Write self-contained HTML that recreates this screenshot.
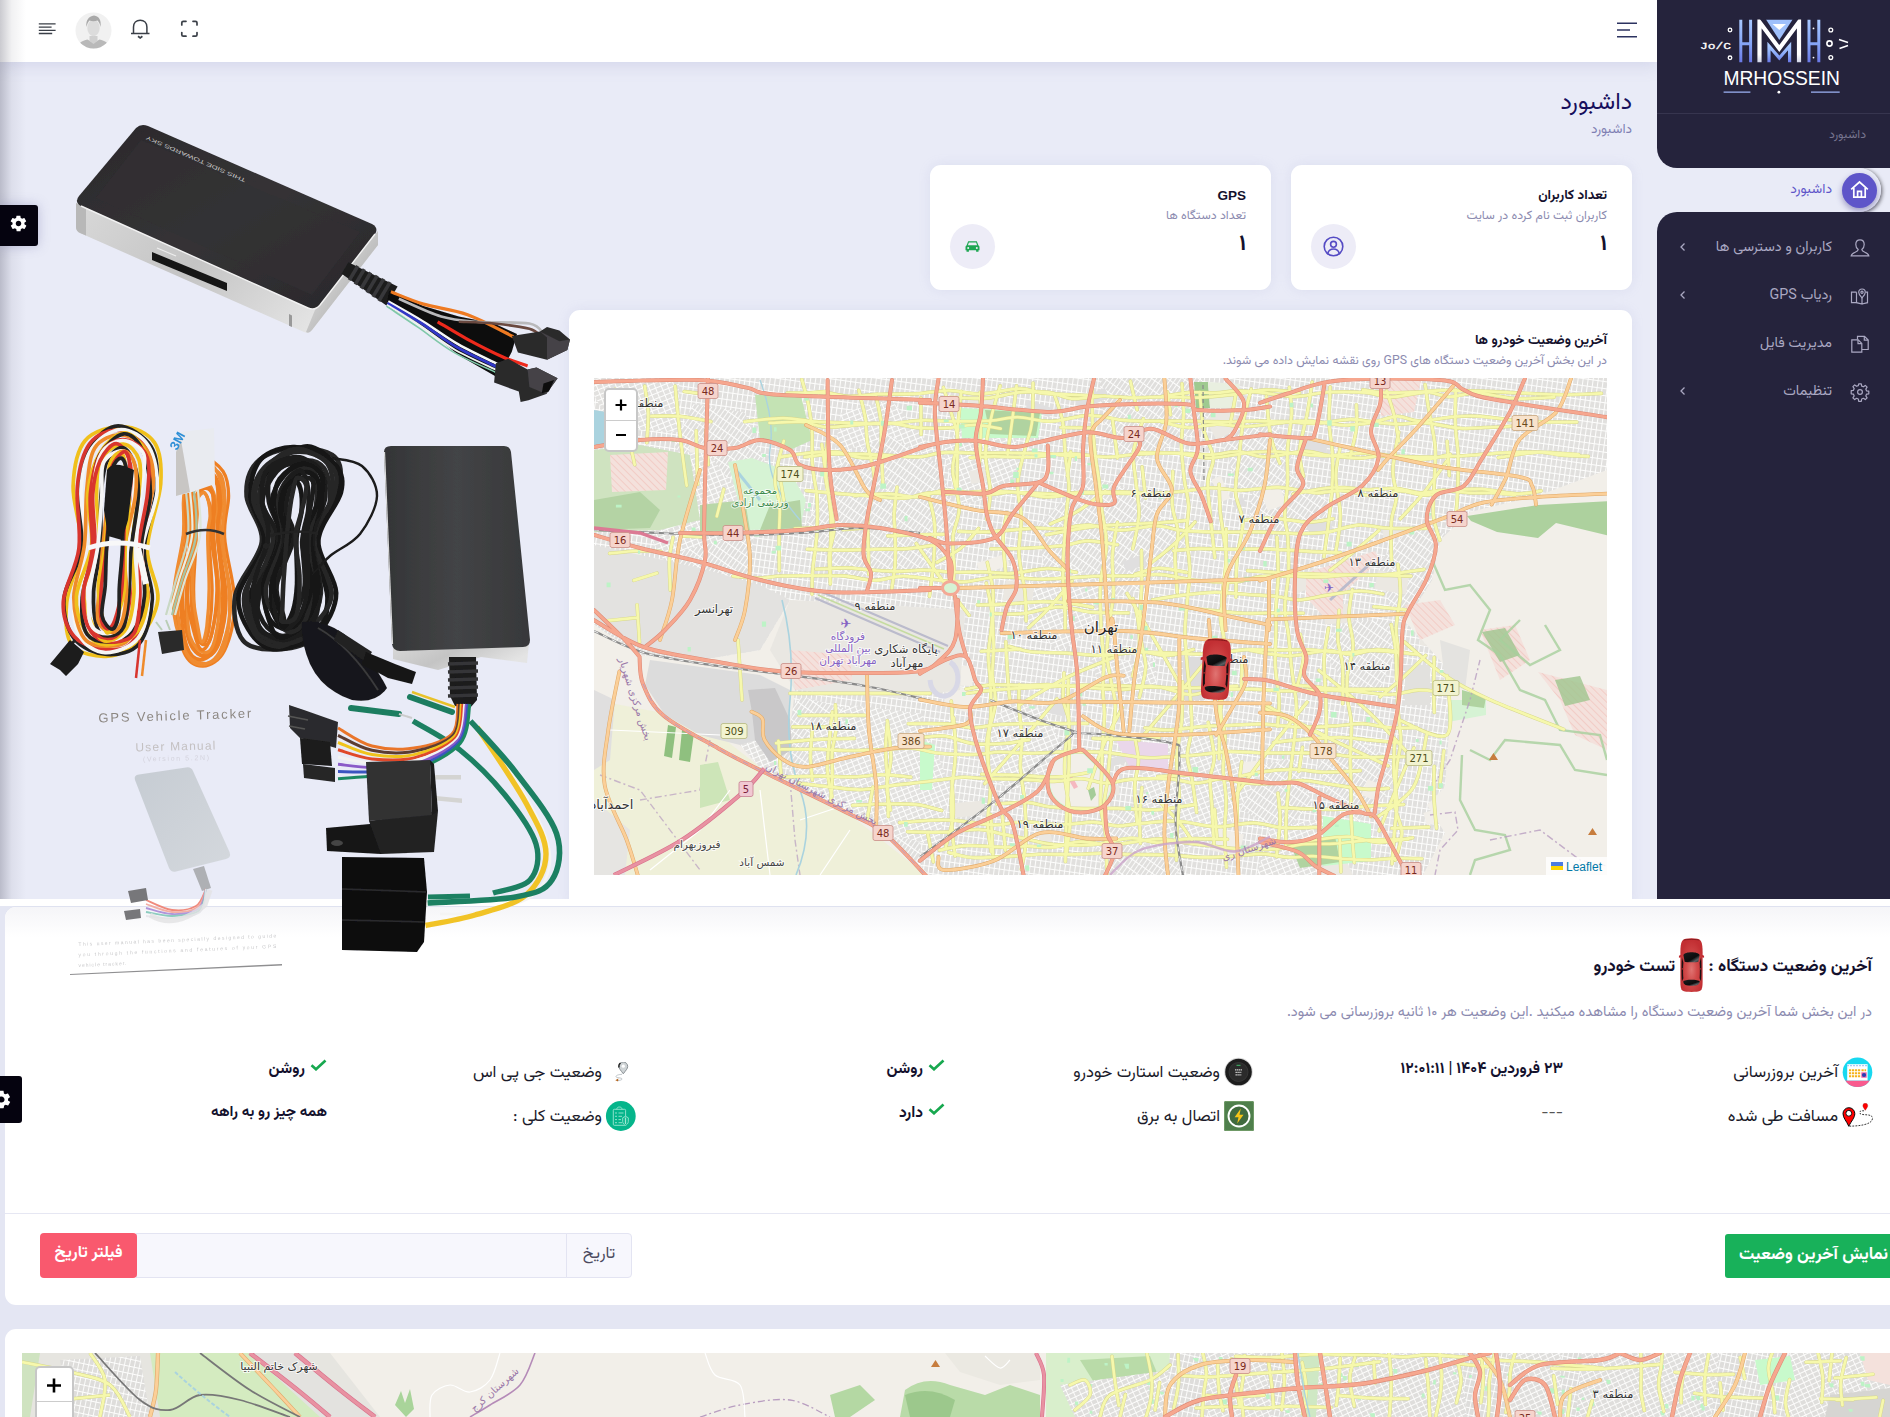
<!DOCTYPE html>
<html lang="fa" dir="rtl">
<head>
<meta charset="utf-8">
<title>داشبورد</title>
<style>
*{box-sizing:border-box;margin:0;padding:0}
html,body{width:1890px;height:1417px;overflow:hidden;background:#e9ebf7}
body{position:relative;font-family:"Liberation Sans","Vazirmatn","DejaVu Sans",sans-serif;color:#14112d;direction:rtl}
.abs{position:absolute}
.fa{font-family:"Vazirmatn","DejaVu Sans","Liberation Sans",sans-serif}
/* header */
#hdr{left:0;top:0;width:1657px;height:62px;background:#fff;box-shadow:0 4px 14px rgba(150,155,200,.25)}
#lshade{left:0;top:0;width:26px;height:899px;background:linear-gradient(90deg,rgba(60,60,80,.27),rgba(60,60,80,.07) 45%,rgba(60,60,80,0));z-index:5}
/* sidebar */
#sb-top{left:1657px;top:0;width:233px;height:168px;background:#25233c;border-bottom-left-radius:20px}
#sb-bot{left:1657px;top:212px;width:233px;height:687px;background:#25233c;border-top-left-radius:20px}
#sb-sep{left:1657px;top:113px;width:233px;height:1px;background:#37354f}
#sb-cap{right:24px;top:125px;white-space:nowrap;font-size:12.2px;color:#77758f}
#pill{left:-20px;top:18px;width:244px;height:44px;background:#e9ebf7;border-radius:0 22px 22px 0}#pillsh{left:180px;top:18px;width:44px;height:44px;border-radius:50%;box-shadow:1px 1px 4px rgba(0,0,0,.6)}
#pillc{left:1842px;top:173px;width:35px;height:35px;border-radius:50%;background:#5e55c9;box-shadow:0 3px 6px rgba(40,30,120,.4)}
.mi{right:58px;width:170px;font-size:14.3px;color:#aaa8c2;text-align:right;line-height:24px;margin-top:1.5px;height:24px;white-space:nowrap}
.chev{left:1679px;width:8px;height:10px}
/* title */
#ttl{right:258px;top:86px;font-size:23.6px;line-height:36px;color:#170f5c;white-space:nowrap}
#sub{right:258px;top:119.5px;font-size:13.5px;line-height:20px;color:#7f7fb3;white-space:nowrap}
.card{background:#fff;border-radius:11px;box-shadow:0 0 12px rgba(160,165,210,.18)}
.ct{font-weight:bold;font-size:13.5px;line-height:20px;color:#14112d;white-space:nowrap}
.cs{font-size:12.3px;line-height:18px;color:#8c8bb0;white-space:nowrap}
.cn{font-weight:bold;font-size:22px;line-height:28px;color:#14112d}
.ic{width:45px;height:45px;border-radius:50%;background:#edecf7}

/* bottom */
#strip{left:0;top:899px;width:1890px;height:7px;background:#fff}
#bwrap{left:0;top:906px;width:1890px;height:511px;background:#e4e6f3}
#bcard{left:5px;top:907px;width:1900px;height:398px;background:#fff;border-radius:11px;box-shadow:0 -1px 0 #dfe2f0}
#bgrad{left:5px;top:907px;width:1900px;height:30px;border-top-left-radius:11px;background:linear-gradient(180deg,#f5f5f8,#fff)}
#bdiv{left:5px;top:1213px;width:1890px;height:1px;background:#e6e7f3}
#bt{right:18px;top:951.5px;font-size:17px;font-weight:bold;line-height:30px;white-space:nowrap;color:#14112d}
#bd{right:18px;top:1002px;font-size:14.45px;line-height:22px;color:#8c8bb0;white-space:nowrap}
.lb{font-size:16.6px;line-height:28px;color:#1b1b2a;white-space:nowrap}
.vl{font-size:15.6px;font-weight:bold;line-height:24px;color:#14112d;white-space:nowrap}
.ck{display:inline-block;width:17px;height:12px;vertical-align:2px;margin-left:5px}
#gbtn{left:1725px;top:1234px;width:200px;height:44px;background:#18b15a;border-radius:3px 0 0 3px;color:#fff;font-size:16.9px;font-weight:bold;line-height:42px;padding-right:37px;text-align:right;white-space:nowrap}
#rbtn{left:40px;top:1233px;width:97px;height:45px;background:#f9596e;border-radius:4px;color:#fff;font-size:16.2px;font-weight:bold;line-height:41px;text-align:center;white-space:nowrap;z-index:2}
#inp{left:136px;top:1233px;width:431px;height:45px;background:#f7f7fd;border:1px solid #e3e4f2}
#ilb{left:566px;top:1233px;width:66px;height:45px;background:#f7f7fd;border:1px solid #e3e4f2;border-radius:0 4px 4px 0;font-size:16.3px;line-height:41px;text-align:center;color:#4a4a5e}
#card2{left:5px;top:1329px;width:1900px;height:120px;background:#fff;border-radius:11px}
</style>
</head>
<body>
<!-- HEADER -->
<div id="hdr" class="abs"></div>
<!-- header icons go here -->

<svg class="abs" style="left:1615px;top:20px" width="24" height="20" viewBox="0 0 24 20" fill="none" stroke="#2c3360" stroke-width="1.6"><path d="M2 3.300H22M2 10H15M2 16.700H22"/></svg>
<svg class="abs" style="left:36px;top:20px" width="22" height="18" viewBox="36 20 22 18" fill="none" stroke="#3a3f47" stroke-width="1.300"><path d="M38.800 23.800H55.600M38.800 27.100H51.600M38.800 30.400H55.600M38.800 33.500H52.200"/></svg>
<svg class="abs" style="left:75px;top:12px" width="37" height="37" viewBox="0 0 37 37"><defs><clipPath id="avc"><circle cx="18.500" cy="18.500" r="18"/></clipPath></defs><circle cx="18.500" cy="18.500" r="18" fill="#f1f1f1"/><g clip-path="url(#avc)"><path d="M2 37c.5-6 5-8 10.500-9.500l6 3.500 6-3.500C30 29 34.500 31 35 37z" fill="#b9b9b9"/><path d="M14.500 24h8v5l-4 3-4-3z" fill="#d0d0d0"/><ellipse cx="18.500" cy="16" rx="6.200" ry="8.200" fill="#dcdcdc"/><path d="M11.500 15c-1-6 2-11 7.500-11.500C24.500 4 26.500 9 25.500 15c-.5-3-1.500-5-3-6.500-2.500 1-6 1-8 0-1.500 1.500-2.500 3.500-3 6.500z" fill="#a9a9a9"/></g></svg>
<svg class="abs" style="left:129px;top:18px" width="23" height="22" viewBox="129 18 23 22" fill="none" stroke="#3a3f47" stroke-width="1.500"><path d="M131 33.500H149.500M133.500 33.500V27c0-4 2.800-6.800 6.700-6.800s6.700 2.800 6.700 6.800v6.500"/><path d="M138 36.300l2.200 1.600 2.200-1.600" stroke-width="1.700"/></svg>
<svg class="abs" style="left:179px;top:18px" width="21" height="21" viewBox="179 18 21 21" fill="none" stroke="#3a3f47" stroke-width="1.700" stroke-linecap="round" stroke-linejoin="round"><path d="M181.800 25V22.800q0-1.500 1.500-1.500H186M193 21.300h2.500q1.500 0 1.500 1.500V25M197 32.500v2.200q0 1.500-1.500 1.500H193M186 36.200h-2.700q-1.500 0-1.500-1.500V32.500"/></svg>


<!-- TITLE -->
<div id="ttl" class="abs fa">داشبورد</div>
<div id="sub" class="abs fa">داشبورد</div>

<!-- STAT CARDS -->
<div class="abs card" style="left:1291px;top:165px;width:341px;height:125px"></div>
<div class="abs ct fa" style="right:283px;top:185.5px">تعداد کاربران</div>
<div class="abs cs fa" style="right:283px;top:206.5px">کاربران ثبت نام کرده در سایت</div>
<div class="abs cn fa" style="right:283px;top:230.5px">۱</div>
<div class="abs ic" style="left:1311px;top:224px"></div>
<svg class="abs" style="left:1322px;top:235px" width="23" height="23" viewBox="0 0 23 23" fill="none" stroke="#554bc4" stroke-width="1.600"><circle cx="11.500" cy="11.500" r="9.300"/><circle cx="11.500" cy="9.300" r="2.900"/><path d="M5.800 18.300c.8-3 3-4.300 5.700-4.300s4.900 1.300 5.700 4.300"/></svg>

<div class="abs card" style="left:930px;top:165px;width:341px;height:125px"></div>
<div class="abs ct" style="right:644px;top:185.5px">GPS</div>
<div class="abs cs fa" style="right:644px;top:206.5px">تعداد دستگاه ها</div>
<div class="abs cn fa" style="right:644px;top:230.5px">۱</div>
<div class="abs ic" style="left:950px;top:224px"></div>
<svg class="abs" style="left:965px;top:240px" width="15" height="13" viewBox="0 0 15 13"><path d="M3.200 1.200h8.600l1.700 4.300c.6.200 1 .7 1 1.400v3.300h-1v1.600h-2.400v-1.600H3.900v1.600H1.500v-1.600h-1V6.900c0-.7.400-1.200 1-1.400z" fill="#1ea652"/><path d="M3.900 2.400h7.200l1 2.800H2.900z" fill="#edecf7"/><circle cx="3.200" cy="7.900" r="1" fill="#edecf7"/><circle cx="11.800" cy="7.900" r="1" fill="#edecf7"/></svg>


<!-- MAP CARD -->
<div class="abs card" style="left:569px;top:310px;width:1063px;height:600px"></div>
<div class="abs ct fa" style="right:283px;top:331px">آخرین وضعیت خودرو ها</div>
<div class="abs cs fa" style="right:283px;top:352px">در این بخش آخرین وضعیت دستگاه های GPS روی نقشه نمایش داده می شوند.</div>
<svg class="abs" style="left:594px;top:378px" width="1013" height="497" viewBox="594 378 1013 497" direction="ltr">
<defs>
<pattern id="r1" width="5" height="7" patternUnits="userSpaceOnUse" patternTransform="rotate(8)"><rect width="5" height="7" fill="#e1e0de"/><path d="M0 0H5M0 0V7" stroke="#fdfdfc" stroke-width="2.1"/></pattern>
<pattern id="r2" width="6" height="5" patternUnits="userSpaceOnUse" patternTransform="rotate(-22)"><rect width="6" height="5" fill="#e2e1df"/><path d="M0 0H6M0 0V5" stroke="#fdfdfc" stroke-width="2"/></pattern>
<pattern id="r3" width="4" height="9" patternUnits="userSpaceOnUse" patternTransform="rotate(35)"><rect width="4" height="9" fill="#e0dfdd"/><path d="M0 0H4M0 0V9" stroke="#fdfdfc" stroke-width="1.9"/></pattern>
<pattern id="hp" width="5" height="5" patternUnits="userSpaceOnUse" patternTransform="rotate(45)"><rect width="5" height="5" fill="#f4e1dc"/><path d="M0 0H5" stroke="#f0b8b0" stroke-width="1"/></pattern>
<clipPath id="mc"><rect x="594" y="378" width="1013" height="497"/></clipPath>
<clipPath id="uc"><path d="M594 378L1607 378L1607 470L1540 495L1470 512L1440 540L1432 580L1410 615L1404 620L1445 666L1449 731L1445 787L1427 805L1445 833L1423 875L930 875L884 833L847 813L764 772L740 745L790 730L795 690L960 690L965 610L790 600L760 650L700 660L640 655L594 625Z"/></clipPath>
</defs>
<g clip-path="url(#mc)">
<rect x="594" y="378" width="1013" height="497" fill="#f2efe9"/>
<path d="M594 700L700 720L770 775L850 815L930 878L594 878Z" fill="#eef0d5" opacity=".8"/>
<path d="M594 378L1607 378L1607 470L1540 495L1470 512L1440 540L1432 580L1410 615L1404 620L1445 666L1449 731L1445 787L1427 805L1445 833L1423 875L930 875L884 833L847 813L764 772L740 745L790 730L795 690L960 690L965 610L790 600L760 650L700 660L640 655L594 625Z" fill="url(#r1)"/>
<g clip-path="url(#uc)">
<path d="M890.8 399.6L942.7 460.2L879.9 507.7L829.3 482.1L841.2 412.9Z" fill="url(#r2)"/>
<path d="M1096.7 680L1091.7 658.7L1119.1 642.8L1142.8 631.5L1155.5 658.9L1156.6 684.9L1129 689.7Z" fill="url(#r2)"/>
<path d="M1056.1 633.6L1089.9 591.9L1138.3 585.6L1165.1 612L1152.1 660.7L1103.2 660.6Z" fill="url(#r1)"/>
<path d="M910.7 763.9L919.4 728.7L952.5 718.2L980.3 733.9L987.4 765.2L950.4 782.3Z" fill="url(#r1)"/>
<path d="M1099.7 382.7L1145.5 337.9L1193.3 353L1212.3 412.2L1193 449.8L1144.3 475.3L1106.5 439.3Z" fill="url(#r3)"/>
<path d="M694.7 558.2L717.8 605.9L680.3 666.2L630.9 621.1L634.9 569.7Z" fill="url(#r3)"/>
<path d="M1264.5 490.5L1259.3 437.9L1315.7 428.8L1343.9 473L1308.2 517Z" fill="url(#r1)"/>
<path d="M1226.5 576.7L1245.1 531.3L1296.6 538.7L1301.4 596L1260.9 630.2Z" fill="url(#r1)"/>
<path d="M574.3 764.2L649.1 771.1L675.6 823.6L626.9 857.8L581 834.2Z" fill="url(#r1)"/>
<path d="M835.3 818.4L788.7 811.7L789.1 766.3L835.9 760L866.4 787.3Z" fill="url(#r2)"/>
<path d="M877.6 544L832 500.2L852.1 447.7L901.8 444.9L942.1 461L935.5 499.5L916.6 530.9Z" fill="url(#r1)"/>
<path d="M1189.3 544.1L1144.9 588L1100.7 601.1L1048.9 588.5L1036.6 525.8L1087.5 476.7L1135.5 490.6Z" fill="url(#r3)"/>
<path d="M1207.7 762.9L1214.9 705.4L1281.7 698.1L1294.1 756L1263.7 783.5Z" fill="url(#r1)"/>
<path d="M1399 771L1386.6 794.8L1357.6 820.9L1327.3 795.1L1317.3 764.3L1345 734.9L1375.6 748.9Z" fill="url(#r3)"/>
<path d="M991.2 780.6L984.1 738.1L1008.1 702.4L1044.8 709.7L1064.5 751.5L1050.6 777.4L1014.2 789.2Z" fill="url(#r2)"/>
<path d="M1246.1 421.7L1276.2 426.1L1293.5 455.2L1273 478.4L1243 493.2L1218.5 467.2L1216 431.5Z" fill="url(#r3)"/>
<path d="M854.4 804L916.3 813.2L925.4 894.1L855.1 902.9L816.1 860.3Z" fill="url(#r3)"/>
<path d="M693 404.1L744.7 412.2L766.1 465.9L708.3 483.9L674.4 446.6Z" fill="url(#r3)"/>
<path d="M811.2 880.1L759.4 899.6L740.4 847.8L762.2 816.5L805 809.6L830 845.4Z" fill="url(#r3)"/>
<path d="M927.2 713.9L854.3 721.7L834 680.6L868.8 628.1L930.7 653.4Z" fill="url(#r1)"/>
<path d="M1251.5 495L1281.8 467.7L1309.3 485.5L1333.3 506.4L1314.7 527.9L1278.5 533L1248.6 522.2Z" fill="url(#r3)"/>
<path d="M1483.2 626.8L1427.9 639.2L1391.8 613.6L1378.1 563.1L1411 527.4L1473.2 538.4L1497.5 580.5Z" fill="url(#r3)"/>
<path d="M587.6 384.7L618.5 334.7L679 362L678.5 432L613.3 428.3Z" fill="url(#r2)"/>
<path d="M937.1 846.8L873.3 829.6L830.6 820.9L835.7 769.5L872 733.9L924.3 727.2L951.1 786.5Z" fill="url(#r2)"/>
<path d="M957.2 504.4L943.1 450.4L966.5 418.8L1011.9 424L1022 465.3L1003.2 496.4Z" fill="url(#r2)"/>
<path d="M701.2 788.6L688.4 814.9L659.3 816.7L637.8 787.9L643.1 758.5L677.5 734.3L699.2 756.2Z" fill="url(#r1)"/>
<path d="M673.8 733.2L727.5 723.7L773 746.7L788.2 808.7L741.7 854.4L685.5 840.4L671.3 788.5Z" fill="url(#r2)"/>
<path d="M1089.2 832.6L1127.2 805.3L1160.3 816.3L1184.1 866.6L1142.5 899.6L1108.7 883Z" fill="url(#r3)"/>
<path d="M1285 833.1L1236.4 807.2L1246.1 769.2L1293.9 757.2L1311.8 802.6Z" fill="url(#r3)"/>
<path d="M841.6 775.6L804.4 776.4L782.2 764.8L769 730L801.6 696.8L845 708.3L851.2 742.2Z" fill="url(#r3)"/>
<path d="M674.9 601.6L658 645.8L592 670.4L559.2 607.3L578 546.1L640.8 560.7Z" fill="url(#r3)"/>
<path d="M828.9 866.8L764.3 864.1L749.7 803L796.6 774.5L838.1 808.2Z" fill="url(#r3)"/>
<path d="M687.1 888.5L630 859.9L651.8 807.7L690.5 790.7L730.4 778.9L753.3 835.8L731.8 875.2Z" fill="url(#r1)"/>
<path d="M920.8 713.5L939.7 783.6L878.4 828.6L830.5 806.7L806.9 736.3L851.1 704.9Z" fill="url(#r2)"/>
<path d="M1347.9 684.7L1318.7 647.5L1348.1 620.3L1387.2 620.7L1395.7 651.4L1379.6 690.6Z" fill="url(#r3)"/>
<path d="M1021.8 618.4L1032.8 576.7L1064.9 561.6L1108.9 586L1088.5 631.7L1059.6 652.1Z" fill="url(#r2)"/>
<path d="M890 529.6L914.6 507.9L949.2 532.2L952.3 559.3L918.6 576.8L892.5 566.8Z" fill="url(#r2)"/>
<path d="M767.5 579L758.6 646.6L686.9 646.3L647.8 602.9L672.3 551.4L732 542.9Z" fill="url(#r1)"/>
<path d="M1142 769.8L1189.3 710.3L1259 776.7L1219.6 841.9L1145.4 855.7Z" fill="url(#r2)"/>
<path d="M639 575.1L641.2 494.8L699.6 441L759.1 520.7L709.7 581.7Z" fill="url(#r2)"/>
<path d="M681.4 590.4L634.2 630.2L569 615.6L589.9 552.9L647.2 532.6Z" fill="url(#r1)"/>
<path d="M971.3 397.6L945 416.8L908 412.3L881.1 384.1L903.9 348.9L943.2 342.3L979.5 369.1Z" fill="url(#r1)"/>
<path d="M740.9 595.2L715.1 619.6L680.3 592.2L677.6 552L715 542L753.1 537.9L751.1 572.5Z" fill="url(#r3)"/>
<path d="M1347.1 863.4L1322.8 898.8L1254.2 885.7L1269.4 827.9L1323.7 818.6Z" fill="url(#r2)"/>
<path d="M1209.5 536.8L1168.2 514.5L1130.8 465.9L1178.9 440L1217.3 425.1L1237 485.8Z" fill="url(#r1)"/>
<path d="M962.5 534.6L919.1 570.6L846.8 578.8L803 528.9L845.5 457.9L887.5 434.1L940.8 465.6Z" fill="url(#r3)"/>
<rect x="1367.4" y="779.3" width="13.2" height="16.9" fill="#f2efe9" transform="rotate(21 1367.4 779.3)"/>
<rect x="1382.1" y="528.6" width="26.6" height="10.7" fill="#ebe8e2" transform="rotate(-10 1382.1 528.6)"/>
<rect x="1323.4" y="605.8" width="28.8" height="18.7" fill="#ebe8e2" transform="rotate(-5 1323.4 605.8)"/>
<rect x="1232.4" y="501.2" width="11.6" height="8.6" fill="#e0dfdf" transform="rotate(-20 1232.4 501.2)"/>
<rect x="1423.4" y="812.9" width="33.7" height="12.8" fill="#f2efe9" transform="rotate(-17 1423.4 812.9)"/>
<rect x="681" y="624.3" width="27" height="16" fill="#ebe8e2" transform="rotate(-22 681 624.3)"/>
<rect x="950.1" y="684" width="26.2" height="21.5" fill="#f2efe9" transform="rotate(19 950.1 684)"/>
<rect x="1306.3" y="524" width="23.6" height="14.7" fill="#e0dfdf" transform="rotate(-18 1306.3 524)"/>
<rect x="969.1" y="471" width="15.7" height="13.1" fill="#ebe8e2" transform="rotate(-10 969.1 471)"/>
<rect x="654.4" y="503.3" width="15.9" height="17.5" fill="#f2efe9" transform="rotate(11 654.4 503.3)"/>
<rect x="989.7" y="398.1" width="10.1" height="23.9" fill="#ebe8e2" transform="rotate(23 989.7 398.1)"/>
<rect x="976.6" y="563.2" width="31" height="12.2" fill="#f2efe9" transform="rotate(-18 976.6 563.2)"/>
<rect x="1104.4" y="785.7" width="14.7" height="9.4" fill="#ebe8e2" transform="rotate(-2 1104.4 785.7)"/>
<rect x="1106.6" y="759.7" width="26" height="8.1" fill="#e0dfdf" transform="rotate(-17 1106.6 759.7)"/>
<rect x="631.5" y="546.6" width="11.1" height="26" fill="#f2efe9" transform="rotate(8 631.5 546.6)"/>
<rect x="1215.1" y="827.8" width="29.6" height="22.7" fill="#f2efe9" transform="rotate(13 1215.1 827.8)"/>
<rect x="912.3" y="684.3" width="11.9" height="8.6" fill="#f2efe9" transform="rotate(5 912.3 684.3)"/>
<rect x="1006.1" y="580" width="29.1" height="20" fill="#ebe8e2" transform="rotate(10 1006.1 580)"/>
<rect x="1048.6" y="700" width="19.5" height="12.9" fill="#e0dfdf" transform="rotate(12 1048.6 700)"/>
<rect x="858.4" y="847.1" width="17.5" height="18.2" fill="#e0dfdf" transform="rotate(-4 858.4 847.1)"/>
<rect x="949.8" y="803.5" width="33.9" height="14.5" fill="#ebe8e2" transform="rotate(-5 949.8 803.5)"/>
<rect x="1211.5" y="479.8" width="10.1" height="24.2" fill="#f2efe9" transform="rotate(-23 1211.5 479.8)"/>
<rect x="1289.1" y="579" width="31.2" height="16.3" fill="#ebe8e2" transform="rotate(-22 1289.1 579)"/>
<rect x="612.5" y="650.3" width="25.4" height="24.4" fill="#f2efe9" transform="rotate(6 612.5 650.3)"/>
<rect x="1122.6" y="561.7" width="22.1" height="10.6" fill="#e0dfdf" transform="rotate(-20 1122.6 561.7)"/>
<rect x="1037.8" y="833.5" width="12.6" height="16.8" fill="#ebe8e2" transform="rotate(-11 1037.8 833.5)"/>
<rect x="706.4" y="842.1" width="33.4" height="16.7" fill="#f2efe9" transform="rotate(8 706.4 842.1)"/>
<rect x="1378" y="570.1" width="31.7" height="19.2" fill="#ebe8e2" transform="rotate(10 1378 570.1)"/>
<rect x="1260.1" y="488.8" width="19.7" height="23.2" fill="#f2efe9" transform="rotate(-19 1260.1 488.8)"/>
<rect x="1075" y="400.4" width="32.5" height="10.8" fill="#e0dfdf" transform="rotate(-23 1075 400.4)"/>
<rect x="725.6" y="855.6" width="29.6" height="11.5" fill="#f2efe9" transform="rotate(12 725.6 855.6)"/>
<rect x="1304.1" y="437.7" width="24.4" height="17.9" fill="#e0dfdf" transform="rotate(11 1304.1 437.7)"/>
<rect x="952.9" y="665.5" width="20.2" height="19.9" fill="#f2efe9" transform="rotate(2 952.9 665.5)"/>
<rect x="968.2" y="391.5" width="24.9" height="16.8" fill="#ebe8e2" transform="rotate(-2 968.2 391.5)"/>
<rect x="1241.4" y="762.2" width="21" height="11.2" fill="#f2efe9" transform="rotate(-5 1241.4 762.2)"/>
<rect x="689.9" y="442.9" width="20.3" height="9.7" fill="#f2efe9" transform="rotate(2 689.9 442.9)"/>
<rect x="1028.5" y="400" width="25.3" height="9.5" fill="#e0dfdf" transform="rotate(19 1028.5 400)"/>
<rect x="1205.1" y="419.2" width="28" height="24.1" fill="#ebe8e2" transform="rotate(-29 1205.1 419.2)"/>
<rect x="1319.9" y="868.1" width="27.6" height="22.7" fill="#ebe8e2" transform="rotate(-22 1319.9 868.1)"/>
<rect x="1424.7" y="621" width="33" height="24.5" fill="#ebe8e2" transform="rotate(13 1424.7 621)"/>
</g>
<path d="M594 545L700 568L760 585L790 600L760 650L700 660L645 648L594 622Z" fill="#e3e2e0"/>
<path d="M650 660L760 675L790 690L790 730L740 745L700 735L665 715L645 685Z" fill="#dcdcdc"/>
<path d="M748 690L775 688L790 720L792 750L770 762L755 740L752 712Z" fill="#c9c8c9"/>
<path d="M790 600L965 610L960 690L900 698L795 690L770 650Z" fill="#e9e7e2"/>
<path d="M790 650L850 655L852 680L795 690Z" fill="url(#hp)"/>
<path d="M815 598L940 652M822 592L948 646" stroke="#bbbbcc" stroke-width="2.2" fill="none"/>
<path d="M818 595L944 649" stroke="#c5dca0" stroke-width="1.6" fill="none"/>
<path d="M930 680a14 18 0 1 0 20 -18" fill="none" stroke="#d8d8e6" stroke-width="5"/>
<path d="M594 450L640 445L690 455L700 520L660 530L594 532Z" fill="#cfe3c0"/>
<path d="M610 455L668 452L666 490L612 492Z" fill="url(#hp)"/>
<path d="M594 500L640 492L660 510L650 528L594 530Z" fill="#b4d3a4"/>
<path d="M594 410L606 412L607 445L594 447Z" fill="#aad3df"/>
<path d="M728 462L752 458L790 472L806 500L800 528L748 530L738 500Z" fill="#d6f3d4"/>
<path d="M770 505L800 500L802 528L760 530Z" fill="#b4d3a4"/>
<path d="M736 470L760 500" stroke="#aad3df" stroke-width="3"/>
<path d="M700 505L745 500L750 530L700 532Z" fill="#b9d7a8"/>
<path d="M755 395L800 392L812 440L790 450L760 440Z" fill="#c4e3b4"/>
<path d="M960 408L1042 412L1038 438L962 438Z" fill="#c8facc"/>
<path d="M985 410L1040 413L1036 436L990 434Z" fill="#b0d3a0"/>
<path d="M1194 382L1208 382L1210 408L1196 408Z" fill="#9fca90"/>
<path d="M1208 382L1240 384L1236 408L1210 408Z" fill="#e9efe0"/>
<path d="M1380 380L1421 380L1414 412L1381 416Z" fill="url(#hp)"/>
<path d="M1306 573L1375 551L1380 560L1343 593L1343 616L1323 616L1306 597Z" fill="url(#hp)"/>
<path d="M1330 600L1372 562" stroke="#bbbbcc" stroke-width="3"/>
<path d="M1116 740L1168 744L1168 770L1129 766Z" fill="#ead7ea"/>
<path d="M1183 657L1205 657L1205 700L1183 700Z" fill="#dddcdc"/>
<path d="M1079.3 751C1075.1 752.7 1059 755 1054 761C1049 767 1048.1 779.5 1049 786.7C1049.9 793.9 1054.2 800 1059.5 804C1064.8 808 1073.6 811 1081 811C1088.4 811 1099 808.7 1104 804C1109 799.3 1113.9 791.2 1111 783C1108.1 774.8 1092 760.3 1086.7 755C1081.4 749.7 1080.5 751.7 1079.3 751Z" fill="#f2efe9" stroke="#c8facc" stroke-width="3"/>
<path d="M1066 775l8 14 4-2-7-13z" fill="#f5b8c0"/><path d="M1088 790l6 -3 2 8 -5 6z" fill="#a4cc98"/>
<path d="M1323 816L1371 824L1371 861L1323 866Z" fill="#c8facc"/>
<path d="M1290 843L1335 836L1340 862L1300 868Z" fill="#b0d3a0"/>
<path d="M920 740L935 745L932 790L920 790Z" fill="#c8facc"/>
<path d="M1467 516L1538 505L1610 501L1610 536L1556 523L1538 538L1497 532L1471 521Z" fill="#add19e"/>
<path d="M1448 700L1486 700L1486 715L1448 722Z" fill="#d6f3d4"/><path d="M1462 690L1486 697L1484 708L1462 705Z" fill="#b0d3a0"/>
<path d="M1538 672L1607 690L1607 750L1575 735L1560 700Z" fill="url(#hp)"/>
<path d="M1480 630L1515 625L1530 660L1500 680Z" fill="url(#hp)"/><path d="M1482 632L1505 628L1520 655L1500 662Z" fill="#9fc58f" opacity=".8"/>
<path d="M1555 680L1580 676L1590 700L1565 706Z" fill="#9fc58f" opacity=".8"/>
<path d="M1405 605L1440 600L1455 625L1420 640Z" fill="url(#hp)"/>
<path d="M1440 640L1470 650L1465 690L1445 680Z" fill="#e4e3e0"/><path d="M1405 665L1430 665L1430 705L1405 705Z" fill="#e2e1de"/>
<path d="M1432 560L1445 590L1470 585L1490 610L1478 640L1500 655L1520 690L1545 700L1560 730L1600 735L1607 760" fill="none" stroke="#a6cf9c" stroke-width="2.4" opacity=".8"/>
<path d="M1470 750L1490 760L1505 740L1560 745L1575 770L1607 775" fill="none" stroke="#a6cf9c" stroke-width="2.4" opacity=".8"/>
<path d="M1462 755L1460 800L1475 830L1505 835L1510 850L1475 860L1470 875" fill="none" stroke="#a6cf9c" stroke-width="2.4" opacity=".8"/>
<path d="M1520 620L1500 640L1530 665L1560 650L1545 625" fill="none" stroke="#a6cf9c" stroke-width="2.4" opacity=".8"/>
<path d="M1430 790L1450 760L1470 700L1480 660M1430 815L1455 812L1458 830L1440 850L1435 875M1490 840L1540 830L1580 860L1607 866" fill="none" stroke="#b89dc0" stroke-width="1.4" stroke-dasharray="7 3 2 3" opacity=".8"/>
<path d="M600 775L640 790L700 870M640 800L700 790L710 740M790 780L795 840L800 875" fill="none" stroke="#b89dc0" stroke-width="1.4" stroke-dasharray="7 3 2 3" opacity=".7"/>
<path d="M668 725L676 727L672 758L664 756ZM682 730L694 733L690 762L679 760Z" fill="#8fc07f"/>
<path d="M700 765L718 762L730 800L700 808Z" fill="#cde5b8"/>
<path d="M594 690L615 700L610 760L594 770Z" fill="#e0dfdf"/><path d="M594 800L630 830L625 875L594 875Z" fill="#e6e5e2"/>
<path d="M610 730L720 735M650 870L700 830L730 790M760 790L770 875M800 820L860 800M820 875L850 830" fill="none" stroke="#fff" stroke-width="1.2"/>
<path d="M782 600Q795 650 790 700T800 790T796 875" fill="none" stroke="#aad3df" stroke-width="1.6"/>
<path d="M760 380Q775 420 770 450T800 520" fill="none" stroke="#aad3df" stroke-width="1.4"/>
<path d="M684.1 391.5 L708.7 394.6M787.1 393.1C793.4 393.1 814.8 392.4 825.2 392.9C835.6 393.5 840.5 396.2 849.3 396.3C858 396.5 873 394.5 877.7 394.1M950.1 397.4C956.1 397.5 975 399 986.4 398.2C997.9 397.3 1008.4 393.4 1018.8 392.4C1029.2 391.5 1040 391.3 1048.8 392.3C1057.6 393.3 1062.2 398 1071.6 398.6C1081 399.2 1099.6 396.2 1105.2 395.8M1161.7 396.6C1166.7 395.9 1182.5 393 1191.5 392.4C1200.5 391.8 1208.1 393 1215.9 392.8C1223.7 392.5 1230.5 390.9 1238.3 390.9C1246 390.9 1252.8 391.6 1262.2 392.6C1271.6 393.5 1283.7 396.6 1294.7 396.6C1305.6 396.5 1315.9 392.8 1327.9 392.2C1339.9 391.6 1356.3 391.9 1366.8 392.7C1377.2 393.6 1380.5 397.3 1390.5 397.2C1400.5 397.1 1416.9 392.3 1426.6 392.2C1436.3 392.1 1440.4 396.6 1448.8 396.7C1457.2 396.9 1465.9 392.8 1477.1 393.1C1488.3 393.4 1503.1 397.9 1516 398.6C1528.8 399.2 1547.8 397.4 1554.2 397.1M792.5 394.3 L827.9 391.2M879.8 394.2C886 394.1 905.5 394.3 917 393.7C928.5 393.1 938.4 390.4 949 390.5C959.5 390.5 968.6 394.3 980.4 394C992.2 393.7 1009.5 388.8 1019.8 388.6C1030 388.5 1032.4 392 1042 393.1C1051.7 394.1 1066.9 394.4 1077.4 395C1088 395.5 1096.3 395.7 1105.3 396.2C1114.4 396.6 1121.5 397.6 1131.6 397.7C1141.8 397.8 1155.3 396.8 1166.1 396.8C1176.9 396.7 1185.2 398 1196.5 397.6C1207.9 397.2 1222.4 395.7 1234 394.4C1245.6 393.1 1255.3 390.1 1266.2 389.9C1277.2 389.6 1293.9 392.3 1299.5 392.8M1362.8 389.9C1366.5 390.3 1376 392.3 1385.3 392.6C1394.6 393 1409.3 392.4 1418.7 392C1428.1 391.6 1431.9 390.5 1441.9 390.3C1451.9 390.2 1468.6 390.7 1478.6 391C1488.6 391.3 1491.4 391.6 1501.8 392.1C1512.2 392.6 1530.3 393.6 1540.8 394C1551.3 394.5 1554.7 394.8 1564.8 394.7C1574.9 394.6 1595.3 393.6 1601.4 393.4M651.3 416.2C656.1 416.2 670 415.4 679.9 416.3C689.9 417.2 705.8 420.7 711 421.6M769.5 422.9C774.7 422.8 791.9 421.3 801.1 422C810.4 422.6 817.2 426.4 824.8 427C832.4 427.7 836.5 426.6 846.8 425.9C857.1 425.2 874.7 422.5 886.4 422.8C898.1 423.1 907 426.7 917.3 427.6C927.5 428.5 938.6 428.4 948.2 427.9C957.8 427.5 966.1 424.7 974.8 424.8C983.6 425 996.4 428 1000.7 428.7M1060.9 427.5 L1094.2 427.9M1161.3 421.7C1165.7 422.6 1178.7 427.1 1188 427.5C1197.3 428 1207 424.5 1216.8 424.3C1226.7 424.2 1236.2 426.8 1247.1 426.5C1258.1 426.2 1272.1 423.5 1282.7 422.6C1293.3 421.7 1300.3 420.6 1310.6 421C1320.9 421.5 1333.8 425 1344.5 425.3C1355.1 425.6 1365.4 422.9 1374.4 422.7C1383.4 422.5 1390.2 424.1 1398.7 424.1C1407.1 424.2 1414.8 422.2 1424.9 422.9C1435.1 423.6 1449.7 427.4 1459.6 428.2C1469.5 429 1475 427.9 1484.4 427.5C1493.8 427.2 1506.3 426.6 1515.8 426C1525.3 425.4 1537 424.3 1541.2 424M744.6 421.7C751 421.1 770.7 418.1 783 418.1C795.3 418.2 806.7 421.1 818.4 421.9C830.2 422.7 841.8 422.6 853.4 422.9C865 423.2 876.7 424 888 423.6C899.4 423.2 910.5 420.7 921.6 420.3C932.7 419.9 943.3 421.3 954.9 421.4C966.5 421.5 980.6 421.4 991 420.7C1001.4 420 1007.5 417 1017.5 417.1C1027.4 417.2 1038.7 421.6 1050.7 421.3C1062.7 421.1 1077 415.5 1089.4 415.3C1101.9 415.2 1112.8 419.4 1125.4 420.4C1138 421.3 1154.2 421 1165 421.1C1175.7 421.3 1180.5 421 1189.9 421.1C1199.2 421.2 1210.7 421.8 1221.2 421.8C1231.7 421.8 1242.1 421.2 1252.9 421.2C1263.8 421.1 1276 421.3 1286.5 421.6C1296.9 422 1305.2 423.6 1315.8 423.3C1326.5 422.9 1340.4 419.7 1350.2 419.4C1359.9 419 1366.5 421.9 1374.4 421.4C1382.2 420.9 1389.8 416.4 1397.4 416.3C1404.9 416.2 1410.2 420.9 1419.6 421C1429.1 421.1 1444.1 417.5 1454.2 416.7C1464.3 415.9 1470.6 415.7 1480.2 416.3C1489.8 416.8 1501.6 419.1 1511.7 420C1521.8 420.9 1529.9 421.5 1540.8 421.8C1551.6 422.2 1570.8 422 1576.8 422.1M780.2 457.1C785.1 456.4 800.2 453.6 809.9 452.8C819.6 452 829.8 451.3 838.4 452.1C847 452.9 851.6 457 861.4 457.7C871.3 458.4 891.5 456.6 897.6 456.4M970.1 457.7C974.1 457.5 983.9 456.5 993.9 456.4C1003.9 456.3 1017.5 457.6 1029.9 457.2C1042.3 456.7 1055.4 453.6 1068.2 453.6C1080.9 453.6 1094.2 456.9 1106.2 457C1118.2 457.1 1128.4 454.6 1140.2 454C1152.1 453.4 1165.9 452.6 1177.3 453.3C1188.8 454 1197.3 458.1 1208.9 458C1220.5 457.9 1236.1 453.9 1246.8 452.8C1257.5 451.8 1264.8 451.4 1273 451.5C1281.2 451.6 1287.1 452.8 1296 453.5C1305 454.2 1315.5 455.8 1326.9 455.8C1338.3 455.7 1353.1 453.1 1364.4 453.1C1375.7 453.2 1383.6 455.4 1394.8 456.1C1406.1 456.7 1419.2 457.3 1432 457.1C1444.7 457 1459.1 455.9 1471.3 455.2C1483.4 454.4 1493.4 453.2 1504.7 452.7C1516 452.2 1526.7 451.8 1539 452.1C1551.3 452.4 1572.1 454.1 1578.7 454.5M804.7 457C809.4 456.5 822.6 454.5 832.7 454C842.8 453.6 856 454 865.2 454.2C874.4 454.4 878.9 454.9 887.9 455.3C897 455.7 910.8 457.3 919.8 456.8C928.8 456.4 932.7 453.2 941.9 452.6C951.1 451.9 962.9 452.9 974.8 453C986.7 453.1 1001.3 452.8 1013.2 453C1025.2 453.1 1035.2 453.1 1046.5 453.8C1057.7 454.4 1075 456.4 1080.7 456.9M1136.3 452.6C1142.7 452.6 1162.2 452.6 1174.7 453C1187.2 453.3 1200.9 454.9 1211.5 454.7C1222.1 454.4 1229.1 451.2 1238.2 451.5C1247.2 451.9 1254.8 456.9 1265.9 456.9C1277 456.8 1294.4 451.5 1304.7 451.3C1315 451 1318.2 454 1327.4 455.2C1336.6 456.3 1350.7 458.1 1359.8 458.2C1368.9 458.3 1371.8 455.7 1382 455.9C1392.2 456.1 1409.5 459.8 1420.9 459.6C1432.3 459.3 1445.4 455.3 1450.3 454.4M1498.2 457.6C1504.8 456.7 1527 452.7 1537.6 452.3C1548.2 451.9 1553.5 454.5 1561.9 455.2C1570.4 455.9 1583.9 456.2 1588.3 456.4M854.1 495.7C859.8 495.3 877.8 493.6 888.3 493.8C898.7 494 907.1 497.4 916.8 496.9C926.5 496.3 934.9 490.6 946.3 490.3C957.8 490 974.3 494.5 985.4 494.8C996.4 495.1 1002.3 491.7 1012.6 492.1C1022.9 492.4 1036 496.8 1047.3 497C1058.5 497.2 1069.2 494 1080.2 493.3C1091.1 492.7 1101.2 493 1113 493.1C1124.8 493.1 1139.2 493.8 1151 493.5C1162.8 493.2 1173.8 492.1 1183.8 491.2C1193.8 490.2 1201.5 488 1210.9 487.8C1220.4 487.7 1229.3 490.4 1240.5 490.4C1251.8 490.3 1266.1 487 1278.5 487.4C1290.9 487.8 1304.5 492.2 1315.1 492.8C1325.7 493.3 1331.8 490 1342 490.6C1352.2 491.2 1366.7 496.3 1376.4 496.4C1386 496.4 1391.7 491.1 1399.9 490.9C1408.1 490.7 1416.9 495.1 1425.5 495.1C1434.1 495 1442.3 491.5 1451.7 490.5C1461.1 489.5 1471.1 488.7 1482.1 489.2C1493.1 489.8 1507.8 493.5 1517.6 493.8C1527.5 494.1 1537.3 491.4 1541.2 490.9M806.2 490.6C811.6 491.1 828.1 492.7 838.4 493.6C848.8 494.4 857 495 868.1 495.8C879.2 496.6 895 498.7 904.9 498.2C914.8 497.8 919.8 493.8 927.5 493C935.2 492.3 940.8 494.1 951 493.7C961.2 493.4 976 491.3 988.7 491.1C1001.4 491 1015.8 492.4 1027.1 492.8C1038.3 493.3 1046.9 494.1 1056.2 494C1065.5 493.9 1071.9 492.8 1082.9 492.4C1093.8 492.1 1110.5 491.7 1122.1 491.9C1133.6 492.1 1147.1 493.4 1152.2 493.7M1293.1 494.1C1299.7 493 1320.2 488.2 1332.8 487.5C1345.3 486.7 1357.9 489.5 1368.4 489.7C1378.9 489.8 1387.2 487.8 1395.8 488.3C1404.3 488.9 1411.6 492.4 1419.7 492.8C1427.7 493.1 1435.5 490.3 1443.9 490.4C1452.3 490.4 1462.1 492.5 1470.2 492.9C1478.3 493.3 1484.9 492.5 1492.4 492.8C1499.9 493.2 1511.3 494.5 1515.1 494.9M794.8 528.5 L825.7 527.6M887.8 535.9C892.9 535.7 909.1 535 918.4 534.7C927.8 534.4 939.8 534.3 944.1 534.3M1046.3 534.7C1050 534 1060.8 532 1068.6 530.6C1076.4 529.3 1083.8 527.6 1093.1 526.6C1102.5 525.5 1113 525 1124.6 524.4C1136.3 523.7 1152.5 523.2 1163 522.5C1173.5 521.8 1183.4 520.6 1187.5 520.2M1245.9 520.1C1250.4 519.7 1262.5 517.7 1272.8 518.1C1283.1 518.4 1297.5 522 1307.6 522.1C1317.6 522.2 1328.9 519.3 1333.2 518.7M681 536 L704.1 537M842.9 529.7 L865.2 527.9M958.5 531.4C963 531.5 977 532.2 985.5 531.9C994.1 531.7 1001.8 530.8 1010 530.1C1018.2 529.5 1026.4 528.4 1034.7 528.1C1042.9 527.9 1050.6 529.2 1059.6 528.7C1068.6 528.2 1078.5 524.9 1088.6 525.1C1098.7 525.4 1108.8 530.1 1120.1 530.2C1131.3 530.3 1145.4 525.7 1156.1 525.8C1166.7 525.9 1173.3 529.7 1184.1 530.7C1194.8 531.8 1208.3 531.9 1220.6 532.1C1232.9 532.3 1245.1 531.7 1257.8 531.9C1270.6 532.2 1285.6 533.5 1297.1 533.6C1308.5 533.6 1316.5 533.6 1326.7 532.2C1336.9 530.7 1347.8 525.8 1358.2 525.1C1368.7 524.5 1377.6 527.8 1389.3 528.3C1401.1 528.8 1422.2 528.3 1428.8 528.3M609.6 553.4C614.1 553 628.2 551.3 636.8 551C645.3 550.7 656.9 551.4 661 551.5M807.2 549.2C812.6 549.4 828.3 550.2 839.5 550.2C850.6 550.2 862.9 549.6 874.2 549.3C885.5 549.1 897.4 549.2 907.3 548.6C917.2 547.9 929.2 545.8 933.6 545.3M990.9 548.8C996.2 548.7 1010.9 548.8 1022.9 548.3C1034.9 547.7 1051.9 547 1062.7 545.7C1073.4 544.5 1078.4 541.1 1087.5 540.9C1096.7 540.8 1112.5 544.1 1117.5 544.7M1173.4 550.7C1177.6 550.4 1188.4 548.9 1198.2 548.6C1208 548.4 1220.5 549.3 1232.4 549.3C1244.2 549.4 1257.1 548.7 1269.1 549C1281.2 549.3 1292.6 550.5 1304.5 551.1C1316.4 551.8 1334.6 552.5 1340.6 552.7M733 576.2C737.3 576.5 750.7 578.1 758.7 578C766.6 578 772 576.4 780.8 576C789.7 575.6 801.4 575.7 811.8 575.7C822.2 575.7 833 575.1 843.5 575.9C854 576.7 864.8 580.2 874.8 580.3C884.8 580.3 892 576.1 903.2 576.2C914.5 576.2 931.8 579.5 942.3 580.5C952.8 581.4 956.8 582.3 966.1 581.7C975.4 581.1 986.3 577.2 998.2 576.8C1010.1 576.4 1025.5 579 1037.6 579.2C1049.7 579.3 1060 578.2 1070.8 577.6C1081.6 577.1 1092.5 576.2 1102.3 576C1112.2 575.7 1120.2 576.2 1130.1 575.9C1139.9 575.7 1150.3 573.8 1161.3 574.6C1172.2 575.3 1183.6 579 1195.7 580.3C1207.8 581.5 1222.8 582.6 1233.7 582C1244.6 581.4 1252.1 577.6 1260.9 576.6C1269.7 575.6 1276.6 575.9 1286.3 576C1296 576 1308.1 577.2 1319.2 577C1330.2 576.9 1341 575.2 1352.6 575C1364.2 574.7 1379.1 575.4 1388.8 575.5C1398.5 575.7 1407.2 576 1410.9 576.1M633.8 580.4 L656.9 573.1M816.2 569.1C821.2 568.9 837.3 567.8 846.1 567.9C854.9 568 860.5 569.2 868.9 569.8C877.3 570.4 887.4 571.4 896.6 571.4C905.8 571.5 914.3 570 924 570.1C933.8 570.2 945 571.9 955 572.2C964.9 572.5 974.5 571.8 984 572C993.4 572.2 1000.9 574 1011.5 573.4C1022.2 572.8 1037 568.7 1047.8 568.5C1058.6 568.3 1071.5 571.7 1076.3 572.3M1135.1 574.3C1139 573.3 1149.7 568.5 1158.3 568.2C1166.9 567.9 1181.9 571.7 1186.6 572.4M1247.7 570.6C1253.4 570.9 1270.4 572.3 1282.4 572.9C1294.3 573.5 1307 573.9 1319.4 574.2C1331.7 574.5 1345.5 574.8 1356.4 574.9C1367.3 574.9 1373.5 575.6 1384.8 574.7C1396.1 573.8 1417.5 570.3 1424 569.4M977.4 604.9C982.1 604.8 995.2 604.7 1005.7 604.1C1016.2 603.6 1029.8 601.9 1040.3 601.7C1050.8 601.5 1059.9 602.2 1068.6 603.1C1077.4 604 1088.7 606.6 1092.7 607.3M1152.5 599.9C1157.3 599.1 1170.9 596.6 1181.3 595.4C1191.7 594.1 1203.8 592.4 1214.8 592.3C1225.8 592.1 1236.7 593.8 1247.1 594.5C1257.4 595.2 1268.3 595.6 1276.9 596.5C1285.5 597.4 1290.7 600.1 1298.9 599.9C1307.1 599.7 1316.1 596.9 1326.1 595.4C1336.1 593.9 1349.5 591.2 1359 591C1368.5 590.8 1379 593.5 1383 594M607.6 620.7 L637.3 617.6M995.1 613.6C999.7 613.6 1012.5 614.6 1023.1 613.5C1033.7 612.4 1047.4 607.3 1058.8 607C1070.2 606.8 1079.9 611.1 1091.5 612.1C1103.2 613 1122.3 612.7 1128.5 612.9M1184 607.5C1189.1 608 1204 609.6 1214.1 610.6C1224.2 611.5 1235.6 612.9 1244.5 613.3C1253.5 613.7 1258 613 1267.8 613C1277.6 612.9 1297.4 613.1 1303.3 613.2M1373.8 606.7 L1405.6 609.7M1009 646.3C1012.7 647.2 1021.3 650.7 1031 651.8C1040.7 652.9 1055.5 652.5 1067.2 653.1C1078.9 653.7 1090.8 655.9 1101.1 655.3C1111.4 654.7 1118.4 649.4 1129.2 649.4C1140 649.4 1155.4 655.5 1166.1 655.5C1176.8 655.5 1188.8 650.5 1193.4 649.5M1249.5 650.2C1255.9 651.1 1274.9 655.8 1287.8 655.9C1300.8 655.9 1316.8 650.8 1327.1 650.6C1337.5 650.3 1341.8 654.6 1350.2 654.4C1358.6 654.2 1367.9 649.8 1377.6 649.6C1387.2 649.4 1403.1 652.5 1408.2 653.1M981.2 651.3 L1020.5 649.1M1103.9 655.7C1109.7 655.1 1127.3 652.6 1138.6 652.2C1150 651.7 1159.9 652.8 1171.8 653.1C1183.8 653.4 1198 654.6 1210.3 654C1222.6 653.4 1234.1 650.3 1245.7 649.6C1257.4 649 1269.5 650.1 1280 650.1C1290.5 650.1 1298.1 649.2 1308.7 649.7C1319.3 650.1 1333.9 652.6 1343.7 652.7C1353.5 652.8 1359.5 650.5 1367.5 650.4C1375.5 650.2 1383.1 651.2 1391.5 651.8C1400 652.5 1413.7 654.1 1418.1 654.5M967.1 693.3C972.2 692.7 987.7 690.6 997.5 689.7C1007.3 688.8 1016.5 688.5 1025.9 687.9C1035.3 687.4 1042.6 686.9 1053.9 686.4C1065.2 685.9 1081.3 685.1 1093.6 685.1C1105.9 685 1116.9 685.7 1127.7 686C1138.6 686.3 1148.3 685.4 1158.7 686.9C1169.1 688.3 1181.2 694.1 1190.2 694.7C1199.2 695.2 1202.8 691.2 1212.8 690.2C1222.9 689.3 1238.7 689 1250.5 689.1C1262.4 689.2 1272.3 690.8 1284 691C1295.6 691.1 1308.5 689.9 1320.3 689.9C1332 690 1342.9 690.4 1354.5 691.2C1366.1 692 1379.3 694.7 1389.9 694.5C1400.5 694.4 1409.6 690.6 1418.2 690.1C1426.7 689.7 1437.4 691.5 1441.3 691.7M966.1 689C970.4 688.4 982.2 685.5 992 684.9C1001.8 684.3 1015.1 685.5 1024.8 685.4C1034.6 685.4 1040.7 684.4 1050.4 684.7C1060.1 684.9 1071.4 686.3 1083.2 687.1C1095 688 1110.4 689.7 1121 689.7C1131.5 689.7 1136.5 687.2 1146.3 686.9C1156.2 686.7 1169.6 688 1179.9 688C1190.1 688.1 1198.2 687.7 1207.7 687.4C1217.3 687.1 1232.2 686.3 1237 686.1M1293.3 684.8C1298.8 685.3 1316.9 687.3 1326.1 688.1C1335.3 688.8 1338 689 1348.4 689.2C1358.7 689.4 1381.5 689.3 1388.1 689.3M792.7 726.9 L828.7 727M908.3 723.7C914.8 723.7 936.6 723.2 947.2 723.9C957.9 724.6 964.1 727.7 972.4 727.8C980.8 727.9 988.8 725.3 997.3 724.6C1005.9 723.9 1013.7 723.8 1023.7 723.7C1033.7 723.5 1046.5 723.7 1057.2 723.6C1067.8 723.6 1082.4 723.4 1087.4 723.4M1145 727.8C1148.9 728.2 1157.8 730.2 1168.1 730C1178.4 729.7 1195.9 727 1206.6 726.2C1217.4 725.4 1223.4 725.6 1232.7 725.2C1242 724.9 1251.6 723.8 1262.5 724.1C1273.4 724.4 1285.5 726.7 1298.1 727C1310.7 727.3 1327.2 726.3 1338 725.7C1348.8 725.1 1354.2 723.3 1362.9 723.6C1371.5 724 1380.7 727 1389.7 727.7C1398.6 728.3 1412.2 727.5 1416.8 727.5M776.2 743.2C782.6 742.6 801.7 740.3 814.7 739.6C827.8 738.8 847.8 738.6 854.4 738.4M921.7 737.5C925.7 737.3 937 735.2 945.6 736.2C954.2 737.3 963.6 742.4 973.3 743.6C983.1 744.8 994.7 744.2 1004.1 743.5C1013.4 742.8 1025.1 740.2 1029.3 739.6M1093 738.4C1097.7 738.5 1110.2 739.3 1121.2 739.1C1132.3 739 1152.8 737.8 1159.1 737.6M1273.5 742.5C1278.8 741.9 1293.8 739.9 1305.4 739.1C1317 738.2 1332.2 737.3 1343.1 737.5C1354 737.7 1361.4 739.4 1370.9 740.2C1380.3 741.1 1395 742.3 1399.8 742.7M781.6 749.4C787.5 749.4 806.3 749 817 749.2C827.7 749.4 835.5 750.4 846.1 750.5C856.6 750.6 869.3 750.2 880.3 749.8C891.3 749.4 902.3 747.5 912 748.1C921.8 748.7 928.5 752.2 938.8 753.2C949.1 754.3 963.6 754.7 973.8 754.5C984 754.3 990.2 752.2 999.8 752C1009.4 751.8 1019.9 753.3 1031.3 753.3C1042.7 753.2 1055.7 751.9 1067.9 751.7C1080.2 751.6 1092.5 751.4 1104.7 752.4C1117 753.3 1131.7 756.6 1141.6 757.4C1151.6 758.2 1154.5 757.7 1164.4 757.2C1174.3 756.8 1190.6 755.5 1201.1 754.5C1211.7 753.6 1217.2 751.9 1227.7 751.6C1238.2 751.3 1254.1 752.7 1264.1 752.9C1274.1 753.1 1278 752.8 1287.7 752.9C1297.4 753 1310.4 752.7 1322.2 753.4C1334 754.1 1346.8 756.5 1358.6 757.1C1370.3 757.6 1382.7 756.9 1392.8 756.8C1402.9 756.7 1414.7 756.6 1419.1 756.5M780.5 777C787 776.9 806.9 776.1 819.2 776.1C831.4 776 843.5 777.1 854 776.9C864.5 776.7 872.5 774.7 881.9 774.7C891.4 774.7 906 776.7 910.8 777.1M981.7 774.2C987.8 774.4 1006.2 775 1018.8 775.4C1031.3 775.9 1045.3 777.4 1056.8 776.9C1068.3 776.5 1082.8 773.4 1088 772.7M1157.6 776.5 L1193.4 774.7M1240.4 776.2C1244.2 775.4 1254.4 772.8 1263.4 771.6C1272.3 770.5 1284 769.2 1294.1 769.3C1304.1 769.4 1312.6 772 1323.6 772.2C1334.6 772.4 1354.2 770.8 1360.3 770.6M798.3 783.1C802.8 783.6 814.9 785.3 825.2 786.3C835.5 787.4 849.2 789.7 860 789.6C870.9 789.5 878.9 787 890.2 785.7C901.5 784.3 916.1 782.9 928 781.5C939.9 780.1 952.1 777.8 961.5 777.3C971 776.8 974.5 778.1 984.8 778.5C995.1 778.8 1011.8 778.9 1023.4 779.4C1035 779.8 1044.7 781.5 1054.4 781.4C1064.1 781.3 1073 778.4 1081.7 778.7C1090.3 779 1098.2 783.1 1106.3 783.2C1114.4 783.3 1119.6 780.1 1130.1 779.4C1140.6 778.7 1158.3 778.2 1169.2 778.8C1180.2 779.4 1187.3 783.1 1195.9 783.1C1204.5 783.2 1212.7 779.1 1220.7 779C1228.6 778.9 1235.3 781.8 1243.4 782.6C1251.6 783.4 1259.9 784 1269.6 783.7C1279.3 783.3 1291.7 780.4 1301.7 780.5C1311.7 780.6 1318.8 782.7 1329.5 784.2C1340.2 785.6 1356.1 788.5 1365.9 789.2C1375.8 789.9 1384.8 788.5 1388.5 788.3M852.5 805.4C858.2 805.1 875.7 804.1 886.3 804C897 803.8 907.2 803.5 916.4 804.5C925.7 805.6 937.5 809.5 941.7 810.5M996.8 804C1001.9 803.7 1018.1 801.9 1027.1 802.4C1036.2 802.9 1041.5 806 1050.9 807C1060.3 808 1072.2 808.4 1083.3 808.6C1094.4 808.9 1105.1 808.2 1117.2 808.4C1129.4 808.6 1143.4 810.4 1156.2 809.8C1169 809.2 1187.6 805.5 1193.9 804.6M1278.9 807.3C1284.1 807.6 1300 808.7 1310.1 809C1320.1 809.4 1330.1 809.6 1339.3 809.2C1348.6 808.7 1354.9 807.1 1365.7 806.3C1376.4 805.5 1397.3 804.8 1403.7 804.5M899.5 822.6C904.2 822.2 918.7 820.9 927.7 820.5C936.7 820.1 942.7 819.6 953.6 820.3C964.6 821 981.8 824.5 993.6 824.8C1005.4 825 1013.5 821.8 1024.5 821.8C1035.6 821.8 1048.6 824.7 1060.1 824.7C1071.5 824.8 1083.8 822 1093.3 822.1C1102.8 822.3 1108.9 825.6 1117 825.8C1125.1 826 1131.9 824.1 1141.9 823.3C1152 822.5 1164.9 820.6 1177.3 821.2C1189.7 821.7 1203.6 826.4 1216.2 826.7C1228.8 827 1242 822.8 1253.2 822.9C1264.3 823.1 1271.8 827 1283 827.7C1294.3 828.4 1314.4 827.3 1320.7 827.2M1391.7 828.3 L1428.8 827.1M907.5 831.7C913.3 831.8 930.3 832.6 942.1 832.2C954 831.9 968.8 829.3 978.7 829.5C988.5 829.8 993.1 832.2 1001.4 833.9C1009.7 835.5 1019.5 837.8 1028.3 839.5C1037.1 841.3 1043.6 843.7 1054.3 844.5C1065 845.4 1079.5 845.6 1092.4 844.6C1105.3 843.5 1120.9 838.5 1131.6 838.2C1142.4 837.9 1147.6 842.5 1157 842.6C1166.5 842.7 1176.8 839.2 1188.5 838.7C1200.3 838.2 1221 839.2 1227.5 839.3M1286 843.7C1290.8 843.1 1304.3 841 1314.8 839.9C1325.2 838.7 1338.1 836.3 1348.8 836.7C1359.4 837.1 1368.1 842.2 1378.8 842.4C1389.4 842.6 1407 838.5 1412.7 837.7M939.5 850.2C944 849.5 955.8 846.1 966.5 845.6C977.1 845.1 993.1 847.2 1003.4 847.3C1013.6 847.4 1019.6 846.2 1027.9 846.2C1036.1 846.2 1044 848.1 1052.8 847.3C1061.5 846.5 1071 842 1080.4 841.6C1089.8 841.2 1100.3 844.9 1109.3 845C1118.3 845 1126.2 842.8 1134.7 841.8C1143.2 840.8 1152 838.6 1160.2 838.8C1168.5 838.9 1175.4 841.4 1184.2 842.6C1193 843.9 1204 845 1213.1 846C1222.2 847.1 1228.3 848.4 1238.8 848.9C1249.2 849.3 1265.1 849.7 1275.8 849C1286.6 848.2 1293.8 845.1 1303.5 844.2C1313.2 843.3 1323 844.3 1334 843.6C1345 842.9 1357.2 840.8 1369.5 840.1C1381.9 839.3 1401.6 839.3 1408 839.1M948.7 852.4C952.6 853.2 961.8 856.8 971.9 857.5C982 858.2 998.2 856.9 1009.3 856.4C1020.4 855.9 1027.5 854.7 1038.5 854.3C1049.6 854 1065.4 854.6 1075.7 854.4C1086.1 854.2 1091.2 853.3 1100.5 853.3C1109.8 853.3 1120.4 854.2 1131.5 854.5C1142.5 854.8 1154.7 854.4 1166.8 854.9C1179 855.4 1192.6 857.2 1204.7 857.4C1216.7 857.5 1229.7 856.3 1239.3 855.7C1249 855.1 1254.2 853.7 1262.5 853.9C1270.9 854.2 1281 856.9 1289.5 857.3C1297.9 857.7 1303.1 855.9 1313.1 856.2C1323.2 856.6 1339.6 858.6 1349.6 859.2C1359.5 859.8 1365.3 859.9 1372.9 859.8C1380.4 859.6 1386.8 858.4 1394.9 858.3C1403.1 858.1 1417.4 858.6 1421.9 858.7M615.1 389.2 L622 424.7M627.2 396.2C627.5 402.8 627.8 424.4 629.1 435.8C630.4 447.3 633.8 459.9 634.7 464.7M637.1 604.7 L639.5 642.6M644.7 386C645.3 390.4 647.9 402.9 648.3 412.3C648.6 421.8 647 437.7 646.8 442.8M673 537.4C672.4 541.1 669.9 551 669.4 559.8C669 568.6 670.2 585 670.3 590.1M675.2 386.1C675.8 392.6 677.5 411.8 678.9 424.6C680.2 437.5 682.3 452.9 683.6 463.1C684.9 473.2 686.2 481.9 686.7 485.6M696.2 430.7C696.3 435.5 696.7 450.4 697 459.4C697.2 468.3 697.5 480.1 697.7 484.3M705.9 430.4 L708.1 464.7M723.8 489.2 L716.8 516.3M778.1 464.8 L783.8 500.3M778.4 740.9 L781.4 780.2M783.8 440.9C782.3 447.2 775.7 468.3 775 478.8C774.3 489.3 778.9 494.8 779.6 503.8C780.3 512.9 779.2 522.1 779.1 533.2C779.1 544.3 779.3 564.4 779.3 570.7M801.8 379.5C803 383.7 806.8 396.2 808.5 404.8C810.2 413.4 811.3 421 812 431C812.6 441.1 811.6 454 812.5 465.2C813.3 476.5 816.2 486.9 817 498.5C817.7 510.1 817.5 523.1 816.8 534.9C816.1 546.6 813.6 559.2 812.8 569.1C812 579 812.1 590.1 812 594.3M812.6 727.3C812.3 732.1 810.5 747 810.4 755.8C810.4 764.6 812.1 776 812.4 780.1M821.9 444.4C822.8 451 825.6 471.6 827.1 483.8C828.5 495.9 830.3 505.2 830.9 517.3C831.4 529.5 830.4 545.6 830.3 556.7C830.2 567.8 830.3 579.6 830.3 584.1M832.4 711.9C832 715.8 830.7 725.5 829.9 735.2C829.1 744.8 827.1 759.5 827.4 769.7C827.7 779.9 831.2 792 832 796.5M828.2 436C827.6 441.7 824.5 458.9 824.8 470.5C825.2 482.1 829 495.6 830.5 505.6C832 515.7 834 523 833.8 531C833.6 539.1 829.9 545.3 829.3 554C828.8 562.6 830.3 578.1 830.5 582.9M835.4 704.8C835.5 708.8 836.6 720.5 836.1 728.5C835.5 736.6 832.6 744.9 832 753C831.4 761.1 832.6 768.5 832.4 777C832.1 785.4 830.9 799.2 830.6 803.6M858.8 390.3C859.9 394.9 863.9 409.2 865.3 417.9C866.7 426.6 865.9 432.4 867.4 442.7C868.9 453 874.2 467.4 874.4 479.6C874.5 491.8 869 504 868.1 515.9C867.1 527.8 868.3 541.1 868.4 550.9C868.6 560.7 868.7 570.6 868.8 574.5M872.9 787.1 L866.9 821.2M876.1 396.6C876.9 400.5 879.9 412 880.8 420.4C881.7 428.9 881.1 436.6 881.4 447.5C881.8 458.4 882.7 479.4 882.9 485.8M887.3 723.8C887 728 885.7 740.1 885.6 749C885.6 757.8 886.6 765.8 887.1 777C887.5 788.3 888.2 810 888.4 816.5M897 487.1C896.6 491.5 894.5 505.1 894.2 513.7C893.9 522.2 895.1 530.1 895.2 538.4C895.4 546.7 895.7 555.1 895.1 563.5C894.6 571.9 892.3 584.6 891.8 588.8M887.3 720.6C887.9 726.7 890.9 746.5 890.9 757.4C890.8 768.3 886.9 777.3 886.9 786.1C886.8 794.9 889.9 806.1 890.5 810.1M920.8 397.8 L921.1 434.4M928.3 495C929.3 499.7 933.6 512.2 934.5 523.2C935.4 534.2 934.5 548.8 933.6 561C932.8 573.2 930.2 590.5 929.5 596.4M927.6 832.8 L933.3 862M943.4 387.4C944.8 392 949.5 406.4 951.9 415C954.3 423.6 957.4 429.7 957.6 438.9C957.7 448.1 952.5 458.7 952.8 470.3C953.1 481.8 959.2 497 959.2 508.1C959.3 519.2 953.9 526.1 953 536.6C952.1 547.1 954.3 561.6 954.1 571.2C953.8 580.7 952 590 951.6 593.8M953.6 717.5C953.9 723.6 955.9 741.3 955.5 754C955.2 766.7 952.1 781.4 951.5 793.8C950.9 806.3 951.4 818.2 952 828.6C952.6 839 954.6 851.5 955.1 856M961.2 391.4C960.6 398 958.2 420.5 957.5 431.4C956.9 442.3 957.5 446.5 957.4 456.7C957.2 466.8 956.9 486.4 956.8 492.3M951.3 701 L953 727.7M951.9 781C952.1 787 954.1 805.4 953.1 816.5C952 827.6 946.8 842.6 945.6 847.8M980.1 392.4C980.2 398.2 980.9 415 980.8 427.2C980.7 439.4 979.6 459.4 979.3 465.9M987.3 562.4C988.3 567.1 992.1 581.6 993 590.5C993.8 599.4 992.5 606.3 992.6 616.1C992.7 625.9 993.6 639.4 993.6 649.2C993.6 659 992.1 666.2 992.4 675.1C992.7 684.1 996 693.1 995.5 702.8C994.9 712.5 990.2 723.2 989 733.5C987.8 743.7 988.4 759.1 988.2 764.2M990.9 814.8 L992.9 854.2M1000.2 385.8C998.7 391.2 993.5 406.9 991.1 418.1C988.6 429.4 985.6 441 985.5 453.3C985.3 465.5 990.1 480.8 990.3 491.8C990.4 502.8 987.2 514.6 986.6 519.2M986.3 583C987.2 588.4 991.7 603.7 992 615.6C992.4 627.6 988.7 643.9 988.4 654.6C988.1 665.3 989.9 669.6 990.3 679.9C990.7 690.2 991.4 705.2 990.8 716.3C990.2 727.5 986.6 735.5 986.6 747C986.5 758.4 990.3 772.3 990.5 785.1C990.7 797.9 987.6 812.7 987.8 823.8C987.9 834.9 990.7 847.1 991.3 851.8M1016.5 385.8C1015.9 391 1014.1 406 1012.6 417.5C1011.1 428.9 1008.4 448.1 1007.6 454.2M1007.1 513.1C1006.4 517 1003.3 526.5 1003.1 536.2C1002.8 545.8 1005.1 565.3 1005.5 571.1M1005.8 641.7C1006.1 647.6 1007.1 667.3 1007.8 677.2C1008.4 687 1009.5 696.9 1009.8 700.8M1002.4 816.3 L1005.4 850.4M1033.1 383.1C1032.9 389.7 1033.2 412.1 1031.9 423C1030.6 433.8 1027.6 438.1 1025.2 448.2C1022.8 458.3 1018.2 471.9 1017.6 483.5C1017 495.1 1021.2 506 1021.4 517.7C1021.6 529.5 1018.4 541.6 1018.9 554C1019.5 566.3 1023.7 580.7 1024.9 591.8C1026.1 603 1025.9 616.1 1026.1 621M1019.2 684.6C1019.1 688.3 1018.5 697.8 1019 706.7C1019.4 715.6 1021.7 727.8 1021.9 737.9C1022.2 748.1 1020 756.6 1020.4 767.4C1020.9 778.1 1023.8 790.1 1024.7 802.5C1025.6 814.9 1026.3 830.5 1025.8 841.7C1025.2 852.8 1022.1 864.8 1021.3 869.4M1054.3 394.4C1055.8 399 1061 412 1062.8 422.2C1064.6 432.3 1064.3 444.5 1065.3 455.1C1066.3 465.8 1068.7 476.9 1068.9 485.9C1069.2 495 1067.4 501.4 1066.7 509.4C1066 517.5 1065.4 523.6 1064.8 534.1C1064.2 544.6 1063 559.6 1062.9 572.5C1062.9 585.3 1064.4 604.8 1064.7 611.3M1064 672.8C1063.9 677.2 1062.4 691 1063.3 699.4C1064.1 707.8 1068.7 714.9 1069.1 723.2C1069.5 731.4 1066.1 739.9 1065.4 749C1064.7 758.1 1064.2 766.3 1064.9 777.7C1065.7 789.1 1069.8 804.9 1070.1 817.7C1070.3 830.4 1067.1 848.1 1066.5 854.2M1070.6 451.9 L1067.4 476.2M1067.4 533.3C1067.5 539.6 1068.2 560 1067.9 571.4C1067.5 582.8 1065.9 592.1 1065.5 601.8C1065 611.6 1065.3 625.3 1065.2 630M1068.4 679.8C1068.3 684 1068 694.6 1068.1 704.8C1068.3 714.9 1069.2 730.5 1069.3 740.9C1069.4 751.3 1069.2 756 1068.8 766.9C1068.4 777.8 1067.4 794.5 1066.9 806.4C1066.4 818.2 1066.1 828.7 1065.9 838C1065.6 847.2 1065.5 857.8 1065.4 861.7M1092.2 387.3C1092.3 393.7 1092.1 414.1 1092.7 425.9C1093.3 437.7 1094.5 448.5 1095.6 457.9C1096.7 467.3 1098.2 473.8 1099.2 482.3C1100.2 490.9 1100.5 498.7 1101.7 509.1C1103 519.6 1106.7 532.6 1106.5 544.9C1106.3 557.1 1101.6 569.9 1100.6 582.8C1099.7 595.7 1100.4 609.3 1100.9 622.5C1101.4 635.7 1103.3 650.7 1103.6 661.9C1104 673.1 1102.7 680.9 1102.8 689.5C1102.9 698.2 1104.6 704.4 1104.5 713.8C1104.5 723.2 1103 735.8 1102.5 745.9C1102 756 1101.9 764.4 1101.6 774.4C1101.2 784.5 1100 796.2 1100.6 806.2C1101.3 816.2 1104.5 823.4 1105.6 834.7C1106.6 846 1106.7 867.6 1106.9 874.1M1112.5 419.2 L1117.5 457.9M1117.4 522.4C1116.6 527.7 1113.2 542.9 1112.5 554.6C1111.9 566.4 1113.8 582.8 1113.5 592.9C1113.2 602.9 1111.8 605.2 1110.6 615.1C1109.5 625 1106.8 641.4 1106.8 652.1C1106.8 662.7 1109.2 669.8 1110.6 678.9C1112.1 688 1115.3 696.3 1115.4 706.7C1115.5 717.1 1112.5 728.9 1111.2 741.3C1109.8 753.6 1108.6 769.8 1107.4 780.9C1106.2 792 1103.7 797.7 1103.9 807.8C1104.1 817.9 1107.8 836 1108.6 841.7M1130.4 381.2 L1137.1 409.7M1142.1 466.8 L1145.6 497.9M1141.5 550.4C1141.5 556.3 1141.8 575.6 1141.6 586C1141.4 596.3 1140.3 603.1 1140.2 612.3C1140.2 621.5 1140.4 632.1 1141.3 641.3C1142.2 650.5 1146 657.9 1145.7 667.3C1145.4 676.7 1140.5 692.4 1139.4 697.4M1141.9 787.5C1141.5 792.7 1139.9 809.4 1139.7 818.7C1139.4 828 1140.3 839.4 1140.4 843.5M1143.4 418.6C1141.7 424.1 1134.8 441.6 1133.5 451.8C1132.2 462 1134.8 469.4 1135.7 479.9C1136.6 490.4 1139.4 503.3 1138.9 514.8C1138.4 526.3 1133.8 543.1 1132.8 548.8M1132.9 598.5C1133.8 602.4 1137.3 613.5 1138.3 622.1C1139.3 630.7 1139.9 641.1 1139 650.1C1138 659.1 1133.6 671.8 1132.5 676.1M1134.9 737.6C1135.5 741.6 1138.5 753.2 1138.4 761.4C1138.4 769.6 1134.9 776.6 1134.7 786.9C1134.5 797.2 1136.8 817.4 1137.3 823.5M1167.4 391.9 L1170.5 414.8M1172.8 471.3C1172.8 477 1171.6 495.6 1172.4 505.8C1173.3 516.1 1177.7 524.6 1178.2 532.8C1178.6 541 1175.2 544.9 1175 554.9C1174.9 564.8 1176.9 586.2 1177.3 592.4M1182.6 681.7C1182.4 688.4 1182.6 709 1181.7 721.7C1180.7 734.3 1177.3 745.2 1176.8 757.8C1176.4 770.4 1179.2 785.3 1179.2 797.3C1179.3 809.2 1177.6 819 1177.1 829.4C1176.7 839.9 1176.6 855 1176.4 860.1M1182 383.5C1182.3 388.5 1183.7 402.9 1183.7 413.1C1183.6 423.3 1181.3 433.6 1181.4 444.7C1181.6 455.7 1183.1 469.1 1184.3 479.3C1185.5 489.5 1188.2 496.6 1188.6 505.8C1189 515 1186.3 524 1186.5 534.6C1186.7 545.1 1189.7 557.7 1189.7 569.3C1189.8 581 1187.7 593.9 1186.9 604.5C1186.1 615.1 1184.9 622.2 1185 632.9C1185.1 643.6 1186.5 658.2 1187.4 668.5C1188.2 678.8 1189.5 684.6 1190.2 694.7C1191 704.8 1192.1 718.7 1191.6 728.9C1191.1 739.1 1187.2 747.5 1187.3 755.8C1187.3 764 1190.4 768.9 1191.9 778.4C1193.5 787.8 1195.9 806.8 1196.6 812.4M1199.7 392.2C1200.4 398.5 1201.5 419 1203.8 429.9C1206.1 440.7 1212.6 448.8 1213.3 457.5C1214 466.3 1208.2 472 1207.8 482.4C1207.4 492.7 1209.6 507.1 1210.8 519.7C1212 532.3 1214.2 551.4 1214.8 557.7M1208.2 722.3C1209.2 728 1213.8 747.1 1214.2 756.6C1214.5 766 1210.5 770.6 1210.2 778.9C1209.8 787.2 1211.3 795.3 1211.9 806.2C1212.5 817.2 1213.6 838.2 1214 844.6M1219.1 484.2C1219.3 488.6 1219.5 502.4 1220.1 510.5C1220.8 518.7 1222.2 525 1223.2 533.2C1224.2 541.5 1226.3 549 1226.1 560.1C1225.9 571.2 1222.3 588.9 1221.8 599.8C1221.3 610.8 1222.8 615.4 1223.1 625.9C1223.5 636.5 1224.3 650.8 1223.7 663.1C1223.2 675.4 1220.6 687.5 1219.9 699.5C1219.2 711.5 1219.6 725.2 1219.4 735C1219.3 744.9 1219.2 754.7 1219.2 758.7M1214.7 809.4 L1216.8 836.6M1235.6 395.2 L1230.4 423.7M1226.2 528.8C1226.2 533.5 1226 547.2 1226.2 556.7C1226.3 566.3 1228.2 576.4 1227.2 586.2C1226.3 596 1220.6 604.9 1220.4 615.5C1220.2 626 1225.1 639.4 1226 649.4C1226.8 659.5 1226.3 665.1 1225.4 675.6C1224.5 686.2 1220.7 702.7 1220.6 712.6C1220.6 722.5 1224.5 725.7 1225 735.1C1225.4 744.6 1223 758.6 1223.2 769.4C1223.4 780.2 1225.9 789.2 1226.1 799.9C1226.4 810.6 1224.5 822.3 1224.6 833.5C1224.7 844.7 1226.2 861.5 1226.5 867.1M1251.2 389C1249.9 394.5 1245.2 410.9 1243.2 422.1C1241.2 433.3 1240.5 444.6 1239.2 456.3C1238 468 1235 481.4 1235.6 492.4C1236.2 503.4 1242.6 511.4 1242.8 522.3C1243.1 533.3 1238.2 545.4 1237.1 557.9C1235.9 570.4 1236.1 590.8 1235.9 597.3M1242.2 660.1 L1241.3 686.9M1241.7 761.8C1241 767.5 1238.4 786.2 1237.6 796.2C1236.9 806.2 1237.3 817.6 1237.2 821.9M1266.4 396.4C1267.1 403 1268.5 425.1 1270.7 436.2C1272.9 447.4 1278.3 458.8 1279.8 463.3M1276.9 537.1C1277.1 543.4 1278.3 563.3 1278.2 574.6C1278.1 585.9 1276.5 595.7 1276.2 605C1275.8 614.3 1276.2 620.4 1276 630.5C1275.9 640.7 1274.8 654.3 1275.3 665.9C1275.8 677.6 1278.8 690.4 1279.1 700.4C1279.5 710.5 1277.8 722 1277.5 726.3M1278 793.1C1278.4 797.8 1280.3 810.9 1280 821.5C1279.7 832.1 1277 850.8 1276.4 856.7M1289.3 387.4C1289.6 391.7 1291.8 402.6 1291.6 413C1291.3 423.4 1288.3 437.9 1287.6 449.6C1286.9 461.3 1288 472.1 1287.5 483.1C1287 494 1284.7 506.4 1284.7 515.5C1284.8 524.6 1287.2 527.7 1287.8 537.5C1288.4 547.3 1288.9 562.8 1288.4 574.5C1287.9 586.2 1284.7 597.6 1284.8 607.7C1284.8 617.8 1287.3 624.7 1288.5 635C1289.6 645.2 1290.4 657.8 1291.7 669.2C1293 680.6 1295.7 693.7 1296.3 703.3C1296.9 713 1296.1 719 1295.5 727.1C1294.9 735.2 1293.8 742.9 1292.8 751.8C1291.8 760.8 1290.4 770.6 1289.4 780.8C1288.3 791 1286.9 802.5 1286.4 813.2C1285.8 823.9 1285.9 839.6 1285.8 844.9M1312.2 382C1311.4 387.4 1309.2 402.9 1307.1 414.2C1305 425.6 1300.2 439.9 1299.6 450.3C1299 460.7 1302.8 472.1 1303.5 476.4M1300.3 634.2C1300.8 638.1 1303.9 649.2 1303.4 657.7C1303 666.2 1298.5 680.6 1297.5 685.1M1302.5 747.3 L1298.9 771.3M1330.2 386.8C1330 393 1328.9 412.7 1329.2 423.8C1329.6 434.8 1331.9 442.5 1332.4 453.1C1332.9 463.6 1332.8 475.9 1332.2 487C1331.6 498 1330.3 507.7 1328.9 519.3C1327.5 531 1324.8 550.6 1324 556.9M1328.5 628C1327.8 633.1 1324.6 647.6 1324.1 658.5C1323.6 669.4 1325.2 681.9 1325.6 693.3C1326 704.7 1326.5 717.6 1326.4 726.9C1326.4 736.2 1325.3 745.5 1325.1 749.3M1319.8 816.1 L1319.5 843.6M1340.2 447.8C1339.4 452.6 1335.7 465.3 1335.7 476.7C1335.7 488.1 1340.4 503.4 1340.4 516.1C1340.4 528.9 1336.3 547 1335.5 553.1M1339.1 610.2C1338.9 615.2 1337.4 631 1337.9 640.2C1338.5 649.3 1341.7 654.3 1342.5 664.9C1343.3 675.5 1342.6 697.3 1342.6 703.8M1339.7 837.1 L1340.9 872M1356.4 404.7C1356.4 408.7 1357.3 420.6 1356.3 429.1C1355.3 437.6 1351.4 451.2 1350.4 455.7M1352.3 589.5C1351.7 594 1348.8 607 1348.9 616.5C1349.1 626 1353.4 636.8 1353.1 646.4C1352.9 655.9 1348.5 665.3 1347.5 673.8C1346.6 682.3 1346.6 689 1347.2 697.3C1347.9 705.6 1350.9 713.9 1351.4 723.4C1351.9 733 1350.4 744.4 1350.3 754.5C1350.2 764.6 1350.7 772.4 1350.9 783.9C1351.1 795.4 1350.9 810.5 1351.5 823.6C1352 836.7 1353.8 856.1 1354.3 862.6M1386.6 391C1387.8 394.9 1391.9 406 1393.9 414.4C1396 422.7 1398 436.6 1398.8 441M1397.9 564.4C1398.4 569.3 1400.7 583.2 1400.4 594C1400.1 604.9 1396.2 618.1 1396.1 629.4C1396 640.6 1399.7 649.7 1400 661.6C1400.2 673.5 1397.3 687.6 1397.5 700.7C1397.6 713.9 1400.9 729.5 1400.8 740.6C1400.7 751.6 1397.7 756 1396.8 766.9C1395.8 777.8 1394.4 794.9 1395.2 805.8C1396 816.8 1401.8 823.5 1401.8 832.6C1401.8 841.7 1396.5 855.6 1395.4 860.2M1398.7 432C1397.8 438.2 1393.3 458.5 1392.9 469.3C1392.5 480.1 1396.6 488.4 1396.4 496.7C1396.2 505 1392.5 511.5 1391.7 518.9C1390.8 526.3 1391.2 533.8 1391.1 541.2C1391.1 548.5 1391.5 559.5 1391.6 563.2M1391.3 624.5C1392 628.9 1394.9 641.7 1395.7 650.9C1396.6 660.1 1396.4 674.8 1396.5 679.6M1394.8 738.7C1394.6 744 1393.5 760 1393.8 770.6C1394.2 781.2 1396.7 792.8 1396.9 802.3C1397.1 811.8 1395.7 817.5 1394.8 827.7C1394 838 1392.5 857.8 1392 863.8M1425.1 384.5C1425.7 388.5 1426.9 397.9 1428.6 408.4C1430.2 418.8 1434.2 434.2 1435.2 447.1C1436.1 460.1 1434.4 474.5 1434.1 486C1433.8 497.5 1432.5 507.3 1433.5 516.3C1434.4 525.4 1438.7 536.3 1439.8 540.3M1434.2 657.3C1434.1 662.3 1433.7 678.1 1433.7 687.3C1433.7 696.5 1434.2 708.2 1434.3 712.4M1434.2 766.4C1434.1 771.4 1433.6 785.6 1433.9 795.9C1434.3 806.2 1436 823 1436.5 828.4M1447.1 441.2 L1449.3 475.7M1455.7 389.5C1455.6 395.5 1455 414 1455.4 425.2C1455.8 436.5 1457.9 445.3 1458.2 457C1458.6 468.7 1457.9 485.3 1457.4 495.5C1457 505.6 1455.9 514.2 1455.6 518M1443.8 750.6 L1439.7 787M1028.5 627.7C1032.1 624.3 1042.7 614.9 1049.9 607.1C1057.2 599.4 1068.4 585.4 1072.1 581.1M1400.3 518.7C1404.2 514.4 1415.8 502.9 1423.6 493.2C1431.3 483.6 1443 466.2 1446.9 460.8M984.8 783.6C991.2 776.3 1010.9 753.9 1022.9 739.8C1034.9 725.7 1051.3 705.6 1057 698.8M937 562.3C940.9 559.9 953.9 553.8 960.8 548.2C967.7 542.5 975.6 531.7 978.6 528.4M1139 740.4C1145.2 733.1 1163.3 712.3 1176.6 696.5C1189.8 680.7 1211.7 654.1 1218.7 645.6M1378.9 530.5C1375.1 533.8 1364 543.4 1355.9 550C1347.7 556.7 1334.4 567 1330 570.4M1319 670.3C1327.3 677.3 1353.1 697.3 1368.6 711.9C1384 726.4 1404.6 749.9 1411.9 757.5M1262.6 703.1C1267.6 705.9 1281.5 713.7 1293 719.7C1304.5 725.6 1324.9 735.8 1331.3 739M916.2 543.5C920.4 549.4 932.6 567.1 941.4 579C950.2 591 964.5 609.2 969.1 615.3M1088.3 788.3C1090.9 781 1098 758.3 1103.6 744.8C1109.3 731.3 1119.1 713.7 1122.3 707.5M1127.1 593.3C1131.6 600.9 1144.9 623.3 1153.9 638.8C1162.9 654.3 1176.5 678.4 1181 686.3M1379.2 830.9C1382 824 1390.2 803.2 1396 789.4C1401.8 775.5 1410.9 754.8 1413.9 747.9M1105.4 491.2C1100.7 494.6 1086.5 506 1077.3 511.4C1068.1 516.9 1054.8 521.8 1050.3 523.8M1150.2 563.5C1154.1 560.4 1166.2 551.6 1173.7 544.6C1181.1 537.7 1191.4 525.7 1195 521.9M1380.1 696.8C1383.6 693.8 1393.9 685.7 1401.5 678.8C1409.1 671.9 1421.7 659.4 1425.7 655.5M1232.9 798.8C1238.8 790.8 1255.9 766.9 1268.2 750.8C1280.6 734.6 1300.6 710.2 1307.1 702.1M1158.4 800.6C1161.9 804.2 1173.5 815.6 1179.1 822.2C1184.6 828.9 1189.7 837.2 1191.8 840.2M1262.9 707.5C1273 712.2 1302.4 726 1323.3 735.7C1344.1 745.4 1377.3 760.8 1388.1 765.8M1115.6 656.7C1107.5 660.2 1082.7 669.5 1066.7 677.5C1050.8 685.5 1027.7 700 1019.9 704.6M1404.4 642C1411.2 647.6 1430.8 666 1445 675.6C1459.2 685.2 1469.8 690.7 1489.6 699.6C1509.4 708.5 1551.3 724.3 1563.7 729.3M1447 675.6C1447 685.5 1455 727.4 1447 734.8C1439 742.2 1407 722.5 1399 720M1426.7 734.8C1424.5 743.4 1421.7 773.1 1413.7 786.7C1405.7 800.3 1384.4 811.4 1378.5 816.3M790 693.4 L930 693.4M799 715.4 L865 715.4M742 700 L738 640" fill="none" stroke="#d6d68c" stroke-width="3.6" stroke-linecap="round"/>
<path d="M684.1 391.5 L708.7 394.6M787.1 393.1C793.4 393.1 814.8 392.4 825.2 392.9C835.6 393.5 840.5 396.2 849.3 396.3C858 396.5 873 394.5 877.7 394.1M950.1 397.4C956.1 397.5 975 399 986.4 398.2C997.9 397.3 1008.4 393.4 1018.8 392.4C1029.2 391.5 1040 391.3 1048.8 392.3C1057.6 393.3 1062.2 398 1071.6 398.6C1081 399.2 1099.6 396.2 1105.2 395.8M1161.7 396.6C1166.7 395.9 1182.5 393 1191.5 392.4C1200.5 391.8 1208.1 393 1215.9 392.8C1223.7 392.5 1230.5 390.9 1238.3 390.9C1246 390.9 1252.8 391.6 1262.2 392.6C1271.6 393.5 1283.7 396.6 1294.7 396.6C1305.6 396.5 1315.9 392.8 1327.9 392.2C1339.9 391.6 1356.3 391.9 1366.8 392.7C1377.2 393.6 1380.5 397.3 1390.5 397.2C1400.5 397.1 1416.9 392.3 1426.6 392.2C1436.3 392.1 1440.4 396.6 1448.8 396.7C1457.2 396.9 1465.9 392.8 1477.1 393.1C1488.3 393.4 1503.1 397.9 1516 398.6C1528.8 399.2 1547.8 397.4 1554.2 397.1M792.5 394.3 L827.9 391.2M879.8 394.2C886 394.1 905.5 394.3 917 393.7C928.5 393.1 938.4 390.4 949 390.5C959.5 390.5 968.6 394.3 980.4 394C992.2 393.7 1009.5 388.8 1019.8 388.6C1030 388.5 1032.4 392 1042 393.1C1051.7 394.1 1066.9 394.4 1077.4 395C1088 395.5 1096.3 395.7 1105.3 396.2C1114.4 396.6 1121.5 397.6 1131.6 397.7C1141.8 397.8 1155.3 396.8 1166.1 396.8C1176.9 396.7 1185.2 398 1196.5 397.6C1207.9 397.2 1222.4 395.7 1234 394.4C1245.6 393.1 1255.3 390.1 1266.2 389.9C1277.2 389.6 1293.9 392.3 1299.5 392.8M1362.8 389.9C1366.5 390.3 1376 392.3 1385.3 392.6C1394.6 393 1409.3 392.4 1418.7 392C1428.1 391.6 1431.9 390.5 1441.9 390.3C1451.9 390.2 1468.6 390.7 1478.6 391C1488.6 391.3 1491.4 391.6 1501.8 392.1C1512.2 392.6 1530.3 393.6 1540.8 394C1551.3 394.5 1554.7 394.8 1564.8 394.7C1574.9 394.6 1595.3 393.6 1601.4 393.4M651.3 416.2C656.1 416.2 670 415.4 679.9 416.3C689.9 417.2 705.8 420.7 711 421.6M769.5 422.9C774.7 422.8 791.9 421.3 801.1 422C810.4 422.6 817.2 426.4 824.8 427C832.4 427.7 836.5 426.6 846.8 425.9C857.1 425.2 874.7 422.5 886.4 422.8C898.1 423.1 907 426.7 917.3 427.6C927.5 428.5 938.6 428.4 948.2 427.9C957.8 427.5 966.1 424.7 974.8 424.8C983.6 425 996.4 428 1000.7 428.7M1060.9 427.5 L1094.2 427.9M1161.3 421.7C1165.7 422.6 1178.7 427.1 1188 427.5C1197.3 428 1207 424.5 1216.8 424.3C1226.7 424.2 1236.2 426.8 1247.1 426.5C1258.1 426.2 1272.1 423.5 1282.7 422.6C1293.3 421.7 1300.3 420.6 1310.6 421C1320.9 421.5 1333.8 425 1344.5 425.3C1355.1 425.6 1365.4 422.9 1374.4 422.7C1383.4 422.5 1390.2 424.1 1398.7 424.1C1407.1 424.2 1414.8 422.2 1424.9 422.9C1435.1 423.6 1449.7 427.4 1459.6 428.2C1469.5 429 1475 427.9 1484.4 427.5C1493.8 427.2 1506.3 426.6 1515.8 426C1525.3 425.4 1537 424.3 1541.2 424M744.6 421.7C751 421.1 770.7 418.1 783 418.1C795.3 418.2 806.7 421.1 818.4 421.9C830.2 422.7 841.8 422.6 853.4 422.9C865 423.2 876.7 424 888 423.6C899.4 423.2 910.5 420.7 921.6 420.3C932.7 419.9 943.3 421.3 954.9 421.4C966.5 421.5 980.6 421.4 991 420.7C1001.4 420 1007.5 417 1017.5 417.1C1027.4 417.2 1038.7 421.6 1050.7 421.3C1062.7 421.1 1077 415.5 1089.4 415.3C1101.9 415.2 1112.8 419.4 1125.4 420.4C1138 421.3 1154.2 421 1165 421.1C1175.7 421.3 1180.5 421 1189.9 421.1C1199.2 421.2 1210.7 421.8 1221.2 421.8C1231.7 421.8 1242.1 421.2 1252.9 421.2C1263.8 421.1 1276 421.3 1286.5 421.6C1296.9 422 1305.2 423.6 1315.8 423.3C1326.5 422.9 1340.4 419.7 1350.2 419.4C1359.9 419 1366.5 421.9 1374.4 421.4C1382.2 420.9 1389.8 416.4 1397.4 416.3C1404.9 416.2 1410.2 420.9 1419.6 421C1429.1 421.1 1444.1 417.5 1454.2 416.7C1464.3 415.9 1470.6 415.7 1480.2 416.3C1489.8 416.8 1501.6 419.1 1511.7 420C1521.8 420.9 1529.9 421.5 1540.8 421.8C1551.6 422.2 1570.8 422 1576.8 422.1M780.2 457.1C785.1 456.4 800.2 453.6 809.9 452.8C819.6 452 829.8 451.3 838.4 452.1C847 452.9 851.6 457 861.4 457.7C871.3 458.4 891.5 456.6 897.6 456.4M970.1 457.7C974.1 457.5 983.9 456.5 993.9 456.4C1003.9 456.3 1017.5 457.6 1029.9 457.2C1042.3 456.7 1055.4 453.6 1068.2 453.6C1080.9 453.6 1094.2 456.9 1106.2 457C1118.2 457.1 1128.4 454.6 1140.2 454C1152.1 453.4 1165.9 452.6 1177.3 453.3C1188.8 454 1197.3 458.1 1208.9 458C1220.5 457.9 1236.1 453.9 1246.8 452.8C1257.5 451.8 1264.8 451.4 1273 451.5C1281.2 451.6 1287.1 452.8 1296 453.5C1305 454.2 1315.5 455.8 1326.9 455.8C1338.3 455.7 1353.1 453.1 1364.4 453.1C1375.7 453.2 1383.6 455.4 1394.8 456.1C1406.1 456.7 1419.2 457.3 1432 457.1C1444.7 457 1459.1 455.9 1471.3 455.2C1483.4 454.4 1493.4 453.2 1504.7 452.7C1516 452.2 1526.7 451.8 1539 452.1C1551.3 452.4 1572.1 454.1 1578.7 454.5M804.7 457C809.4 456.5 822.6 454.5 832.7 454C842.8 453.6 856 454 865.2 454.2C874.4 454.4 878.9 454.9 887.9 455.3C897 455.7 910.8 457.3 919.8 456.8C928.8 456.4 932.7 453.2 941.9 452.6C951.1 451.9 962.9 452.9 974.8 453C986.7 453.1 1001.3 452.8 1013.2 453C1025.2 453.1 1035.2 453.1 1046.5 453.8C1057.7 454.4 1075 456.4 1080.7 456.9M1136.3 452.6C1142.7 452.6 1162.2 452.6 1174.7 453C1187.2 453.3 1200.9 454.9 1211.5 454.7C1222.1 454.4 1229.1 451.2 1238.2 451.5C1247.2 451.9 1254.8 456.9 1265.9 456.9C1277 456.8 1294.4 451.5 1304.7 451.3C1315 451 1318.2 454 1327.4 455.2C1336.6 456.3 1350.7 458.1 1359.8 458.2C1368.9 458.3 1371.8 455.7 1382 455.9C1392.2 456.1 1409.5 459.8 1420.9 459.6C1432.3 459.3 1445.4 455.3 1450.3 454.4M1498.2 457.6C1504.8 456.7 1527 452.7 1537.6 452.3C1548.2 451.9 1553.5 454.5 1561.9 455.2C1570.4 455.9 1583.9 456.2 1588.3 456.4M854.1 495.7C859.8 495.3 877.8 493.6 888.3 493.8C898.7 494 907.1 497.4 916.8 496.9C926.5 496.3 934.9 490.6 946.3 490.3C957.8 490 974.3 494.5 985.4 494.8C996.4 495.1 1002.3 491.7 1012.6 492.1C1022.9 492.4 1036 496.8 1047.3 497C1058.5 497.2 1069.2 494 1080.2 493.3C1091.1 492.7 1101.2 493 1113 493.1C1124.8 493.1 1139.2 493.8 1151 493.5C1162.8 493.2 1173.8 492.1 1183.8 491.2C1193.8 490.2 1201.5 488 1210.9 487.8C1220.4 487.7 1229.3 490.4 1240.5 490.4C1251.8 490.3 1266.1 487 1278.5 487.4C1290.9 487.8 1304.5 492.2 1315.1 492.8C1325.7 493.3 1331.8 490 1342 490.6C1352.2 491.2 1366.7 496.3 1376.4 496.4C1386 496.4 1391.7 491.1 1399.9 490.9C1408.1 490.7 1416.9 495.1 1425.5 495.1C1434.1 495 1442.3 491.5 1451.7 490.5C1461.1 489.5 1471.1 488.7 1482.1 489.2C1493.1 489.8 1507.8 493.5 1517.6 493.8C1527.5 494.1 1537.3 491.4 1541.2 490.9M806.2 490.6C811.6 491.1 828.1 492.7 838.4 493.6C848.8 494.4 857 495 868.1 495.8C879.2 496.6 895 498.7 904.9 498.2C914.8 497.8 919.8 493.8 927.5 493C935.2 492.3 940.8 494.1 951 493.7C961.2 493.4 976 491.3 988.7 491.1C1001.4 491 1015.8 492.4 1027.1 492.8C1038.3 493.3 1046.9 494.1 1056.2 494C1065.5 493.9 1071.9 492.8 1082.9 492.4C1093.8 492.1 1110.5 491.7 1122.1 491.9C1133.6 492.1 1147.1 493.4 1152.2 493.7M1293.1 494.1C1299.7 493 1320.2 488.2 1332.8 487.5C1345.3 486.7 1357.9 489.5 1368.4 489.7C1378.9 489.8 1387.2 487.8 1395.8 488.3C1404.3 488.9 1411.6 492.4 1419.7 492.8C1427.7 493.1 1435.5 490.3 1443.9 490.4C1452.3 490.4 1462.1 492.5 1470.2 492.9C1478.3 493.3 1484.9 492.5 1492.4 492.8C1499.9 493.2 1511.3 494.5 1515.1 494.9M794.8 528.5 L825.7 527.6M887.8 535.9C892.9 535.7 909.1 535 918.4 534.7C927.8 534.4 939.8 534.3 944.1 534.3M1046.3 534.7C1050 534 1060.8 532 1068.6 530.6C1076.4 529.3 1083.8 527.6 1093.1 526.6C1102.5 525.5 1113 525 1124.6 524.4C1136.3 523.7 1152.5 523.2 1163 522.5C1173.5 521.8 1183.4 520.6 1187.5 520.2M1245.9 520.1C1250.4 519.7 1262.5 517.7 1272.8 518.1C1283.1 518.4 1297.5 522 1307.6 522.1C1317.6 522.2 1328.9 519.3 1333.2 518.7M681 536 L704.1 537M842.9 529.7 L865.2 527.9M958.5 531.4C963 531.5 977 532.2 985.5 531.9C994.1 531.7 1001.8 530.8 1010 530.1C1018.2 529.5 1026.4 528.4 1034.7 528.1C1042.9 527.9 1050.6 529.2 1059.6 528.7C1068.6 528.2 1078.5 524.9 1088.6 525.1C1098.7 525.4 1108.8 530.1 1120.1 530.2C1131.3 530.3 1145.4 525.7 1156.1 525.8C1166.7 525.9 1173.3 529.7 1184.1 530.7C1194.8 531.8 1208.3 531.9 1220.6 532.1C1232.9 532.3 1245.1 531.7 1257.8 531.9C1270.6 532.2 1285.6 533.5 1297.1 533.6C1308.5 533.6 1316.5 533.6 1326.7 532.2C1336.9 530.7 1347.8 525.8 1358.2 525.1C1368.7 524.5 1377.6 527.8 1389.3 528.3C1401.1 528.8 1422.2 528.3 1428.8 528.3M609.6 553.4C614.1 553 628.2 551.3 636.8 551C645.3 550.7 656.9 551.4 661 551.5M807.2 549.2C812.6 549.4 828.3 550.2 839.5 550.2C850.6 550.2 862.9 549.6 874.2 549.3C885.5 549.1 897.4 549.2 907.3 548.6C917.2 547.9 929.2 545.8 933.6 545.3M990.9 548.8C996.2 548.7 1010.9 548.8 1022.9 548.3C1034.9 547.7 1051.9 547 1062.7 545.7C1073.4 544.5 1078.4 541.1 1087.5 540.9C1096.7 540.8 1112.5 544.1 1117.5 544.7M1173.4 550.7C1177.6 550.4 1188.4 548.9 1198.2 548.6C1208 548.4 1220.5 549.3 1232.4 549.3C1244.2 549.4 1257.1 548.7 1269.1 549C1281.2 549.3 1292.6 550.5 1304.5 551.1C1316.4 551.8 1334.6 552.5 1340.6 552.7M733 576.2C737.3 576.5 750.7 578.1 758.7 578C766.6 578 772 576.4 780.8 576C789.7 575.6 801.4 575.7 811.8 575.7C822.2 575.7 833 575.1 843.5 575.9C854 576.7 864.8 580.2 874.8 580.3C884.8 580.3 892 576.1 903.2 576.2C914.5 576.2 931.8 579.5 942.3 580.5C952.8 581.4 956.8 582.3 966.1 581.7C975.4 581.1 986.3 577.2 998.2 576.8C1010.1 576.4 1025.5 579 1037.6 579.2C1049.7 579.3 1060 578.2 1070.8 577.6C1081.6 577.1 1092.5 576.2 1102.3 576C1112.2 575.7 1120.2 576.2 1130.1 575.9C1139.9 575.7 1150.3 573.8 1161.3 574.6C1172.2 575.3 1183.6 579 1195.7 580.3C1207.8 581.5 1222.8 582.6 1233.7 582C1244.6 581.4 1252.1 577.6 1260.9 576.6C1269.7 575.6 1276.6 575.9 1286.3 576C1296 576 1308.1 577.2 1319.2 577C1330.2 576.9 1341 575.2 1352.6 575C1364.2 574.7 1379.1 575.4 1388.8 575.5C1398.5 575.7 1407.2 576 1410.9 576.1M633.8 580.4 L656.9 573.1M816.2 569.1C821.2 568.9 837.3 567.8 846.1 567.9C854.9 568 860.5 569.2 868.9 569.8C877.3 570.4 887.4 571.4 896.6 571.4C905.8 571.5 914.3 570 924 570.1C933.8 570.2 945 571.9 955 572.2C964.9 572.5 974.5 571.8 984 572C993.4 572.2 1000.9 574 1011.5 573.4C1022.2 572.8 1037 568.7 1047.8 568.5C1058.6 568.3 1071.5 571.7 1076.3 572.3M1135.1 574.3C1139 573.3 1149.7 568.5 1158.3 568.2C1166.9 567.9 1181.9 571.7 1186.6 572.4M1247.7 570.6C1253.4 570.9 1270.4 572.3 1282.4 572.9C1294.3 573.5 1307 573.9 1319.4 574.2C1331.7 574.5 1345.5 574.8 1356.4 574.9C1367.3 574.9 1373.5 575.6 1384.8 574.7C1396.1 573.8 1417.5 570.3 1424 569.4M977.4 604.9C982.1 604.8 995.2 604.7 1005.7 604.1C1016.2 603.6 1029.8 601.9 1040.3 601.7C1050.8 601.5 1059.9 602.2 1068.6 603.1C1077.4 604 1088.7 606.6 1092.7 607.3M1152.5 599.9C1157.3 599.1 1170.9 596.6 1181.3 595.4C1191.7 594.1 1203.8 592.4 1214.8 592.3C1225.8 592.1 1236.7 593.8 1247.1 594.5C1257.4 595.2 1268.3 595.6 1276.9 596.5C1285.5 597.4 1290.7 600.1 1298.9 599.9C1307.1 599.7 1316.1 596.9 1326.1 595.4C1336.1 593.9 1349.5 591.2 1359 591C1368.5 590.8 1379 593.5 1383 594M607.6 620.7 L637.3 617.6M995.1 613.6C999.7 613.6 1012.5 614.6 1023.1 613.5C1033.7 612.4 1047.4 607.3 1058.8 607C1070.2 606.8 1079.9 611.1 1091.5 612.1C1103.2 613 1122.3 612.7 1128.5 612.9M1184 607.5C1189.1 608 1204 609.6 1214.1 610.6C1224.2 611.5 1235.6 612.9 1244.5 613.3C1253.5 613.7 1258 613 1267.8 613C1277.6 612.9 1297.4 613.1 1303.3 613.2M1373.8 606.7 L1405.6 609.7M1009 646.3C1012.7 647.2 1021.3 650.7 1031 651.8C1040.7 652.9 1055.5 652.5 1067.2 653.1C1078.9 653.7 1090.8 655.9 1101.1 655.3C1111.4 654.7 1118.4 649.4 1129.2 649.4C1140 649.4 1155.4 655.5 1166.1 655.5C1176.8 655.5 1188.8 650.5 1193.4 649.5M1249.5 650.2C1255.9 651.1 1274.9 655.8 1287.8 655.9C1300.8 655.9 1316.8 650.8 1327.1 650.6C1337.5 650.3 1341.8 654.6 1350.2 654.4C1358.6 654.2 1367.9 649.8 1377.6 649.6C1387.2 649.4 1403.1 652.5 1408.2 653.1M981.2 651.3 L1020.5 649.1M1103.9 655.7C1109.7 655.1 1127.3 652.6 1138.6 652.2C1150 651.7 1159.9 652.8 1171.8 653.1C1183.8 653.4 1198 654.6 1210.3 654C1222.6 653.4 1234.1 650.3 1245.7 649.6C1257.4 649 1269.5 650.1 1280 650.1C1290.5 650.1 1298.1 649.2 1308.7 649.7C1319.3 650.1 1333.9 652.6 1343.7 652.7C1353.5 652.8 1359.5 650.5 1367.5 650.4C1375.5 650.2 1383.1 651.2 1391.5 651.8C1400 652.5 1413.7 654.1 1418.1 654.5M967.1 693.3C972.2 692.7 987.7 690.6 997.5 689.7C1007.3 688.8 1016.5 688.5 1025.9 687.9C1035.3 687.4 1042.6 686.9 1053.9 686.4C1065.2 685.9 1081.3 685.1 1093.6 685.1C1105.9 685 1116.9 685.7 1127.7 686C1138.6 686.3 1148.3 685.4 1158.7 686.9C1169.1 688.3 1181.2 694.1 1190.2 694.7C1199.2 695.2 1202.8 691.2 1212.8 690.2C1222.9 689.3 1238.7 689 1250.5 689.1C1262.4 689.2 1272.3 690.8 1284 691C1295.6 691.1 1308.5 689.9 1320.3 689.9C1332 690 1342.9 690.4 1354.5 691.2C1366.1 692 1379.3 694.7 1389.9 694.5C1400.5 694.4 1409.6 690.6 1418.2 690.1C1426.7 689.7 1437.4 691.5 1441.3 691.7M966.1 689C970.4 688.4 982.2 685.5 992 684.9C1001.8 684.3 1015.1 685.5 1024.8 685.4C1034.6 685.4 1040.7 684.4 1050.4 684.7C1060.1 684.9 1071.4 686.3 1083.2 687.1C1095 688 1110.4 689.7 1121 689.7C1131.5 689.7 1136.5 687.2 1146.3 686.9C1156.2 686.7 1169.6 688 1179.9 688C1190.1 688.1 1198.2 687.7 1207.7 687.4C1217.3 687.1 1232.2 686.3 1237 686.1M1293.3 684.8C1298.8 685.3 1316.9 687.3 1326.1 688.1C1335.3 688.8 1338 689 1348.4 689.2C1358.7 689.4 1381.5 689.3 1388.1 689.3M792.7 726.9 L828.7 727M908.3 723.7C914.8 723.7 936.6 723.2 947.2 723.9C957.9 724.6 964.1 727.7 972.4 727.8C980.8 727.9 988.8 725.3 997.3 724.6C1005.9 723.9 1013.7 723.8 1023.7 723.7C1033.7 723.5 1046.5 723.7 1057.2 723.6C1067.8 723.6 1082.4 723.4 1087.4 723.4M1145 727.8C1148.9 728.2 1157.8 730.2 1168.1 730C1178.4 729.7 1195.9 727 1206.6 726.2C1217.4 725.4 1223.4 725.6 1232.7 725.2C1242 724.9 1251.6 723.8 1262.5 724.1C1273.4 724.4 1285.5 726.7 1298.1 727C1310.7 727.3 1327.2 726.3 1338 725.7C1348.8 725.1 1354.2 723.3 1362.9 723.6C1371.5 724 1380.7 727 1389.7 727.7C1398.6 728.3 1412.2 727.5 1416.8 727.5M776.2 743.2C782.6 742.6 801.7 740.3 814.7 739.6C827.8 738.8 847.8 738.6 854.4 738.4M921.7 737.5C925.7 737.3 937 735.2 945.6 736.2C954.2 737.3 963.6 742.4 973.3 743.6C983.1 744.8 994.7 744.2 1004.1 743.5C1013.4 742.8 1025.1 740.2 1029.3 739.6M1093 738.4C1097.7 738.5 1110.2 739.3 1121.2 739.1C1132.3 739 1152.8 737.8 1159.1 737.6M1273.5 742.5C1278.8 741.9 1293.8 739.9 1305.4 739.1C1317 738.2 1332.2 737.3 1343.1 737.5C1354 737.7 1361.4 739.4 1370.9 740.2C1380.3 741.1 1395 742.3 1399.8 742.7M781.6 749.4C787.5 749.4 806.3 749 817 749.2C827.7 749.4 835.5 750.4 846.1 750.5C856.6 750.6 869.3 750.2 880.3 749.8C891.3 749.4 902.3 747.5 912 748.1C921.8 748.7 928.5 752.2 938.8 753.2C949.1 754.3 963.6 754.7 973.8 754.5C984 754.3 990.2 752.2 999.8 752C1009.4 751.8 1019.9 753.3 1031.3 753.3C1042.7 753.2 1055.7 751.9 1067.9 751.7C1080.2 751.6 1092.5 751.4 1104.7 752.4C1117 753.3 1131.7 756.6 1141.6 757.4C1151.6 758.2 1154.5 757.7 1164.4 757.2C1174.3 756.8 1190.6 755.5 1201.1 754.5C1211.7 753.6 1217.2 751.9 1227.7 751.6C1238.2 751.3 1254.1 752.7 1264.1 752.9C1274.1 753.1 1278 752.8 1287.7 752.9C1297.4 753 1310.4 752.7 1322.2 753.4C1334 754.1 1346.8 756.5 1358.6 757.1C1370.3 757.6 1382.7 756.9 1392.8 756.8C1402.9 756.7 1414.7 756.6 1419.1 756.5M780.5 777C787 776.9 806.9 776.1 819.2 776.1C831.4 776 843.5 777.1 854 776.9C864.5 776.7 872.5 774.7 881.9 774.7C891.4 774.7 906 776.7 910.8 777.1M981.7 774.2C987.8 774.4 1006.2 775 1018.8 775.4C1031.3 775.9 1045.3 777.4 1056.8 776.9C1068.3 776.5 1082.8 773.4 1088 772.7M1157.6 776.5 L1193.4 774.7M1240.4 776.2C1244.2 775.4 1254.4 772.8 1263.4 771.6C1272.3 770.5 1284 769.2 1294.1 769.3C1304.1 769.4 1312.6 772 1323.6 772.2C1334.6 772.4 1354.2 770.8 1360.3 770.6M798.3 783.1C802.8 783.6 814.9 785.3 825.2 786.3C835.5 787.4 849.2 789.7 860 789.6C870.9 789.5 878.9 787 890.2 785.7C901.5 784.3 916.1 782.9 928 781.5C939.9 780.1 952.1 777.8 961.5 777.3C971 776.8 974.5 778.1 984.8 778.5C995.1 778.8 1011.8 778.9 1023.4 779.4C1035 779.8 1044.7 781.5 1054.4 781.4C1064.1 781.3 1073 778.4 1081.7 778.7C1090.3 779 1098.2 783.1 1106.3 783.2C1114.4 783.3 1119.6 780.1 1130.1 779.4C1140.6 778.7 1158.3 778.2 1169.2 778.8C1180.2 779.4 1187.3 783.1 1195.9 783.1C1204.5 783.2 1212.7 779.1 1220.7 779C1228.6 778.9 1235.3 781.8 1243.4 782.6C1251.6 783.4 1259.9 784 1269.6 783.7C1279.3 783.3 1291.7 780.4 1301.7 780.5C1311.7 780.6 1318.8 782.7 1329.5 784.2C1340.2 785.6 1356.1 788.5 1365.9 789.2C1375.8 789.9 1384.8 788.5 1388.5 788.3M852.5 805.4C858.2 805.1 875.7 804.1 886.3 804C897 803.8 907.2 803.5 916.4 804.5C925.7 805.6 937.5 809.5 941.7 810.5M996.8 804C1001.9 803.7 1018.1 801.9 1027.1 802.4C1036.2 802.9 1041.5 806 1050.9 807C1060.3 808 1072.2 808.4 1083.3 808.6C1094.4 808.9 1105.1 808.2 1117.2 808.4C1129.4 808.6 1143.4 810.4 1156.2 809.8C1169 809.2 1187.6 805.5 1193.9 804.6M1278.9 807.3C1284.1 807.6 1300 808.7 1310.1 809C1320.1 809.4 1330.1 809.6 1339.3 809.2C1348.6 808.7 1354.9 807.1 1365.7 806.3C1376.4 805.5 1397.3 804.8 1403.7 804.5M899.5 822.6C904.2 822.2 918.7 820.9 927.7 820.5C936.7 820.1 942.7 819.6 953.6 820.3C964.6 821 981.8 824.5 993.6 824.8C1005.4 825 1013.5 821.8 1024.5 821.8C1035.6 821.8 1048.6 824.7 1060.1 824.7C1071.5 824.8 1083.8 822 1093.3 822.1C1102.8 822.3 1108.9 825.6 1117 825.8C1125.1 826 1131.9 824.1 1141.9 823.3C1152 822.5 1164.9 820.6 1177.3 821.2C1189.7 821.7 1203.6 826.4 1216.2 826.7C1228.8 827 1242 822.8 1253.2 822.9C1264.3 823.1 1271.8 827 1283 827.7C1294.3 828.4 1314.4 827.3 1320.7 827.2M1391.7 828.3 L1428.8 827.1M907.5 831.7C913.3 831.8 930.3 832.6 942.1 832.2C954 831.9 968.8 829.3 978.7 829.5C988.5 829.8 993.1 832.2 1001.4 833.9C1009.7 835.5 1019.5 837.8 1028.3 839.5C1037.1 841.3 1043.6 843.7 1054.3 844.5C1065 845.4 1079.5 845.6 1092.4 844.6C1105.3 843.5 1120.9 838.5 1131.6 838.2C1142.4 837.9 1147.6 842.5 1157 842.6C1166.5 842.7 1176.8 839.2 1188.5 838.7C1200.3 838.2 1221 839.2 1227.5 839.3M1286 843.7C1290.8 843.1 1304.3 841 1314.8 839.9C1325.2 838.7 1338.1 836.3 1348.8 836.7C1359.4 837.1 1368.1 842.2 1378.8 842.4C1389.4 842.6 1407 838.5 1412.7 837.7M939.5 850.2C944 849.5 955.8 846.1 966.5 845.6C977.1 845.1 993.1 847.2 1003.4 847.3C1013.6 847.4 1019.6 846.2 1027.9 846.2C1036.1 846.2 1044 848.1 1052.8 847.3C1061.5 846.5 1071 842 1080.4 841.6C1089.8 841.2 1100.3 844.9 1109.3 845C1118.3 845 1126.2 842.8 1134.7 841.8C1143.2 840.8 1152 838.6 1160.2 838.8C1168.5 838.9 1175.4 841.4 1184.2 842.6C1193 843.9 1204 845 1213.1 846C1222.2 847.1 1228.3 848.4 1238.8 848.9C1249.2 849.3 1265.1 849.7 1275.8 849C1286.6 848.2 1293.8 845.1 1303.5 844.2C1313.2 843.3 1323 844.3 1334 843.6C1345 842.9 1357.2 840.8 1369.5 840.1C1381.9 839.3 1401.6 839.3 1408 839.1M948.7 852.4C952.6 853.2 961.8 856.8 971.9 857.5C982 858.2 998.2 856.9 1009.3 856.4C1020.4 855.9 1027.5 854.7 1038.5 854.3C1049.6 854 1065.4 854.6 1075.7 854.4C1086.1 854.2 1091.2 853.3 1100.5 853.3C1109.8 853.3 1120.4 854.2 1131.5 854.5C1142.5 854.8 1154.7 854.4 1166.8 854.9C1179 855.4 1192.6 857.2 1204.7 857.4C1216.7 857.5 1229.7 856.3 1239.3 855.7C1249 855.1 1254.2 853.7 1262.5 853.9C1270.9 854.2 1281 856.9 1289.5 857.3C1297.9 857.7 1303.1 855.9 1313.1 856.2C1323.2 856.6 1339.6 858.6 1349.6 859.2C1359.5 859.8 1365.3 859.9 1372.9 859.8C1380.4 859.6 1386.8 858.4 1394.9 858.3C1403.1 858.1 1417.4 858.6 1421.9 858.7M615.1 389.2 L622 424.7M627.2 396.2C627.5 402.8 627.8 424.4 629.1 435.8C630.4 447.3 633.8 459.9 634.7 464.7M637.1 604.7 L639.5 642.6M644.7 386C645.3 390.4 647.9 402.9 648.3 412.3C648.6 421.8 647 437.7 646.8 442.8M673 537.4C672.4 541.1 669.9 551 669.4 559.8C669 568.6 670.2 585 670.3 590.1M675.2 386.1C675.8 392.6 677.5 411.8 678.9 424.6C680.2 437.5 682.3 452.9 683.6 463.1C684.9 473.2 686.2 481.9 686.7 485.6M696.2 430.7C696.3 435.5 696.7 450.4 697 459.4C697.2 468.3 697.5 480.1 697.7 484.3M705.9 430.4 L708.1 464.7M723.8 489.2 L716.8 516.3M778.1 464.8 L783.8 500.3M778.4 740.9 L781.4 780.2M783.8 440.9C782.3 447.2 775.7 468.3 775 478.8C774.3 489.3 778.9 494.8 779.6 503.8C780.3 512.9 779.2 522.1 779.1 533.2C779.1 544.3 779.3 564.4 779.3 570.7M801.8 379.5C803 383.7 806.8 396.2 808.5 404.8C810.2 413.4 811.3 421 812 431C812.6 441.1 811.6 454 812.5 465.2C813.3 476.5 816.2 486.9 817 498.5C817.7 510.1 817.5 523.1 816.8 534.9C816.1 546.6 813.6 559.2 812.8 569.1C812 579 812.1 590.1 812 594.3M812.6 727.3C812.3 732.1 810.5 747 810.4 755.8C810.4 764.6 812.1 776 812.4 780.1M821.9 444.4C822.8 451 825.6 471.6 827.1 483.8C828.5 495.9 830.3 505.2 830.9 517.3C831.4 529.5 830.4 545.6 830.3 556.7C830.2 567.8 830.3 579.6 830.3 584.1M832.4 711.9C832 715.8 830.7 725.5 829.9 735.2C829.1 744.8 827.1 759.5 827.4 769.7C827.7 779.9 831.2 792 832 796.5M828.2 436C827.6 441.7 824.5 458.9 824.8 470.5C825.2 482.1 829 495.6 830.5 505.6C832 515.7 834 523 833.8 531C833.6 539.1 829.9 545.3 829.3 554C828.8 562.6 830.3 578.1 830.5 582.9M835.4 704.8C835.5 708.8 836.6 720.5 836.1 728.5C835.5 736.6 832.6 744.9 832 753C831.4 761.1 832.6 768.5 832.4 777C832.1 785.4 830.9 799.2 830.6 803.6M858.8 390.3C859.9 394.9 863.9 409.2 865.3 417.9C866.7 426.6 865.9 432.4 867.4 442.7C868.9 453 874.2 467.4 874.4 479.6C874.5 491.8 869 504 868.1 515.9C867.1 527.8 868.3 541.1 868.4 550.9C868.6 560.7 868.7 570.6 868.8 574.5M872.9 787.1 L866.9 821.2M876.1 396.6C876.9 400.5 879.9 412 880.8 420.4C881.7 428.9 881.1 436.6 881.4 447.5C881.8 458.4 882.7 479.4 882.9 485.8M887.3 723.8C887 728 885.7 740.1 885.6 749C885.6 757.8 886.6 765.8 887.1 777C887.5 788.3 888.2 810 888.4 816.5M897 487.1C896.6 491.5 894.5 505.1 894.2 513.7C893.9 522.2 895.1 530.1 895.2 538.4C895.4 546.7 895.7 555.1 895.1 563.5C894.6 571.9 892.3 584.6 891.8 588.8M887.3 720.6C887.9 726.7 890.9 746.5 890.9 757.4C890.8 768.3 886.9 777.3 886.9 786.1C886.8 794.9 889.9 806.1 890.5 810.1M920.8 397.8 L921.1 434.4M928.3 495C929.3 499.7 933.6 512.2 934.5 523.2C935.4 534.2 934.5 548.8 933.6 561C932.8 573.2 930.2 590.5 929.5 596.4M927.6 832.8 L933.3 862M943.4 387.4C944.8 392 949.5 406.4 951.9 415C954.3 423.6 957.4 429.7 957.6 438.9C957.7 448.1 952.5 458.7 952.8 470.3C953.1 481.8 959.2 497 959.2 508.1C959.3 519.2 953.9 526.1 953 536.6C952.1 547.1 954.3 561.6 954.1 571.2C953.8 580.7 952 590 951.6 593.8M953.6 717.5C953.9 723.6 955.9 741.3 955.5 754C955.2 766.7 952.1 781.4 951.5 793.8C950.9 806.3 951.4 818.2 952 828.6C952.6 839 954.6 851.5 955.1 856M961.2 391.4C960.6 398 958.2 420.5 957.5 431.4C956.9 442.3 957.5 446.5 957.4 456.7C957.2 466.8 956.9 486.4 956.8 492.3M951.3 701 L953 727.7M951.9 781C952.1 787 954.1 805.4 953.1 816.5C952 827.6 946.8 842.6 945.6 847.8M980.1 392.4C980.2 398.2 980.9 415 980.8 427.2C980.7 439.4 979.6 459.4 979.3 465.9M987.3 562.4C988.3 567.1 992.1 581.6 993 590.5C993.8 599.4 992.5 606.3 992.6 616.1C992.7 625.9 993.6 639.4 993.6 649.2C993.6 659 992.1 666.2 992.4 675.1C992.7 684.1 996 693.1 995.5 702.8C994.9 712.5 990.2 723.2 989 733.5C987.8 743.7 988.4 759.1 988.2 764.2M990.9 814.8 L992.9 854.2M1000.2 385.8C998.7 391.2 993.5 406.9 991.1 418.1C988.6 429.4 985.6 441 985.5 453.3C985.3 465.5 990.1 480.8 990.3 491.8C990.4 502.8 987.2 514.6 986.6 519.2M986.3 583C987.2 588.4 991.7 603.7 992 615.6C992.4 627.6 988.7 643.9 988.4 654.6C988.1 665.3 989.9 669.6 990.3 679.9C990.7 690.2 991.4 705.2 990.8 716.3C990.2 727.5 986.6 735.5 986.6 747C986.5 758.4 990.3 772.3 990.5 785.1C990.7 797.9 987.6 812.7 987.8 823.8C987.9 834.9 990.7 847.1 991.3 851.8M1016.5 385.8C1015.9 391 1014.1 406 1012.6 417.5C1011.1 428.9 1008.4 448.1 1007.6 454.2M1007.1 513.1C1006.4 517 1003.3 526.5 1003.1 536.2C1002.8 545.8 1005.1 565.3 1005.5 571.1M1005.8 641.7C1006.1 647.6 1007.1 667.3 1007.8 677.2C1008.4 687 1009.5 696.9 1009.8 700.8M1002.4 816.3 L1005.4 850.4M1033.1 383.1C1032.9 389.7 1033.2 412.1 1031.9 423C1030.6 433.8 1027.6 438.1 1025.2 448.2C1022.8 458.3 1018.2 471.9 1017.6 483.5C1017 495.1 1021.2 506 1021.4 517.7C1021.6 529.5 1018.4 541.6 1018.9 554C1019.5 566.3 1023.7 580.7 1024.9 591.8C1026.1 603 1025.9 616.1 1026.1 621M1019.2 684.6C1019.1 688.3 1018.5 697.8 1019 706.7C1019.4 715.6 1021.7 727.8 1021.9 737.9C1022.2 748.1 1020 756.6 1020.4 767.4C1020.9 778.1 1023.8 790.1 1024.7 802.5C1025.6 814.9 1026.3 830.5 1025.8 841.7C1025.2 852.8 1022.1 864.8 1021.3 869.4M1054.3 394.4C1055.8 399 1061 412 1062.8 422.2C1064.6 432.3 1064.3 444.5 1065.3 455.1C1066.3 465.8 1068.7 476.9 1068.9 485.9C1069.2 495 1067.4 501.4 1066.7 509.4C1066 517.5 1065.4 523.6 1064.8 534.1C1064.2 544.6 1063 559.6 1062.9 572.5C1062.9 585.3 1064.4 604.8 1064.7 611.3M1064 672.8C1063.9 677.2 1062.4 691 1063.3 699.4C1064.1 707.8 1068.7 714.9 1069.1 723.2C1069.5 731.4 1066.1 739.9 1065.4 749C1064.7 758.1 1064.2 766.3 1064.9 777.7C1065.7 789.1 1069.8 804.9 1070.1 817.7C1070.3 830.4 1067.1 848.1 1066.5 854.2M1070.6 451.9 L1067.4 476.2M1067.4 533.3C1067.5 539.6 1068.2 560 1067.9 571.4C1067.5 582.8 1065.9 592.1 1065.5 601.8C1065 611.6 1065.3 625.3 1065.2 630M1068.4 679.8C1068.3 684 1068 694.6 1068.1 704.8C1068.3 714.9 1069.2 730.5 1069.3 740.9C1069.4 751.3 1069.2 756 1068.8 766.9C1068.4 777.8 1067.4 794.5 1066.9 806.4C1066.4 818.2 1066.1 828.7 1065.9 838C1065.6 847.2 1065.5 857.8 1065.4 861.7M1092.2 387.3C1092.3 393.7 1092.1 414.1 1092.7 425.9C1093.3 437.7 1094.5 448.5 1095.6 457.9C1096.7 467.3 1098.2 473.8 1099.2 482.3C1100.2 490.9 1100.5 498.7 1101.7 509.1C1103 519.6 1106.7 532.6 1106.5 544.9C1106.3 557.1 1101.6 569.9 1100.6 582.8C1099.7 595.7 1100.4 609.3 1100.9 622.5C1101.4 635.7 1103.3 650.7 1103.6 661.9C1104 673.1 1102.7 680.9 1102.8 689.5C1102.9 698.2 1104.6 704.4 1104.5 713.8C1104.5 723.2 1103 735.8 1102.5 745.9C1102 756 1101.9 764.4 1101.6 774.4C1101.2 784.5 1100 796.2 1100.6 806.2C1101.3 816.2 1104.5 823.4 1105.6 834.7C1106.6 846 1106.7 867.6 1106.9 874.1M1112.5 419.2 L1117.5 457.9M1117.4 522.4C1116.6 527.7 1113.2 542.9 1112.5 554.6C1111.9 566.4 1113.8 582.8 1113.5 592.9C1113.2 602.9 1111.8 605.2 1110.6 615.1C1109.5 625 1106.8 641.4 1106.8 652.1C1106.8 662.7 1109.2 669.8 1110.6 678.9C1112.1 688 1115.3 696.3 1115.4 706.7C1115.5 717.1 1112.5 728.9 1111.2 741.3C1109.8 753.6 1108.6 769.8 1107.4 780.9C1106.2 792 1103.7 797.7 1103.9 807.8C1104.1 817.9 1107.8 836 1108.6 841.7M1130.4 381.2 L1137.1 409.7M1142.1 466.8 L1145.6 497.9M1141.5 550.4C1141.5 556.3 1141.8 575.6 1141.6 586C1141.4 596.3 1140.3 603.1 1140.2 612.3C1140.2 621.5 1140.4 632.1 1141.3 641.3C1142.2 650.5 1146 657.9 1145.7 667.3C1145.4 676.7 1140.5 692.4 1139.4 697.4M1141.9 787.5C1141.5 792.7 1139.9 809.4 1139.7 818.7C1139.4 828 1140.3 839.4 1140.4 843.5M1143.4 418.6C1141.7 424.1 1134.8 441.6 1133.5 451.8C1132.2 462 1134.8 469.4 1135.7 479.9C1136.6 490.4 1139.4 503.3 1138.9 514.8C1138.4 526.3 1133.8 543.1 1132.8 548.8M1132.9 598.5C1133.8 602.4 1137.3 613.5 1138.3 622.1C1139.3 630.7 1139.9 641.1 1139 650.1C1138 659.1 1133.6 671.8 1132.5 676.1M1134.9 737.6C1135.5 741.6 1138.5 753.2 1138.4 761.4C1138.4 769.6 1134.9 776.6 1134.7 786.9C1134.5 797.2 1136.8 817.4 1137.3 823.5M1167.4 391.9 L1170.5 414.8M1172.8 471.3C1172.8 477 1171.6 495.6 1172.4 505.8C1173.3 516.1 1177.7 524.6 1178.2 532.8C1178.6 541 1175.2 544.9 1175 554.9C1174.9 564.8 1176.9 586.2 1177.3 592.4M1182.6 681.7C1182.4 688.4 1182.6 709 1181.7 721.7C1180.7 734.3 1177.3 745.2 1176.8 757.8C1176.4 770.4 1179.2 785.3 1179.2 797.3C1179.3 809.2 1177.6 819 1177.1 829.4C1176.7 839.9 1176.6 855 1176.4 860.1M1182 383.5C1182.3 388.5 1183.7 402.9 1183.7 413.1C1183.6 423.3 1181.3 433.6 1181.4 444.7C1181.6 455.7 1183.1 469.1 1184.3 479.3C1185.5 489.5 1188.2 496.6 1188.6 505.8C1189 515 1186.3 524 1186.5 534.6C1186.7 545.1 1189.7 557.7 1189.7 569.3C1189.8 581 1187.7 593.9 1186.9 604.5C1186.1 615.1 1184.9 622.2 1185 632.9C1185.1 643.6 1186.5 658.2 1187.4 668.5C1188.2 678.8 1189.5 684.6 1190.2 694.7C1191 704.8 1192.1 718.7 1191.6 728.9C1191.1 739.1 1187.2 747.5 1187.3 755.8C1187.3 764 1190.4 768.9 1191.9 778.4C1193.5 787.8 1195.9 806.8 1196.6 812.4M1199.7 392.2C1200.4 398.5 1201.5 419 1203.8 429.9C1206.1 440.7 1212.6 448.8 1213.3 457.5C1214 466.3 1208.2 472 1207.8 482.4C1207.4 492.7 1209.6 507.1 1210.8 519.7C1212 532.3 1214.2 551.4 1214.8 557.7M1208.2 722.3C1209.2 728 1213.8 747.1 1214.2 756.6C1214.5 766 1210.5 770.6 1210.2 778.9C1209.8 787.2 1211.3 795.3 1211.9 806.2C1212.5 817.2 1213.6 838.2 1214 844.6M1219.1 484.2C1219.3 488.6 1219.5 502.4 1220.1 510.5C1220.8 518.7 1222.2 525 1223.2 533.2C1224.2 541.5 1226.3 549 1226.1 560.1C1225.9 571.2 1222.3 588.9 1221.8 599.8C1221.3 610.8 1222.8 615.4 1223.1 625.9C1223.5 636.5 1224.3 650.8 1223.7 663.1C1223.2 675.4 1220.6 687.5 1219.9 699.5C1219.2 711.5 1219.6 725.2 1219.4 735C1219.3 744.9 1219.2 754.7 1219.2 758.7M1214.7 809.4 L1216.8 836.6M1235.6 395.2 L1230.4 423.7M1226.2 528.8C1226.2 533.5 1226 547.2 1226.2 556.7C1226.3 566.3 1228.2 576.4 1227.2 586.2C1226.3 596 1220.6 604.9 1220.4 615.5C1220.2 626 1225.1 639.4 1226 649.4C1226.8 659.5 1226.3 665.1 1225.4 675.6C1224.5 686.2 1220.7 702.7 1220.6 712.6C1220.6 722.5 1224.5 725.7 1225 735.1C1225.4 744.6 1223 758.6 1223.2 769.4C1223.4 780.2 1225.9 789.2 1226.1 799.9C1226.4 810.6 1224.5 822.3 1224.6 833.5C1224.7 844.7 1226.2 861.5 1226.5 867.1M1251.2 389C1249.9 394.5 1245.2 410.9 1243.2 422.1C1241.2 433.3 1240.5 444.6 1239.2 456.3C1238 468 1235 481.4 1235.6 492.4C1236.2 503.4 1242.6 511.4 1242.8 522.3C1243.1 533.3 1238.2 545.4 1237.1 557.9C1235.9 570.4 1236.1 590.8 1235.9 597.3M1242.2 660.1 L1241.3 686.9M1241.7 761.8C1241 767.5 1238.4 786.2 1237.6 796.2C1236.9 806.2 1237.3 817.6 1237.2 821.9M1266.4 396.4C1267.1 403 1268.5 425.1 1270.7 436.2C1272.9 447.4 1278.3 458.8 1279.8 463.3M1276.9 537.1C1277.1 543.4 1278.3 563.3 1278.2 574.6C1278.1 585.9 1276.5 595.7 1276.2 605C1275.8 614.3 1276.2 620.4 1276 630.5C1275.9 640.7 1274.8 654.3 1275.3 665.9C1275.8 677.6 1278.8 690.4 1279.1 700.4C1279.5 710.5 1277.8 722 1277.5 726.3M1278 793.1C1278.4 797.8 1280.3 810.9 1280 821.5C1279.7 832.1 1277 850.8 1276.4 856.7M1289.3 387.4C1289.6 391.7 1291.8 402.6 1291.6 413C1291.3 423.4 1288.3 437.9 1287.6 449.6C1286.9 461.3 1288 472.1 1287.5 483.1C1287 494 1284.7 506.4 1284.7 515.5C1284.8 524.6 1287.2 527.7 1287.8 537.5C1288.4 547.3 1288.9 562.8 1288.4 574.5C1287.9 586.2 1284.7 597.6 1284.8 607.7C1284.8 617.8 1287.3 624.7 1288.5 635C1289.6 645.2 1290.4 657.8 1291.7 669.2C1293 680.6 1295.7 693.7 1296.3 703.3C1296.9 713 1296.1 719 1295.5 727.1C1294.9 735.2 1293.8 742.9 1292.8 751.8C1291.8 760.8 1290.4 770.6 1289.4 780.8C1288.3 791 1286.9 802.5 1286.4 813.2C1285.8 823.9 1285.9 839.6 1285.8 844.9M1312.2 382C1311.4 387.4 1309.2 402.9 1307.1 414.2C1305 425.6 1300.2 439.9 1299.6 450.3C1299 460.7 1302.8 472.1 1303.5 476.4M1300.3 634.2C1300.8 638.1 1303.9 649.2 1303.4 657.7C1303 666.2 1298.5 680.6 1297.5 685.1M1302.5 747.3 L1298.9 771.3M1330.2 386.8C1330 393 1328.9 412.7 1329.2 423.8C1329.6 434.8 1331.9 442.5 1332.4 453.1C1332.9 463.6 1332.8 475.9 1332.2 487C1331.6 498 1330.3 507.7 1328.9 519.3C1327.5 531 1324.8 550.6 1324 556.9M1328.5 628C1327.8 633.1 1324.6 647.6 1324.1 658.5C1323.6 669.4 1325.2 681.9 1325.6 693.3C1326 704.7 1326.5 717.6 1326.4 726.9C1326.4 736.2 1325.3 745.5 1325.1 749.3M1319.8 816.1 L1319.5 843.6M1340.2 447.8C1339.4 452.6 1335.7 465.3 1335.7 476.7C1335.7 488.1 1340.4 503.4 1340.4 516.1C1340.4 528.9 1336.3 547 1335.5 553.1M1339.1 610.2C1338.9 615.2 1337.4 631 1337.9 640.2C1338.5 649.3 1341.7 654.3 1342.5 664.9C1343.3 675.5 1342.6 697.3 1342.6 703.8M1339.7 837.1 L1340.9 872M1356.4 404.7C1356.4 408.7 1357.3 420.6 1356.3 429.1C1355.3 437.6 1351.4 451.2 1350.4 455.7M1352.3 589.5C1351.7 594 1348.8 607 1348.9 616.5C1349.1 626 1353.4 636.8 1353.1 646.4C1352.9 655.9 1348.5 665.3 1347.5 673.8C1346.6 682.3 1346.6 689 1347.2 697.3C1347.9 705.6 1350.9 713.9 1351.4 723.4C1351.9 733 1350.4 744.4 1350.3 754.5C1350.2 764.6 1350.7 772.4 1350.9 783.9C1351.1 795.4 1350.9 810.5 1351.5 823.6C1352 836.7 1353.8 856.1 1354.3 862.6M1386.6 391C1387.8 394.9 1391.9 406 1393.9 414.4C1396 422.7 1398 436.6 1398.8 441M1397.9 564.4C1398.4 569.3 1400.7 583.2 1400.4 594C1400.1 604.9 1396.2 618.1 1396.1 629.4C1396 640.6 1399.7 649.7 1400 661.6C1400.2 673.5 1397.3 687.6 1397.5 700.7C1397.6 713.9 1400.9 729.5 1400.8 740.6C1400.7 751.6 1397.7 756 1396.8 766.9C1395.8 777.8 1394.4 794.9 1395.2 805.8C1396 816.8 1401.8 823.5 1401.8 832.6C1401.8 841.7 1396.5 855.6 1395.4 860.2M1398.7 432C1397.8 438.2 1393.3 458.5 1392.9 469.3C1392.5 480.1 1396.6 488.4 1396.4 496.7C1396.2 505 1392.5 511.5 1391.7 518.9C1390.8 526.3 1391.2 533.8 1391.1 541.2C1391.1 548.5 1391.5 559.5 1391.6 563.2M1391.3 624.5C1392 628.9 1394.9 641.7 1395.7 650.9C1396.6 660.1 1396.4 674.8 1396.5 679.6M1394.8 738.7C1394.6 744 1393.5 760 1393.8 770.6C1394.2 781.2 1396.7 792.8 1396.9 802.3C1397.1 811.8 1395.7 817.5 1394.8 827.7C1394 838 1392.5 857.8 1392 863.8M1425.1 384.5C1425.7 388.5 1426.9 397.9 1428.6 408.4C1430.2 418.8 1434.2 434.2 1435.2 447.1C1436.1 460.1 1434.4 474.5 1434.1 486C1433.8 497.5 1432.5 507.3 1433.5 516.3C1434.4 525.4 1438.7 536.3 1439.8 540.3M1434.2 657.3C1434.1 662.3 1433.7 678.1 1433.7 687.3C1433.7 696.5 1434.2 708.2 1434.3 712.4M1434.2 766.4C1434.1 771.4 1433.6 785.6 1433.9 795.9C1434.3 806.2 1436 823 1436.5 828.4M1447.1 441.2 L1449.3 475.7M1455.7 389.5C1455.6 395.5 1455 414 1455.4 425.2C1455.8 436.5 1457.9 445.3 1458.2 457C1458.6 468.7 1457.9 485.3 1457.4 495.5C1457 505.6 1455.9 514.2 1455.6 518M1443.8 750.6 L1439.7 787M1028.5 627.7C1032.1 624.3 1042.7 614.9 1049.9 607.1C1057.2 599.4 1068.4 585.4 1072.1 581.1M1400.3 518.7C1404.2 514.4 1415.8 502.9 1423.6 493.2C1431.3 483.6 1443 466.2 1446.9 460.8M984.8 783.6C991.2 776.3 1010.9 753.9 1022.9 739.8C1034.9 725.7 1051.3 705.6 1057 698.8M937 562.3C940.9 559.9 953.9 553.8 960.8 548.2C967.7 542.5 975.6 531.7 978.6 528.4M1139 740.4C1145.2 733.1 1163.3 712.3 1176.6 696.5C1189.8 680.7 1211.7 654.1 1218.7 645.6M1378.9 530.5C1375.1 533.8 1364 543.4 1355.9 550C1347.7 556.7 1334.4 567 1330 570.4M1319 670.3C1327.3 677.3 1353.1 697.3 1368.6 711.9C1384 726.4 1404.6 749.9 1411.9 757.5M1262.6 703.1C1267.6 705.9 1281.5 713.7 1293 719.7C1304.5 725.6 1324.9 735.8 1331.3 739M916.2 543.5C920.4 549.4 932.6 567.1 941.4 579C950.2 591 964.5 609.2 969.1 615.3M1088.3 788.3C1090.9 781 1098 758.3 1103.6 744.8C1109.3 731.3 1119.1 713.7 1122.3 707.5M1127.1 593.3C1131.6 600.9 1144.9 623.3 1153.9 638.8C1162.9 654.3 1176.5 678.4 1181 686.3M1379.2 830.9C1382 824 1390.2 803.2 1396 789.4C1401.8 775.5 1410.9 754.8 1413.9 747.9M1105.4 491.2C1100.7 494.6 1086.5 506 1077.3 511.4C1068.1 516.9 1054.8 521.8 1050.3 523.8M1150.2 563.5C1154.1 560.4 1166.2 551.6 1173.7 544.6C1181.1 537.7 1191.4 525.7 1195 521.9M1380.1 696.8C1383.6 693.8 1393.9 685.7 1401.5 678.8C1409.1 671.9 1421.7 659.4 1425.7 655.5M1232.9 798.8C1238.8 790.8 1255.9 766.9 1268.2 750.8C1280.6 734.6 1300.6 710.2 1307.1 702.1M1158.4 800.6C1161.9 804.2 1173.5 815.6 1179.1 822.2C1184.6 828.9 1189.7 837.2 1191.8 840.2M1262.9 707.5C1273 712.2 1302.4 726 1323.3 735.7C1344.1 745.4 1377.3 760.8 1388.1 765.8M1115.6 656.7C1107.5 660.2 1082.7 669.5 1066.7 677.5C1050.8 685.5 1027.7 700 1019.9 704.6M1404.4 642C1411.2 647.6 1430.8 666 1445 675.6C1459.2 685.2 1469.8 690.7 1489.6 699.6C1509.4 708.5 1551.3 724.3 1563.7 729.3M1447 675.6C1447 685.5 1455 727.4 1447 734.8C1439 742.2 1407 722.5 1399 720M1426.7 734.8C1424.5 743.4 1421.7 773.1 1413.7 786.7C1405.7 800.3 1384.4 811.4 1378.5 816.3M790 693.4 L930 693.4M799 715.4 L865 715.4M742 700 L738 640" fill="none" stroke="#f6f8ac" stroke-width="2.7" stroke-linecap="round"/>
<path d="M1079.1 692h3v4.5h-3zM1026.1 867.3h3.3v3.5h-3.3zM1439.6 740.4h2.1v4h-2.1zM1029.3 706.2h5.3v2.2h-5.3zM850.3 420.6h2.9v4h-2.9zM943.8 419.6h4.9v2.7h-4.9zM774 427.3h2.6v4.1h-2.6zM1227.7 559.1h2.6v3.3h-2.6zM959.6 442.9h2.3v3.3h-2.3zM1323.4 579.5h4.9v3.5h-4.9zM1427 512.8h3.9v2.6h-3.9zM1240.6 845.4h5.6v5h-5.6zM1281.9 755.6h2.3v3.2h-2.3zM904.6 516h2.9v5.2h-2.9zM1066.1 570.1h4.5v3.3h-4.5zM962 691.9h3.5v4h-3.5zM1081.1 490h2.8v4.5h-2.8zM1071.3 616.1h3.4v4.8h-3.4zM1373.2 422.7h5.5v4.3h-5.5zM1231.9 670.7h4.8v4.5h-4.8zM1143.9 626h3.7v4.6h-3.7zM1102.4 484.6h5.9v3.9h-5.9zM1346.6 541.8h5.1v4.8h-5.1zM845.4 719.3h2.5v5h-2.5zM1273.4 687.8h5.4v3.1h-5.4zM1013.1 472.1h5.6v6h-5.6zM934.5 393h3.2v5.7h-3.2zM762.2 453.9h3.7v3.1h-3.7zM1409.3 530.7h5v3.7h-5zM1139.6 605h5.6v5.1h-5.6zM1170.1 833.1h3.4v4.6h-3.4zM1415.8 739.1h2.9v2.9h-2.9zM1254.7 772.8h3.1v3.4h-3.1zM1212.8 699.1h3.1v4.1h-3.1zM1401.3 449.3h3.5v4.6h-3.5zM958.9 424.5h5.7v4h-5.7zM1289.7 402.8h3.7v4.5h-3.7zM820.2 471h4v5.6h-4zM805.2 508.4h4.8v2.9h-4.8zM808.1 503h2.8v4.1h-2.8zM1015.1 803.8h3.5v2.2h-3.5zM1158.7 495h4.1v3.9h-4.1zM637.9 550.4h2.3v3.4h-2.3zM1007.7 633.4h5.6v5.8h-5.6zM1130.3 635.3h2.6v3.5h-2.6zM880.9 420.7h3.9v5.1h-3.9zM774 760.9h2.1v4h-2.1zM1010.2 479.5h4v5.9h-4zM1178.9 607.6h5.9v2.9h-5.9zM1242.2 547.1h2.6v2.8h-2.6zM1069.3 696.7h3.4v2.3h-3.4zM687.6 647h3.2v4.5h-3.2zM1276.7 608.8h3.1v3.4h-3.1zM1284.6 789.1h2.8v2.7h-2.8zM771.6 550.7h4.3v2.8h-4.3zM1210.8 413.1h4.7v4.1h-4.7zM1310.6 403.5h2.5v4.1h-2.5zM1010.1 843.2h4.6v3h-4.6zM1369.5 583.1h4.3v4.1h-4.3zM804.2 395.7h4.5v4.7h-4.5zM904 822h3.7v4.8h-3.7zM1025.1 865.3h4v4.3h-4zM1312.5 809.7h3.6v2.5h-3.6zM1247.7 467.7h5.1v3.6h-5.1zM1336 628.7h5.7v3.1h-5.7zM671.4 438.5h5.7v3.5h-5.7zM1049.3 471.7h4.1v2.5h-4.1zM677.5 495.4h2.9v2.2h-2.9zM752.3 427.4h3.9v5.5h-3.9zM1151.3 811.1h2.8v3.6h-2.8zM1230.5 692.2h2.6v4.7h-2.6zM989.6 612.4h2.2v4.2h-2.2zM775.5 545.7h5.6v4.9h-5.6zM970.3 439.5h5v3.3h-5zM1036.9 844.5h4.3v2.6h-4.3zM1174.6 405.3h3.1v2h-3.1zM1085.1 588.3h2.2v3.3h-2.2zM1127.8 414.8h3v4.1h-3zM1034.5 454.2h3v3.2h-3zM1111.7 597.9h3.3v2.5h-3.3zM1016.4 467.7h2.5v2.1h-2.5zM1074.8 456.2h2.2v4.8h-2.2zM1330.9 712h5.6v5.6h-5.6zM797.6 709.9h3.8v5.3h-3.8zM1334.9 824.6h3.8v2.5h-3.8zM1263.3 561.1h3.4v5.3h-3.4zM1192.5 766.9h5.7v5.9h-5.7zM956.7 487.7h4.9v3.8h-4.9zM1087.2 768.2h5.7v5.1h-5.7zM606.6 582.4h4v4.9h-4zM1439.6 669.9h3.8v2.9h-3.8zM1350.4 426.2h4.4v5.4h-4.4zM1211.5 635.8h5.9v4.9h-5.9zM615.9 504.7h5.7v2.7h-5.7zM1020.2 795.1h3.8v3.3h-3.8zM1050.1 454.9h5.9v3.1h-5.9zM1366.2 717.1h3.8v4.9h-3.8zM846.3 725.6h2.9v4.4h-2.9zM1093.5 599.6h5.5v4.9h-5.5zM856.2 799.9h5.9v2.6h-5.9zM906.7 405.7h5.3v4.6h-5.3zM880.2 483.4h5.9v5.3h-5.9zM1438.8 783.3h4.1v4.4h-4.1zM1427.2 759.2h3.1v4.7h-3.1zM1228 473.4h5.8v2.4h-5.8zM691.6 527.4h4v4.4h-4zM1428 786.1h5.1v4.7h-5.1zM1185.4 408.7h5v4.3h-5zM1152.9 662.6h2.1v4.3h-2.1zM1327.2 420.3h4.5v5.5h-4.5zM761.9 621.5h4.2v5.2h-4.2zM981.7 797.8h3.2v6h-3.2zM1244.3 576.8h5.1v5.1h-5.1zM1064.5 729.5h5v5.8h-5zM1315.8 678.6h4.8v3.3h-4.8zM796.6 763.6h2.3v3.5h-2.3zM1082.5 702.6h3.4v3.1h-3.4zM1125.3 806.1h5.8v4.1h-5.8zM1352.3 652.9h2.1v3.5h-2.1zM1031.8 448.6h5.8v3.7h-5.8zM1087.4 463h3.5v2.3h-3.5zM1146.2 792h2.1v2.2h-2.1zM754.3 531.1h5.3v5.5h-5.3zM1411 630.2h2.6v5.6h-2.6zM1145 647.8h3.2v2.7h-3.2zM977.2 600.2h2.7v3.2h-2.7zM713.8 540.8h3v3.5h-3zM1262.5 641.4h4.4v3.8h-4.4z" fill="#bdf3c6"/>
<path d="M594 530C605 530.5 637.3 532.2 660 533C682.7 533.8 706.7 535 730 535C753.3 535 778.3 534.2 800 533C821.7 531.8 840 528 860 528C880 528 910 532.2 920 533M594 631C602.5 634.7 624.3 647.2 645 653C665.7 658.8 696.6 662.7 718 666C739.4 669.3 749 669.7 773.5 673C798 676.3 838.9 681.4 865 686C891.1 690.6 919.2 698.2 930 700.7M920 857C932.3 847.8 969.3 821.2 994 801.5C1018.7 781.8 1053.8 749.9 1068 738.5C1082.2 727.1 1062.6 732.4 1079.3 733C1096 733.6 1151.3 738.2 1168 742.2C1184.7 746.2 1178 743.4 1179.3 757C1180.6 770.6 1175 803.9 1175.6 823.7C1176.2 843.5 1181.8 867 1183 875.6M990 700C998.3 703.3 1025.2 714.5 1040 720C1054.8 725.5 1072.5 730.8 1079 733" fill="none" stroke="#8a8a8a" stroke-width="2.2"/>
<path d="M594 530C605 530.5 637.3 532.2 660 533C682.7 533.8 706.7 535 730 535C753.3 535 778.3 534.2 800 533C821.7 531.8 840 528 860 528C880 528 910 532.2 920 533M594 631C602.5 634.7 624.3 647.2 645 653C665.7 658.8 696.6 662.7 718 666C739.4 669.3 749 669.7 773.5 673C798 676.3 838.9 681.4 865 686C891.1 690.6 919.2 698.2 930 700.7M920 857C932.3 847.8 969.3 821.2 994 801.5C1018.7 781.8 1053.8 749.9 1068 738.5C1082.2 727.1 1062.6 732.4 1079.3 733C1096 733.6 1151.3 738.2 1168 742.2C1184.7 746.2 1178 743.4 1179.3 757C1180.6 770.6 1175 803.9 1175.6 823.7C1176.2 843.5 1181.8 867 1183 875.6M990 700C998.3 703.3 1025.2 714.5 1040 720C1054.8 725.5 1072.5 730.8 1079 733" fill="none" stroke="#f0f0f0" stroke-width="1" stroke-dasharray="5 5"/>
<path d="M1203 385L1204 480" fill="none" stroke="#8a8a8a" stroke-width="1.2" stroke-dasharray="4 3"/>
<path d="M594 528L640 533L668 543" fill="none" stroke="#dc7a94" stroke-width="3.4"/>
<path d="M1101.5 419.4C1099.7 422.2 1091.3 424.9 1090.4 436C1089.5 447.1 1094.1 469.9 1095.9 486C1097.8 502.1 1100 516.9 1101.5 532.4C1103 547.9 1103.8 562.4 1105 578.7C1106.2 595 1107.6 623.1 1108.9 630C1110.2 636.9 1111.1 612.4 1112.6 620C1114.1 627.6 1116.2 657.1 1118 675.6C1119.8 694.1 1122.8 721.8 1123.7 731M1164.4 378.7C1164.7 385.8 1167.5 408 1166.3 421.3C1165.1 434.6 1156.1 446.9 1157 458.3C1157.9 469.7 1171.9 480.5 1171.9 489.8C1171.9 499.1 1160.4 503.7 1157 513.9C1153.6 524.1 1154 531.6 1151.5 551C1149 570.4 1145 609.2 1142.2 630C1139.4 650.8 1137 658.8 1134.8 675.6C1132.6 692.4 1130.2 721.8 1129.3 731M920 497C929.3 499.2 958.6 506.6 975.6 510C992.6 513.4 1009.6 510.8 1021.9 517.6C1034.2 524.4 1041.9 542.4 1049.6 551C1057.3 559.6 1064.9 566.3 1068 569.4M1270 439.8C1269.1 447.5 1267.8 470.6 1264.4 486C1261 501.4 1256.1 516.9 1249.6 532.4C1243.1 547.9 1229.6 562.4 1225.6 578.7C1221.6 595 1225.6 621.5 1225.6 630M1068 601C1083.5 601.3 1134.4 600.3 1160.7 602.8C1187 605.2 1207.4 612 1225.6 615.7C1243.8 619.4 1262.6 623.5 1270 625M959 588C982.5 587.3 1048.2 585.5 1100 584C1151.8 582.5 1241.7 579.6 1270 578.7M1306.3 438C1320.2 441.1 1366.5 451.6 1389.6 456.5C1412.7 461.4 1423.4 464.2 1445 467.6C1466.6 471 1504.8 473.8 1519.3 476.9C1533.8 480 1529.4 481.4 1532.2 486C1535 490.6 1535.4 501.5 1536 504.6M1454 385C1447.8 392.2 1427.7 416.1 1417 428C1406.3 439.9 1396.1 449.5 1389.6 456.5C1383.1 463.5 1379.9 467.8 1378 470M1260 580.6C1269.3 577.8 1294 571 1315.6 563.9C1337.2 556.8 1368 545.7 1389.6 538C1411.2 530.3 1429.6 523.5 1445 517.6C1460.4 511.7 1466.5 506.2 1482 502.8C1497.5 499.4 1516.5 498.6 1537.8 497C1559.1 495.4 1598 494.1 1610 493.5M1571 378.7C1568.5 384.2 1564.9 401.8 1556.3 412C1547.7 422.2 1527.6 429 1519.3 439.8C1511 450.6 1510.9 466.1 1506.3 476.9C1501.7 487.7 1494 500 1491.5 504.6M1269 580.6 L1269 630M1269 619.4 L1404.4 613.9M920 699.6C927.7 700.8 950.9 706.7 966.3 707C981.7 707.3 997.2 702.4 1012.6 701.5C1028 700.6 1043.5 705.5 1058.9 701.5C1074.3 697.5 1094.2 681.7 1105 677.4C1115.8 673.1 1120.6 675.9 1123.7 675.6M1058.9 701.5C1075.8 701.7 1124.8 702.2 1160 702.5C1195.2 702.8 1251.7 703.2 1270 703.3M1001.5 633C1021.9 632.7 1091 630.1 1123.7 631C1156.4 631.9 1173.4 636.3 1197.8 638.5C1222.2 640.7 1258 643.1 1270 644M1083 716.3C1088.2 719.1 1098.4 729.9 1114.4 733C1130.5 736.1 1153.4 735.4 1179.3 734.8C1205.2 734.2 1254.9 730.2 1270 729.3M1179.3 638.5C1179.3 649 1179.9 685.5 1179.3 701.5C1178.7 717.5 1177.5 720.6 1175.6 734.8C1173.7 749 1169.9 770.3 1168 786.7C1166.1 803.1 1164.4 818.2 1164.4 833C1164.4 847.8 1167.4 868.5 1168 875.6M1208.9 620C1210.1 635.4 1213.5 691 1216.3 712.6C1219.1 734.2 1222.5 734.2 1225.6 749.6C1228.7 765 1232.6 784 1234.8 805C1237 826 1237.9 863.8 1238.5 875.6M1244 657C1244.3 661 1247.5 673.3 1246 681C1244.5 688.7 1239.8 694.3 1234.8 703.3C1229.8 712.3 1219.4 729.5 1216.3 734.8M920 731C927.7 729.8 958 727.4 966.3 723.7C974.6 720 969.4 711.4 970 708.9M938.5 857C939.4 859.2 934.8 869.4 944 870C953.2 870.6 977.9 866.9 994 860.7C1010.1 854.5 1025 836.7 1040.4 833C1055.9 829.3 1074.1 837.6 1086.7 838.5C1099.3 839.4 1111.4 838.5 1116.3 838.5M1260 712.6C1264.6 713.2 1279.1 712.6 1287.8 716.3C1296.5 720 1304.2 727.1 1311.9 734.8C1319.6 742.5 1326.6 753.3 1334 762.6C1341.4 771.9 1350.1 781.5 1356.3 790.4C1362.5 799.3 1368.5 812 1371 816.3M1267.4 620C1266.8 632.3 1264.6 666.8 1263.7 694C1262.8 721.2 1262.2 768.2 1261.9 783M619.4 671.4C617.5 681.2 610.8 711.1 608.3 730C605.8 748.9 601.6 766.7 604.7 785C607.8 803.3 621.2 825 626.7 840C632.2 855 635.9 869.2 637.7 875M751.5 711.7C753.3 712.9 760.4 714.4 762.5 719C764.6 723.6 760.9 732.6 764.3 739.3C767.7 746 775.7 754.8 782.7 759.4C789.7 764 795.8 767.1 806.5 766.8C817.2 766.5 832.5 760.7 846.9 757.6C861.3 754.5 878.9 750.2 892.8 748.4C906.6 746.6 923.8 746.9 930 746.6M867 675C867.3 684.2 867.4 711.7 868.9 730C870.4 748.3 875 769.1 876.2 785C877.4 800.9 876.2 818.8 876.2 825.5M700 470C696.7 481.7 684.7 518.3 680 540C675.3 561.7 675.3 583.3 672 600C668.7 616.7 662 633.3 660 640M735 465C736.7 474.2 742.5 504.2 745 520C747.5 535.8 750 545 750 560C750 575 747.5 596.7 745 610C742.5 623.3 736.7 635 735 640M806 425C811.7 428.3 830 434.2 840 445C850 455.8 859.3 480.8 866 490C872.7 499.2 877.7 498.3 880 500M1101.5 419.4 L1120 400" fill="none" stroke="#dfa868" stroke-width="3.8" stroke-linecap="round"/>
<path d="M1101.5 419.4C1099.7 422.2 1091.3 424.9 1090.4 436C1089.5 447.1 1094.1 469.9 1095.9 486C1097.8 502.1 1100 516.9 1101.5 532.4C1103 547.9 1103.8 562.4 1105 578.7C1106.2 595 1107.6 623.1 1108.9 630C1110.2 636.9 1111.1 612.4 1112.6 620C1114.1 627.6 1116.2 657.1 1118 675.6C1119.8 694.1 1122.8 721.8 1123.7 731M1164.4 378.7C1164.7 385.8 1167.5 408 1166.3 421.3C1165.1 434.6 1156.1 446.9 1157 458.3C1157.9 469.7 1171.9 480.5 1171.9 489.8C1171.9 499.1 1160.4 503.7 1157 513.9C1153.6 524.1 1154 531.6 1151.5 551C1149 570.4 1145 609.2 1142.2 630C1139.4 650.8 1137 658.8 1134.8 675.6C1132.6 692.4 1130.2 721.8 1129.3 731M920 497C929.3 499.2 958.6 506.6 975.6 510C992.6 513.4 1009.6 510.8 1021.9 517.6C1034.2 524.4 1041.9 542.4 1049.6 551C1057.3 559.6 1064.9 566.3 1068 569.4M1270 439.8C1269.1 447.5 1267.8 470.6 1264.4 486C1261 501.4 1256.1 516.9 1249.6 532.4C1243.1 547.9 1229.6 562.4 1225.6 578.7C1221.6 595 1225.6 621.5 1225.6 630M1068 601C1083.5 601.3 1134.4 600.3 1160.7 602.8C1187 605.2 1207.4 612 1225.6 615.7C1243.8 619.4 1262.6 623.5 1270 625M959 588C982.5 587.3 1048.2 585.5 1100 584C1151.8 582.5 1241.7 579.6 1270 578.7M1306.3 438C1320.2 441.1 1366.5 451.6 1389.6 456.5C1412.7 461.4 1423.4 464.2 1445 467.6C1466.6 471 1504.8 473.8 1519.3 476.9C1533.8 480 1529.4 481.4 1532.2 486C1535 490.6 1535.4 501.5 1536 504.6M1454 385C1447.8 392.2 1427.7 416.1 1417 428C1406.3 439.9 1396.1 449.5 1389.6 456.5C1383.1 463.5 1379.9 467.8 1378 470M1260 580.6C1269.3 577.8 1294 571 1315.6 563.9C1337.2 556.8 1368 545.7 1389.6 538C1411.2 530.3 1429.6 523.5 1445 517.6C1460.4 511.7 1466.5 506.2 1482 502.8C1497.5 499.4 1516.5 498.6 1537.8 497C1559.1 495.4 1598 494.1 1610 493.5M1571 378.7C1568.5 384.2 1564.9 401.8 1556.3 412C1547.7 422.2 1527.6 429 1519.3 439.8C1511 450.6 1510.9 466.1 1506.3 476.9C1501.7 487.7 1494 500 1491.5 504.6M1269 580.6 L1269 630M1269 619.4 L1404.4 613.9M920 699.6C927.7 700.8 950.9 706.7 966.3 707C981.7 707.3 997.2 702.4 1012.6 701.5C1028 700.6 1043.5 705.5 1058.9 701.5C1074.3 697.5 1094.2 681.7 1105 677.4C1115.8 673.1 1120.6 675.9 1123.7 675.6M1058.9 701.5C1075.8 701.7 1124.8 702.2 1160 702.5C1195.2 702.8 1251.7 703.2 1270 703.3M1001.5 633C1021.9 632.7 1091 630.1 1123.7 631C1156.4 631.9 1173.4 636.3 1197.8 638.5C1222.2 640.7 1258 643.1 1270 644M1083 716.3C1088.2 719.1 1098.4 729.9 1114.4 733C1130.5 736.1 1153.4 735.4 1179.3 734.8C1205.2 734.2 1254.9 730.2 1270 729.3M1179.3 638.5C1179.3 649 1179.9 685.5 1179.3 701.5C1178.7 717.5 1177.5 720.6 1175.6 734.8C1173.7 749 1169.9 770.3 1168 786.7C1166.1 803.1 1164.4 818.2 1164.4 833C1164.4 847.8 1167.4 868.5 1168 875.6M1208.9 620C1210.1 635.4 1213.5 691 1216.3 712.6C1219.1 734.2 1222.5 734.2 1225.6 749.6C1228.7 765 1232.6 784 1234.8 805C1237 826 1237.9 863.8 1238.5 875.6M1244 657C1244.3 661 1247.5 673.3 1246 681C1244.5 688.7 1239.8 694.3 1234.8 703.3C1229.8 712.3 1219.4 729.5 1216.3 734.8M920 731C927.7 729.8 958 727.4 966.3 723.7C974.6 720 969.4 711.4 970 708.9M938.5 857C939.4 859.2 934.8 869.4 944 870C953.2 870.6 977.9 866.9 994 860.7C1010.1 854.5 1025 836.7 1040.4 833C1055.9 829.3 1074.1 837.6 1086.7 838.5C1099.3 839.4 1111.4 838.5 1116.3 838.5M1260 712.6C1264.6 713.2 1279.1 712.6 1287.8 716.3C1296.5 720 1304.2 727.1 1311.9 734.8C1319.6 742.5 1326.6 753.3 1334 762.6C1341.4 771.9 1350.1 781.5 1356.3 790.4C1362.5 799.3 1368.5 812 1371 816.3M1267.4 620C1266.8 632.3 1264.6 666.8 1263.7 694C1262.8 721.2 1262.2 768.2 1261.9 783M619.4 671.4C617.5 681.2 610.8 711.1 608.3 730C605.8 748.9 601.6 766.7 604.7 785C607.8 803.3 621.2 825 626.7 840C632.2 855 635.9 869.2 637.7 875M751.5 711.7C753.3 712.9 760.4 714.4 762.5 719C764.6 723.6 760.9 732.6 764.3 739.3C767.7 746 775.7 754.8 782.7 759.4C789.7 764 795.8 767.1 806.5 766.8C817.2 766.5 832.5 760.7 846.9 757.6C861.3 754.5 878.9 750.2 892.8 748.4C906.6 746.6 923.8 746.9 930 746.6M867 675C867.3 684.2 867.4 711.7 868.9 730C870.4 748.3 875 769.1 876.2 785C877.4 800.9 876.2 818.8 876.2 825.5M700 470C696.7 481.7 684.7 518.3 680 540C675.3 561.7 675.3 583.3 672 600C668.7 616.7 662 633.3 660 640M735 465C736.7 474.2 742.5 504.2 745 520C747.5 535.8 750 545 750 560C750 575 747.5 596.7 745 610C742.5 623.3 736.7 635 735 640M806 425C811.7 428.3 830 434.2 840 445C850 455.8 859.3 480.8 866 490C872.7 499.2 877.7 498.3 880 500M1101.5 419.4 L1120 400" fill="none" stroke="#fbcf98" stroke-width="2.8" stroke-linecap="round"/>
<path d="M593.6 382C611 381.7 672.5 379.1 698 380C723.5 380.9 733.1 385.1 746.6 387.6C760.1 390.1 748.4 392.7 779 394.8C809.6 396.9 904.8 399.1 930 400M594 447C601.7 445.8 625.7 441.2 640 440C654.3 438.8 669.2 438.7 680 440C690.8 441.3 695.8 446.7 705 448C714.2 449.3 725.8 449.3 735 448C744.2 446.7 750.8 439.7 760 440C769.2 440.3 783.3 445.8 790 450C796.7 454.2 793.3 461.7 800 465C806.7 468.3 818.3 470 830 470C841.7 470 853.3 469.2 870 465C886.7 460.8 920 448.3 930 445M708 378C707.7 389.5 706.7 421.7 706 447C705.3 472.3 704.2 511.2 704 530C703.8 548.8 707.3 548.3 705 560C702.7 571.7 696.7 588.3 690 600C683.3 611.7 672.5 622.2 665 630C657.5 637.8 648.3 644.2 645 647M680 533C688.8 533 713 533.5 733 533C753 532.5 782.2 531.3 800 530C817.8 528.7 826.7 525.3 840 525C853.3 524.7 865 525.5 880 528C895 530.5 918.3 534.7 930 540C941.7 545.3 946.5 553.3 950 560C953.5 566.7 950.8 576.7 951 580M594 535C601.7 537.2 622.3 543.5 640 548C657.7 552.5 680 556.7 700 562C720 567.3 738.3 575 760 580C781.7 585 801.7 590.3 830 592C858.3 593.7 913.3 590.3 930 590M827.6 380C827.8 391.2 827.9 429.8 828.5 447C829.1 464.2 829.6 471 831 483C832.4 495 835.7 513 836.6 519M892 380C890.8 388.2 887.3 414.8 885 429C882.7 443.2 881 450 878 465C875 480 869.4 504 867 519C864.6 534 862.9 546 863.6 555C864.3 564 870.4 567 871 573C871.6 579 867.7 588 867 591M593.7 620C602.2 624.6 624.2 640.5 645 647.5C665.8 654.5 695.4 658 718.4 662C741.4 666 758.3 669.6 782.7 671.4C807.1 673.2 842.1 673.1 865 673C887.9 672.9 907.5 673.2 920 671C932.5 668.8 934.2 665.2 940 660C945.8 654.8 952 650 955 640C958 630 957.5 606.7 958 600M639.5 656.7C640.1 661.2 639 674.2 643 684C647 693.8 650.8 704.7 663.4 715.4C676 726.1 701.6 738.9 718.4 748.4C735.2 757.9 742.9 761.6 764.3 772.3C785.7 783 827 802.6 846.9 812.7C866.8 822.8 869.8 821.6 883.6 832.8C897.5 844 922.3 872.1 930 880M920 402.8C929.3 403.3 954 404.1 975.6 405.6C997.2 407.1 1031.1 411.9 1049.6 412C1068.1 412.1 1071.3 407.9 1086.7 406.5C1102.1 405.1 1125 404 1142 403.7C1159 403.4 1179.2 403.6 1188.5 404.6C1197.8 405.7 1188.5 409.1 1197.8 410C1207 410.9 1232 410.6 1244 410C1256 409.4 1265.7 407.1 1270 406.5M920 447C924.6 446.1 938.5 442.8 947.8 441.7C957.1 440.6 964.8 439.8 975.6 440.7C986.4 441.6 1001.8 446.8 1012.6 447C1023.4 447.2 1028.1 444.1 1040.4 441.7C1052.8 439.3 1072.8 433 1086.7 432.4C1100.6 431.8 1112.9 438.6 1123.7 438C1134.5 437.4 1140.7 427.8 1151.5 428.7C1162.3 429.6 1176.2 441.6 1188.5 443.5C1200.8 445.4 1212 441.3 1225.6 439.8C1239.2 438.3 1262.6 435.2 1270 434.3M938.5 378.7C937.9 384.2 934.5 397.2 934.8 412C935.1 426.8 938.5 449.1 940.4 467.6C942.2 486.1 944.4 504.5 945.9 523C947.4 541.5 949 569.4 949.6 578.7M983 378.7C982.7 384.2 982.2 401.5 981 412C979.8 422.5 975.3 429.4 975.6 441.7C975.9 454 981.1 474 983 486C984.9 498 984.9 505.8 986.7 513.9C988.5 521.9 989.7 526.6 994 534.3C998.3 542 1008.9 551.2 1012.6 560.2C1016.3 569.2 1017.2 580.3 1016.3 588C1015.4 595.7 1009.5 599.5 1007 606.5C1004.5 613.5 1002.4 626.1 1001.5 630M944 491.7C950.8 492 974.9 494.4 984.8 493.5C994.7 492.6 994.3 487.9 1003.3 486C1012.2 484.1 1031.1 484.8 1038.5 482.4C1045.9 479.9 1046.2 477.5 1047.8 471.3C1049.3 465.1 1047.8 449.7 1047.8 445.4M1038.5 482.4C1034.2 487.6 1020 504.6 1012.6 513.9C1005.2 523.2 1004.5 533.1 994 538C983.5 542.9 960.4 543.5 949.6 543.5C938.8 543.5 932.7 538.9 929.3 538M1094 378.7C1092.8 384.2 1088.5 400.3 1086.7 412C1084.9 423.7 1083.6 436.7 1083 449C1082.4 461.3 1084.8 476.1 1083 486C1081.2 495.9 1074.4 499 1071.9 508.3C1069.4 517.6 1068.7 530 1068 541.7C1067.3 553.4 1067.3 564 1068 578.7C1068.7 593.4 1070.3 613.9 1071.9 630C1073.5 646.1 1076.2 655.7 1077.4 675.6C1078.6 695.5 1079 737.3 1079.3 749.6M1038.5 482.4C1045 485.2 1067.5 495.3 1077.4 499C1087.3 502.7 1091.6 504 1097.8 504.6C1104 505.2 1111.6 505.9 1114.4 502.8C1117.2 499.7 1110.4 495 1114.4 486C1118.4 477 1134.5 456.7 1138.5 449C1142.5 441.3 1138.5 441.3 1138.5 439.8M1190.4 378.7C1191 384.2 1192.8 400.3 1194 412C1195.2 423.7 1198.4 439.1 1197.8 449C1197.2 458.9 1189.8 463.6 1190.4 471.3C1191 479 1198.1 487.1 1201.5 495.4C1204.9 503.7 1209.2 517 1210.7 521.3M1225.6 378.7C1228.7 382.7 1242.5 394.1 1244 402.8C1245.5 411.5 1237.9 424.4 1234.8 430.6C1231.7 436.8 1227.1 438.3 1225.6 439.8M920 588 L942 588M955 596C955.7 601.7 957.1 619.8 959 630C960.9 640.2 965.1 652.5 966.3 657M1260 402.8C1264.6 401.2 1277 396.9 1287.8 393.5C1298.6 390.1 1310.9 384.9 1324.8 382.4C1338.7 379.9 1351 379 1371 378.7C1391 378.4 1429.5 378.8 1445 380.6C1460.5 382.5 1456 386.7 1463.7 389.8C1471.5 392.9 1467.1 394.4 1491.5 399C1515.9 403.6 1590.2 414.5 1610 417.6M1380.4 378.7C1380.4 382.7 1382 394.1 1380.4 402.8C1378.8 411.5 1371.3 421.4 1371 430.6C1370.7 439.9 1380 449.1 1378.5 458.3C1377 467.5 1370.9 477.7 1361.9 486C1353 494.3 1335 500.6 1324.8 508.3C1314.6 516 1305.7 520.7 1300.7 532.4C1295.7 544.1 1295.6 562.4 1295 578.7C1294.4 595 1295.1 617 1297 630C1298.9 643 1305.1 649.4 1306.3 657C1307.5 664.6 1302.2 669.4 1304.4 675.6C1306.6 681.8 1316.8 687.8 1319.3 694C1321.8 700.2 1320.8 705.8 1319.3 712.6C1317.8 719.4 1311.5 731.1 1310 734.8M1260 434.3C1267.7 434.9 1297 438.6 1306.3 438C1315.6 437.4 1312.5 439.9 1315.6 430.6C1318.7 421.3 1323.3 390.4 1324.8 382.4M1306.3 438C1304.8 442.9 1297.6 459.6 1297 467.6C1296.4 475.6 1305.7 478.3 1302.6 486C1299.5 493.7 1285.6 503.1 1278.5 513.9C1271.4 524.7 1263.1 544.8 1260 551M1524.8 378.7C1522.3 384.2 1517.1 398.7 1510 412C1502.9 425.3 1489.9 446 1482.2 458.3C1474.5 470.6 1471.4 479.8 1463.7 486C1456 492.2 1442.1 489.8 1435.9 495.4C1429.7 501 1426.7 511.1 1426.7 519.4C1426.7 527.7 1435.9 535.5 1435.9 545.4C1435.9 555.3 1431.4 567.6 1426.7 578.7C1422 589.8 1412 603.5 1408 612C1404 620.5 1403.8 619.4 1402.6 630C1401.4 640.6 1401.6 661.8 1400.7 675.6C1399.8 689.4 1399.5 698.7 1397 712.6C1394.5 726.5 1389.1 746.6 1386 759C1382.9 771.4 1380.4 777.8 1378.5 786.7C1376.6 795.6 1375.4 808.3 1374.8 812.6M920 673.7C924.6 671.2 940.1 661.7 947.8 658.9C955.5 656.1 961.7 653.3 966.3 657C970.9 660.7 973.1 675.4 975.6 681C978.1 686.6 981.9 685.8 981 690.4C980.1 695 970.9 700.6 970 708.9C969.1 717.2 972.2 728 975.6 740.4C979 752.8 986.1 771.6 990.4 783C994.7 794.4 997.8 802.1 1001.5 808.9C1005.2 815.7 1008.9 812.6 1012.6 823.7C1016.3 834.8 1021.9 867 1023.7 875.6M1079.3 749.6C1075 751.5 1058.5 754.5 1053.3 760.7C1048 766.9 1046.9 779.3 1047.8 786.7C1048.7 794.1 1053.4 800.7 1058.9 805C1064.4 809.3 1073.3 812.6 1081 812.6C1088.7 812.6 1099.7 809.9 1105 805C1110.3 800.1 1115.6 791.6 1112.6 783C1109.5 774.4 1092.2 758.9 1086.7 753.3C1081.2 747.7 1080.5 750.2 1079.3 749.6M1112.6 783C1115.1 780.5 1114.5 769.5 1127.4 768C1140.3 766.5 1166.2 771.5 1190 774C1213.8 776.5 1252.2 781.5 1270 783C1287.8 784.5 1287.9 780.8 1297 783C1306.1 785.2 1314 791.1 1324.8 796C1335.6 800.9 1353.6 809.2 1361.9 812.6C1370.2 816 1370.2 811.4 1374.8 816.3C1379.4 821.2 1384.1 832.3 1389.6 842.2C1395.1 852.1 1404.9 870 1408 875.6M920 860.7C926.2 856.1 943.4 841 957 833C970.6 825 987.9 819.7 1001.5 812.6C1015.1 805.5 1029.9 799 1038.5 790.4C1047.1 781.8 1050.8 765.7 1053.3 760.7M1105 805C1105.3 809.7 1105.4 825.2 1107 833C1108.6 840.8 1114.7 844.4 1114.4 851.5C1114.1 858.6 1106.6 871.6 1105 875.6M1244 679C1248.3 679.3 1258.1 678.5 1270 681C1281.9 683.5 1294.4 689.7 1315.6 694C1336.8 698.3 1383.4 704.8 1397 707M1319.3 797.8 L1319.3 875.6M1260 838.5C1264.6 839.1 1278.5 842.5 1287.8 842.2C1297.1 841.9 1306.3 841.3 1315.6 836.7C1324.8 832.1 1335.6 818.4 1343.3 814.4C1351 810.4 1358.8 812.9 1361.9 812.6M1260 842C1266.2 843.6 1287.7 847.5 1297 851.5C1306.3 855.5 1309.4 862.3 1315.6 866.3C1321.8 870.3 1330.9 874 1334 875.6M594 610C599.2 615 617.4 632.2 625 640C632.6 647.8 637.1 653.9 639.5 656.7" fill="none" stroke="#dd8a76" stroke-width="4" stroke-linecap="round"/>
<path d="M593.6 382C611 381.7 672.5 379.1 698 380C723.5 380.9 733.1 385.1 746.6 387.6C760.1 390.1 748.4 392.7 779 394.8C809.6 396.9 904.8 399.1 930 400M594 447C601.7 445.8 625.7 441.2 640 440C654.3 438.8 669.2 438.7 680 440C690.8 441.3 695.8 446.7 705 448C714.2 449.3 725.8 449.3 735 448C744.2 446.7 750.8 439.7 760 440C769.2 440.3 783.3 445.8 790 450C796.7 454.2 793.3 461.7 800 465C806.7 468.3 818.3 470 830 470C841.7 470 853.3 469.2 870 465C886.7 460.8 920 448.3 930 445M708 378C707.7 389.5 706.7 421.7 706 447C705.3 472.3 704.2 511.2 704 530C703.8 548.8 707.3 548.3 705 560C702.7 571.7 696.7 588.3 690 600C683.3 611.7 672.5 622.2 665 630C657.5 637.8 648.3 644.2 645 647M680 533C688.8 533 713 533.5 733 533C753 532.5 782.2 531.3 800 530C817.8 528.7 826.7 525.3 840 525C853.3 524.7 865 525.5 880 528C895 530.5 918.3 534.7 930 540C941.7 545.3 946.5 553.3 950 560C953.5 566.7 950.8 576.7 951 580M594 535C601.7 537.2 622.3 543.5 640 548C657.7 552.5 680 556.7 700 562C720 567.3 738.3 575 760 580C781.7 585 801.7 590.3 830 592C858.3 593.7 913.3 590.3 930 590M827.6 380C827.8 391.2 827.9 429.8 828.5 447C829.1 464.2 829.6 471 831 483C832.4 495 835.7 513 836.6 519M892 380C890.8 388.2 887.3 414.8 885 429C882.7 443.2 881 450 878 465C875 480 869.4 504 867 519C864.6 534 862.9 546 863.6 555C864.3 564 870.4 567 871 573C871.6 579 867.7 588 867 591M593.7 620C602.2 624.6 624.2 640.5 645 647.5C665.8 654.5 695.4 658 718.4 662C741.4 666 758.3 669.6 782.7 671.4C807.1 673.2 842.1 673.1 865 673C887.9 672.9 907.5 673.2 920 671C932.5 668.8 934.2 665.2 940 660C945.8 654.8 952 650 955 640C958 630 957.5 606.7 958 600M639.5 656.7C640.1 661.2 639 674.2 643 684C647 693.8 650.8 704.7 663.4 715.4C676 726.1 701.6 738.9 718.4 748.4C735.2 757.9 742.9 761.6 764.3 772.3C785.7 783 827 802.6 846.9 812.7C866.8 822.8 869.8 821.6 883.6 832.8C897.5 844 922.3 872.1 930 880M920 402.8C929.3 403.3 954 404.1 975.6 405.6C997.2 407.1 1031.1 411.9 1049.6 412C1068.1 412.1 1071.3 407.9 1086.7 406.5C1102.1 405.1 1125 404 1142 403.7C1159 403.4 1179.2 403.6 1188.5 404.6C1197.8 405.7 1188.5 409.1 1197.8 410C1207 410.9 1232 410.6 1244 410C1256 409.4 1265.7 407.1 1270 406.5M920 447C924.6 446.1 938.5 442.8 947.8 441.7C957.1 440.6 964.8 439.8 975.6 440.7C986.4 441.6 1001.8 446.8 1012.6 447C1023.4 447.2 1028.1 444.1 1040.4 441.7C1052.8 439.3 1072.8 433 1086.7 432.4C1100.6 431.8 1112.9 438.6 1123.7 438C1134.5 437.4 1140.7 427.8 1151.5 428.7C1162.3 429.6 1176.2 441.6 1188.5 443.5C1200.8 445.4 1212 441.3 1225.6 439.8C1239.2 438.3 1262.6 435.2 1270 434.3M938.5 378.7C937.9 384.2 934.5 397.2 934.8 412C935.1 426.8 938.5 449.1 940.4 467.6C942.2 486.1 944.4 504.5 945.9 523C947.4 541.5 949 569.4 949.6 578.7M983 378.7C982.7 384.2 982.2 401.5 981 412C979.8 422.5 975.3 429.4 975.6 441.7C975.9 454 981.1 474 983 486C984.9 498 984.9 505.8 986.7 513.9C988.5 521.9 989.7 526.6 994 534.3C998.3 542 1008.9 551.2 1012.6 560.2C1016.3 569.2 1017.2 580.3 1016.3 588C1015.4 595.7 1009.5 599.5 1007 606.5C1004.5 613.5 1002.4 626.1 1001.5 630M944 491.7C950.8 492 974.9 494.4 984.8 493.5C994.7 492.6 994.3 487.9 1003.3 486C1012.2 484.1 1031.1 484.8 1038.5 482.4C1045.9 479.9 1046.2 477.5 1047.8 471.3C1049.3 465.1 1047.8 449.7 1047.8 445.4M1038.5 482.4C1034.2 487.6 1020 504.6 1012.6 513.9C1005.2 523.2 1004.5 533.1 994 538C983.5 542.9 960.4 543.5 949.6 543.5C938.8 543.5 932.7 538.9 929.3 538M1094 378.7C1092.8 384.2 1088.5 400.3 1086.7 412C1084.9 423.7 1083.6 436.7 1083 449C1082.4 461.3 1084.8 476.1 1083 486C1081.2 495.9 1074.4 499 1071.9 508.3C1069.4 517.6 1068.7 530 1068 541.7C1067.3 553.4 1067.3 564 1068 578.7C1068.7 593.4 1070.3 613.9 1071.9 630C1073.5 646.1 1076.2 655.7 1077.4 675.6C1078.6 695.5 1079 737.3 1079.3 749.6M1038.5 482.4C1045 485.2 1067.5 495.3 1077.4 499C1087.3 502.7 1091.6 504 1097.8 504.6C1104 505.2 1111.6 505.9 1114.4 502.8C1117.2 499.7 1110.4 495 1114.4 486C1118.4 477 1134.5 456.7 1138.5 449C1142.5 441.3 1138.5 441.3 1138.5 439.8M1190.4 378.7C1191 384.2 1192.8 400.3 1194 412C1195.2 423.7 1198.4 439.1 1197.8 449C1197.2 458.9 1189.8 463.6 1190.4 471.3C1191 479 1198.1 487.1 1201.5 495.4C1204.9 503.7 1209.2 517 1210.7 521.3M1225.6 378.7C1228.7 382.7 1242.5 394.1 1244 402.8C1245.5 411.5 1237.9 424.4 1234.8 430.6C1231.7 436.8 1227.1 438.3 1225.6 439.8M920 588 L942 588M955 596C955.7 601.7 957.1 619.8 959 630C960.9 640.2 965.1 652.5 966.3 657M1260 402.8C1264.6 401.2 1277 396.9 1287.8 393.5C1298.6 390.1 1310.9 384.9 1324.8 382.4C1338.7 379.9 1351 379 1371 378.7C1391 378.4 1429.5 378.8 1445 380.6C1460.5 382.5 1456 386.7 1463.7 389.8C1471.5 392.9 1467.1 394.4 1491.5 399C1515.9 403.6 1590.2 414.5 1610 417.6M1380.4 378.7C1380.4 382.7 1382 394.1 1380.4 402.8C1378.8 411.5 1371.3 421.4 1371 430.6C1370.7 439.9 1380 449.1 1378.5 458.3C1377 467.5 1370.9 477.7 1361.9 486C1353 494.3 1335 500.6 1324.8 508.3C1314.6 516 1305.7 520.7 1300.7 532.4C1295.7 544.1 1295.6 562.4 1295 578.7C1294.4 595 1295.1 617 1297 630C1298.9 643 1305.1 649.4 1306.3 657C1307.5 664.6 1302.2 669.4 1304.4 675.6C1306.6 681.8 1316.8 687.8 1319.3 694C1321.8 700.2 1320.8 705.8 1319.3 712.6C1317.8 719.4 1311.5 731.1 1310 734.8M1260 434.3C1267.7 434.9 1297 438.6 1306.3 438C1315.6 437.4 1312.5 439.9 1315.6 430.6C1318.7 421.3 1323.3 390.4 1324.8 382.4M1306.3 438C1304.8 442.9 1297.6 459.6 1297 467.6C1296.4 475.6 1305.7 478.3 1302.6 486C1299.5 493.7 1285.6 503.1 1278.5 513.9C1271.4 524.7 1263.1 544.8 1260 551M1524.8 378.7C1522.3 384.2 1517.1 398.7 1510 412C1502.9 425.3 1489.9 446 1482.2 458.3C1474.5 470.6 1471.4 479.8 1463.7 486C1456 492.2 1442.1 489.8 1435.9 495.4C1429.7 501 1426.7 511.1 1426.7 519.4C1426.7 527.7 1435.9 535.5 1435.9 545.4C1435.9 555.3 1431.4 567.6 1426.7 578.7C1422 589.8 1412 603.5 1408 612C1404 620.5 1403.8 619.4 1402.6 630C1401.4 640.6 1401.6 661.8 1400.7 675.6C1399.8 689.4 1399.5 698.7 1397 712.6C1394.5 726.5 1389.1 746.6 1386 759C1382.9 771.4 1380.4 777.8 1378.5 786.7C1376.6 795.6 1375.4 808.3 1374.8 812.6M920 673.7C924.6 671.2 940.1 661.7 947.8 658.9C955.5 656.1 961.7 653.3 966.3 657C970.9 660.7 973.1 675.4 975.6 681C978.1 686.6 981.9 685.8 981 690.4C980.1 695 970.9 700.6 970 708.9C969.1 717.2 972.2 728 975.6 740.4C979 752.8 986.1 771.6 990.4 783C994.7 794.4 997.8 802.1 1001.5 808.9C1005.2 815.7 1008.9 812.6 1012.6 823.7C1016.3 834.8 1021.9 867 1023.7 875.6M1079.3 749.6C1075 751.5 1058.5 754.5 1053.3 760.7C1048 766.9 1046.9 779.3 1047.8 786.7C1048.7 794.1 1053.4 800.7 1058.9 805C1064.4 809.3 1073.3 812.6 1081 812.6C1088.7 812.6 1099.7 809.9 1105 805C1110.3 800.1 1115.6 791.6 1112.6 783C1109.5 774.4 1092.2 758.9 1086.7 753.3C1081.2 747.7 1080.5 750.2 1079.3 749.6M1112.6 783C1115.1 780.5 1114.5 769.5 1127.4 768C1140.3 766.5 1166.2 771.5 1190 774C1213.8 776.5 1252.2 781.5 1270 783C1287.8 784.5 1287.9 780.8 1297 783C1306.1 785.2 1314 791.1 1324.8 796C1335.6 800.9 1353.6 809.2 1361.9 812.6C1370.2 816 1370.2 811.4 1374.8 816.3C1379.4 821.2 1384.1 832.3 1389.6 842.2C1395.1 852.1 1404.9 870 1408 875.6M920 860.7C926.2 856.1 943.4 841 957 833C970.6 825 987.9 819.7 1001.5 812.6C1015.1 805.5 1029.9 799 1038.5 790.4C1047.1 781.8 1050.8 765.7 1053.3 760.7M1105 805C1105.3 809.7 1105.4 825.2 1107 833C1108.6 840.8 1114.7 844.4 1114.4 851.5C1114.1 858.6 1106.6 871.6 1105 875.6M1244 679C1248.3 679.3 1258.1 678.5 1270 681C1281.9 683.5 1294.4 689.7 1315.6 694C1336.8 698.3 1383.4 704.8 1397 707M1319.3 797.8 L1319.3 875.6M1260 838.5C1264.6 839.1 1278.5 842.5 1287.8 842.2C1297.1 841.9 1306.3 841.3 1315.6 836.7C1324.8 832.1 1335.6 818.4 1343.3 814.4C1351 810.4 1358.8 812.9 1361.9 812.6M1260 842C1266.2 843.6 1287.7 847.5 1297 851.5C1306.3 855.5 1309.4 862.3 1315.6 866.3C1321.8 870.3 1330.9 874 1334 875.6M594 610C599.2 615 617.4 632.2 625 640C632.6 647.8 637.1 653.9 639.5 656.7" fill="none" stroke="#f6a78f" stroke-width="3" stroke-linecap="round"/>
<ellipse cx="950.5" cy="588" rx="8" ry="6.5" fill="#d6f3d4" stroke="#f3a996" stroke-width="3"/>
<path d="M613.9 875C625.2 869.2 660.6 853.5 681.7 840C702.8 826.5 726.7 806.2 740.5 794.3C754.3 782.4 760.3 772.9 764.3 768.6" fill="none" stroke="#d9708c" stroke-width="4.2"/><path d="M613.9 875C625.2 869.2 660.6 853.5 681.7 840C702.8 826.5 726.7 806.2 740.5 794.3C754.3 782.4 760.3 772.9 764.3 768.6" fill="none" stroke="#e892a2" stroke-width="3"/>
<path d="M643 684C646.4 689.2 650.8 704.7 663.4 715.4C676 726.1 701.6 738.9 718.4 748.4C735.2 757.9 742.9 761.6 764.3 772.3C785.7 783 827 802.6 846.9 812.7C866.8 822.8 869.8 821.6 883.6 832.8C897.5 844 922.3 872.1 930 880" fill="none" stroke="#b89dc0" stroke-width="1" stroke-dasharray="6 3 1 3" opacity=".9"/>
<path d="M1110 875C1115 870.8 1126 855.5 1140 850C1154 844.5 1178.2 841.8 1194 842C1209.8 842.2 1222.1 852.4 1234.8 851.5C1247.5 850.6 1264.1 839.2 1270 836.7" fill="none" stroke="#c9a3c9" stroke-width="2.4" opacity=".8"/>
<rect x="698" y="383.5" width="20" height="15" rx="2" fill="#f6d4cc" stroke="#c98d85" stroke-width=".8"/><text x="708" y="394.6" font-family="DejaVu Sans,Liberation Sans,sans-serif" font-size="10" fill="#7a2a20" text-anchor="middle">48</text>
<rect x="707" y="440.5" width="20" height="15" rx="2" fill="#f6d4cc" stroke="#c98d85" stroke-width=".8"/><text x="717" y="451.6" font-family="DejaVu Sans,Liberation Sans,sans-serif" font-size="10" fill="#7a2a20" text-anchor="middle">24</text>
<rect x="777" y="466.5" width="26" height="15" rx="2" fill="#f2f3d0" stroke="#b5b77d" stroke-width=".8"/><text x="790" y="477.6" font-family="DejaVu Sans,Liberation Sans,sans-serif" font-size="10" fill="#4d4f1a" text-anchor="middle">174</text>
<rect x="723" y="525.5" width="20" height="15" rx="2" fill="#f6d4cc" stroke="#c98d85" stroke-width=".8"/><text x="733" y="536.6" font-family="DejaVu Sans,Liberation Sans,sans-serif" font-size="10" fill="#7a2a20" text-anchor="middle">44</text>
<rect x="610" y="532.5" width="20" height="15" rx="2" fill="#f6d4cc" stroke="#c98d85" stroke-width=".8"/><text x="620" y="543.6" font-family="DejaVu Sans,Liberation Sans,sans-serif" font-size="10" fill="#7a2a20" text-anchor="middle">16</text>
<rect x="939" y="396.5" width="20" height="15" rx="2" fill="#f6d4cc" stroke="#c98d85" stroke-width=".8"/><text x="949" y="407.6" font-family="DejaVu Sans,Liberation Sans,sans-serif" font-size="10" fill="#7a2a20" text-anchor="middle">14</text>
<rect x="1124" y="426.5" width="20" height="15" rx="2" fill="#f6d4cc" stroke="#c98d85" stroke-width=".8"/><text x="1134" y="437.6" font-family="DejaVu Sans,Liberation Sans,sans-serif" font-size="10" fill="#7a2a20" text-anchor="middle">24</text>
<rect x="1370" y="373.5" width="20" height="15" rx="2" fill="#f6d4cc" stroke="#c98d85" stroke-width=".8"/><text x="1380" y="384.6" font-family="DejaVu Sans,Liberation Sans,sans-serif" font-size="10" fill="#7a2a20" text-anchor="middle">13</text>
<rect x="1512" y="415.5" width="26" height="15" rx="2" fill="#f8e3cc" stroke="#c9a77d" stroke-width=".8"/><text x="1525" y="426.6" font-family="DejaVu Sans,Liberation Sans,sans-serif" font-size="10" fill="#6b4a1c" text-anchor="middle">141</text>
<rect x="1447" y="511.5" width="20" height="15" rx="2" fill="#f6d4cc" stroke="#c98d85" stroke-width=".8"/><text x="1457" y="522.6" font-family="DejaVu Sans,Liberation Sans,sans-serif" font-size="10" fill="#7a2a20" text-anchor="middle">54</text>
<rect x="781" y="663.5" width="20" height="15" rx="2" fill="#f6d4cc" stroke="#c98d85" stroke-width=".8"/><text x="791" y="674.6" font-family="DejaVu Sans,Liberation Sans,sans-serif" font-size="10" fill="#7a2a20" text-anchor="middle">26</text>
<rect x="721" y="723.5" width="26" height="15" rx="2" fill="#f2f3d0" stroke="#b5b77d" stroke-width=".8"/><text x="734" y="734.6" font-family="DejaVu Sans,Liberation Sans,sans-serif" font-size="10" fill="#4d4f1a" text-anchor="middle">309</text>
<rect x="739" y="781.5" width="14" height="15" rx="2" fill="#f1c8d2" stroke="#c77d90" stroke-width=".8"/><text x="746" y="792.6" font-family="DejaVu Sans,Liberation Sans,sans-serif" font-size="10" fill="#7a1f3a" text-anchor="middle">5</text>
<rect x="898" y="733.5" width="26" height="15" rx="2" fill="#f8e3cc" stroke="#c9a77d" stroke-width=".8"/><text x="911" y="744.6" font-family="DejaVu Sans,Liberation Sans,sans-serif" font-size="10" fill="#6b4a1c" text-anchor="middle">386</text>
<rect x="873" y="825.5" width="20" height="15" rx="2" fill="#f6d4cc" stroke="#c98d85" stroke-width=".8"/><text x="883" y="836.6" font-family="DejaVu Sans,Liberation Sans,sans-serif" font-size="10" fill="#7a2a20" text-anchor="middle">48</text>
<rect x="1102" y="843.5" width="20" height="15" rx="2" fill="#f6d4cc" stroke="#c98d85" stroke-width=".8"/><text x="1112" y="854.6" font-family="DejaVu Sans,Liberation Sans,sans-serif" font-size="10" fill="#7a2a20" text-anchor="middle">37</text>
<rect x="1433" y="680.5" width="26" height="15" rx="2" fill="#f2f3d0" stroke="#b5b77d" stroke-width=".8"/><text x="1446" y="691.6" font-family="DejaVu Sans,Liberation Sans,sans-serif" font-size="10" fill="#4d4f1a" text-anchor="middle">171</text>
<rect x="1310" y="743.5" width="26" height="15" rx="2" fill="#f8e3cc" stroke="#c9a77d" stroke-width=".8"/><text x="1323" y="754.6" font-family="DejaVu Sans,Liberation Sans,sans-serif" font-size="10" fill="#6b4a1c" text-anchor="middle">178</text>
<rect x="1406" y="750.5" width="26" height="15" rx="2" fill="#f2f3d0" stroke="#b5b77d" stroke-width=".8"/><text x="1419" y="761.6" font-family="DejaVu Sans,Liberation Sans,sans-serif" font-size="10" fill="#4d4f1a" text-anchor="middle">271</text>
<rect x="1401" y="862.5" width="20" height="15" rx="2" fill="#f6d4cc" stroke="#c98d85" stroke-width=".8"/><text x="1411" y="873.6" font-family="DejaVu Sans,Liberation Sans,sans-serif" font-size="10" fill="#7a2a20" text-anchor="middle">11</text>
<text x="1151" y="497" font-family="DejaVu Sans,Vazirmatn,sans-serif" font-size="11.5" fill="#333" text-anchor="middle" direction="rtl" stroke="#fff" stroke-width="2" stroke-opacity=".7" paint-order="stroke">منطقه ۶</text>
<text x="1259" y="523" font-family="DejaVu Sans,Vazirmatn,sans-serif" font-size="11.5" fill="#333" text-anchor="middle" direction="rtl" stroke="#fff" stroke-width="2" stroke-opacity=".7" paint-order="stroke">منطقه ۷</text>
<text x="1378" y="497" font-family="DejaVu Sans,Vazirmatn,sans-serif" font-size="11.5" fill="#333" text-anchor="middle" direction="rtl" stroke="#fff" stroke-width="2" stroke-opacity=".7" paint-order="stroke">منطقه ۸</text>
<text x="1372" y="566" font-family="DejaVu Sans,Vazirmatn,sans-serif" font-size="11.5" fill="#333" text-anchor="middle" direction="rtl" stroke="#fff" stroke-width="2" stroke-opacity=".7" paint-order="stroke">منطقه ۱۳</text>
<text x="875" y="610" font-family="DejaVu Sans,Vazirmatn,sans-serif" font-size="11.5" fill="#333" text-anchor="middle" direction="rtl" stroke="#fff" stroke-width="2" stroke-opacity=".7" paint-order="stroke">منطقه ۹</text>
<text x="1034" y="639" font-family="DejaVu Sans,Vazirmatn,sans-serif" font-size="11.5" fill="#333" text-anchor="middle" direction="rtl" stroke="#fff" stroke-width="2" stroke-opacity=".7" paint-order="stroke">منطقه ۱۰</text>
<text x="1114" y="653" font-family="DejaVu Sans,Vazirmatn,sans-serif" font-size="11.5" fill="#333" text-anchor="middle" direction="rtl" stroke="#fff" stroke-width="2" stroke-opacity=".7" paint-order="stroke">منطقه ۱۱</text>
<text x="1367" y="670" font-family="DejaVu Sans,Vazirmatn,sans-serif" font-size="11.5" fill="#333" text-anchor="middle" direction="rtl" stroke="#fff" stroke-width="2" stroke-opacity=".7" paint-order="stroke">منطقه ۱۴</text>
<text x="1020" y="737" font-family="DejaVu Sans,Vazirmatn,sans-serif" font-size="11.5" fill="#333" text-anchor="middle" direction="rtl" stroke="#fff" stroke-width="2" stroke-opacity=".7" paint-order="stroke">منطقه ۱۷</text>
<text x="833" y="730" font-family="DejaVu Sans,Vazirmatn,sans-serif" font-size="11.5" fill="#333" text-anchor="middle" direction="rtl" stroke="#fff" stroke-width="2" stroke-opacity=".7" paint-order="stroke">منطقه ۱۸</text>
<text x="1159" y="803" font-family="DejaVu Sans,Vazirmatn,sans-serif" font-size="11.5" fill="#333" text-anchor="middle" direction="rtl" stroke="#fff" stroke-width="2" stroke-opacity=".7" paint-order="stroke">منطقه ۱۶</text>
<text x="1336" y="809" font-family="DejaVu Sans,Vazirmatn,sans-serif" font-size="11.5" fill="#333" text-anchor="middle" direction="rtl" stroke="#fff" stroke-width="2" stroke-opacity=".7" paint-order="stroke">منطقه ۱۵</text>
<text x="1040" y="828" font-family="DejaVu Sans,Vazirmatn,sans-serif" font-size="11.5" fill="#333" text-anchor="middle" direction="rtl" stroke="#fff" stroke-width="2" stroke-opacity=".7" paint-order="stroke">منطقه ۱۹</text>
<text x="714" y="613" font-family="DejaVu Sans,Vazirmatn,sans-serif" font-size="11.5" fill="#333" text-anchor="middle" direction="rtl" stroke="#fff" stroke-width="2" stroke-opacity=".7" paint-order="stroke">تهرانسر</text>
<text x="906" y="653" font-family="DejaVu Sans,Vazirmatn,sans-serif" font-size="11.5" fill="#333" text-anchor="middle" direction="rtl" stroke="#fff" stroke-width="2" stroke-opacity=".7" paint-order="stroke">پایگاه شکاری</text>
<text x="907" y="667" font-family="DejaVu Sans,Vazirmatn,sans-serif" font-size="11.5" fill="#333" text-anchor="middle" direction="rtl" stroke="#fff" stroke-width="2" stroke-opacity=".7" paint-order="stroke">مهرآباد</text>
<text x="1225" y="663" font-family="DejaVu Sans,Vazirmatn,sans-serif" font-size="11.5" fill="#333" text-anchor="middle" direction="rtl" stroke="#fff" stroke-width="2" stroke-opacity=".7" paint-order="stroke">منطقه ۱۲</text>
<text x="640" y="407" font-family="DejaVu Sans,Vazirmatn,sans-serif" font-size="11.5" fill="#333" text-anchor="middle" direction="rtl" stroke="#fff" stroke-width="2" stroke-opacity=".7" paint-order="stroke">منطقه ۲۲</text>
<text x="1101" y="632" font-family="DejaVu Sans,Vazirmatn,sans-serif" font-size="15" fill="#222" text-anchor="middle" direction="rtl" stroke="#fff" stroke-width="2" stroke-opacity=".7" paint-order="stroke">تهران</text>
<text x="612" y="809" font-family="DejaVu Sans,Vazirmatn,sans-serif" font-size="13" fill="#333" text-anchor="middle" direction="rtl" stroke="#fff" stroke-width="2" stroke-opacity=".7" paint-order="stroke">احمدآباد</text>
<text x="697" y="848" font-family="DejaVu Sans,Vazirmatn,sans-serif" font-size="10.5" fill="#444" text-anchor="middle" direction="rtl" stroke="#fff" stroke-width="2" stroke-opacity=".7" paint-order="stroke">فیروزبهرام</text>
<text x="762" y="866" font-family="DejaVu Sans,Vazirmatn,sans-serif" font-size="10.5" fill="#444" text-anchor="middle" direction="rtl" stroke="#fff" stroke-width="2" stroke-opacity=".7" paint-order="stroke">شمس آباد</text>
<text x="760" y="494" font-family="DejaVu Sans,Vazirmatn,sans-serif" font-size="10" fill="#3d8a4d" text-anchor="middle" direction="rtl" stroke="#fff" stroke-width="2" stroke-opacity=".7" paint-order="stroke">مجموعه</text>
<text x="760" y="506" font-family="DejaVu Sans,Vazirmatn,sans-serif" font-size="10" fill="#3d8a4d" text-anchor="middle" direction="rtl" stroke="#fff" stroke-width="2" stroke-opacity=".7" paint-order="stroke">ورزشی آزادی</text>
<text x="848" y="640" font-family="DejaVu Sans,Vazirmatn,sans-serif" font-size="10.5" fill="#8461c4" text-anchor="middle" direction="rtl" stroke="#fff" stroke-width="2" stroke-opacity=".7" paint-order="stroke">فرودگاه</text>
<text x="848" y="652" font-family="DejaVu Sans,Vazirmatn,sans-serif" font-size="10.5" fill="#8461c4" text-anchor="middle" direction="rtl" stroke="#fff" stroke-width="2" stroke-opacity=".7" paint-order="stroke">بین المللی</text>
<text x="848" y="664" font-family="DejaVu Sans,Vazirmatn,sans-serif" font-size="10.5" fill="#8461c4" text-anchor="middle" direction="rtl" stroke="#fff" stroke-width="2" stroke-opacity=".7" paint-order="stroke">مهرآباد تهران</text>
<text x="846" y="628" font-size="13" fill="#8461c4" text-anchor="middle" font-family="DejaVu Sans,sans-serif">✈</text>
<text x="1329" y="592" font-size="12" fill="#8461c4" text-anchor="middle" font-family="DejaVu Sans,sans-serif">✈</text>
<text font-family="DejaVu Sans,Vazirmatn,sans-serif" font-size="10" fill="#9a78a8" direction="rtl" transform="translate(820,797) rotate(27)" text-anchor="middle">بخش مرکزی شهرستان تهران</text>
<text font-family="DejaVu Sans,Vazirmatn,sans-serif" font-size="10" fill="#9a78a8" direction="rtl" transform="translate(632,700) rotate(72)" text-anchor="middle">بخش مرکزی شهریار</text>
<text font-family="DejaVu Sans,Vazirmatn,sans-serif" font-size="10" fill="#9a78a8" direction="rtl" transform="translate(1250,852) rotate(-18)" text-anchor="middle">شهرستان ری</text>
<path d="M1489 760l4.500-7 4.500 7zM1588 835l4.500-7 4.500 7z" fill="#c77d3e"/>
</g>
<rect x="1546" y="857" width="61" height="18" fill="#fff" opacity=".82"/>
<rect x="1551" y="862" width="12" height="4" fill="#4c7be1"/><rect x="1551" y="866" width="12" height="4" fill="#ffd500"/>
<text x="1566" y="871" font-family="Liberation Sans,sans-serif" font-size="12" fill="#0078a8">Leaflet</text>
</svg>
<div class="abs" style="left:604px;top:388px;width:34px;height:64px;border:2px solid rgba(0,0,0,.22);border-radius:5px;background:#fff"></div>
<div class="abs" style="left:606px;top:419.500px;width:30px;height:1px;background:#ccc"></div>
<svg class="abs" style="left:606px;top:390px" width="30" height="60" viewBox="0 0 30 60"><path d="M9.500 15H20.500M15 9.500V20.500M10 45H20" stroke="#000" stroke-width="2.200" fill="none"/></svg>
<svg class="abs" style="left:1199px;top:637px;overflow:visible" width="34" height="64" viewBox="-2 -1 34 64"><g transform="rotate(3 15 31)"><defs><radialGradient id="c1g" cx=".5" cy=".58" r=".55"><stop offset="0" stop-color="#e07472"/><stop offset=".45" stop-color="#d14a4a"/><stop offset="1" stop-color="#c22f33"/></radialGradient>
<linearGradient id="c1w" x1="0" y1="0" x2="1" y2="1"><stop offset="0" stop-color="#1c1c1e"/><stop offset=".6" stop-color="#0c0c0d"/><stop offset=".8" stop-color="#5a5f63"/><stop offset="1" stop-color="#222"/></linearGradient></defs>
<path d="M-.8 20.300l2.800-1v2.800l-2.800.6zM30.800 20.300l-2.800-1v2.800l2.800.6z" fill="#c0272d"/>
<path d="M15 .5C20.500.5 25 1.200 26.800 3.500 28.600 6 29 11 29 17L29 50C29 55 28.500 58.500 26.500 60.200 24.500 61.600 19.500 61.800 15 61.800S5.500 61.600 3.500 60.200C1.500 58.500 1 55 1 50L1 17C1 11 1.400 6 3.200 3.500 5 1.200 9.500.5 15 .5Z" fill="url(#c1g)"/>
<path d="M5.200 2.600C8 1.500 22 1.500 24.800 2.600" fill="none" stroke="#7a1518" stroke-width=".9"/>
<path d="M4.800 19.500C7 15.500 23 15.500 25.200 19.500L23.600 27.200C21 28.200 9 28.200 6.400 27.200Z" fill="url(#c1w)"/>
<path d="M4.600 50C6 47.300 24 47.300 25.400 50 24.800 53.500 22 54.600 15 54.600S5.200 53.500 4.600 50Z" fill="url(#c1w)"/>
<path d="M3 22.500L4.800 28.500C4.300 33 4.300 42 4.800 46L3 49.500C2.300 42 2.300 30 3 22.500ZM27 22.500L25.200 28.500C25.700 33 25.700 42 25.200 46L27 49.500C27.700 42 27.700 30 27 22.500Z" fill="#1a1012"/>
<path d="M2.600 35.500h2.300M25.100 35.500h2.300" stroke="#b02a2e" stroke-width="1.300"/></g></svg>

<!-- DEVICE PHOTOS -->

<!-- SIDEBAR -->
<div class="abs" style="left:1657px;top:150px;width:233px;height:80px;overflow:hidden"><div id="pillsh" class="abs"></div><div id="pill" class="abs"></div></div>
<div id="sb-top" class="abs"></div>
<div id="sb-sep" class="abs"></div>
<div id="sb-cap" class="abs fa">داشبورد</div>
<div id="pillc" class="abs"></div>
<div id="sb-bot" class="abs"></div>

<svg class="abs" style="left:1690px;top:10px" width="170" height="92" viewBox="1690 10 170 92" direction="ltr">
<defs>
<linearGradient id="lg1" x1="0" y1="0" x2="0" y2="1"><stop offset="0" stop-color="#a9c9ff"/><stop offset=".55" stop-color="#86a6f6"/><stop offset="1" stop-color="#6a78e6"/></linearGradient>
<linearGradient id="lg2" x1="0" y1="0" x2="0" y2="1"><stop offset="0" stop-color="#fff"/><stop offset=".8" stop-color="#fff"/><stop offset="1" stop-color="#cfd3e6"/></linearGradient>
</defs>
<clipPath id="lgc"><rect x="1735" y="19.500" width="90" height="43"/></clipPath><g fill="none" stroke-linecap="butt" clip-path="url(#lgc)">
<path d="M1740.8 19.5V62.5M1750.6 19.5V62.5M1740.8 43.8H1750.6" stroke="url(#lg1)" stroke-width="3"/>
<path d="M1809 19.5V62.5M1818.8 19.5V62.5M1809 43.8H1818.8" stroke="url(#lg1)" stroke-width="3"/>
<path d="M1766 19.5 L1779.3 40 L1792.6 19.5 Z" fill="#9fc0fb" stroke="none"/>
<path d="M1772.5 24 H1786 L1779.3 30 Z" fill="#fff" stroke="none"/>
<path d="M1769 62.5 V46 L1779.3 58 L1789.6 46 V62.5" stroke="url(#lg1)" stroke-width="3.2"/>
<path d="M1759.5 62.5 V22 L1779.3 48.5 L1799 22 V62.5" stroke="url(#lg2)" stroke-width="4.2" stroke-linejoin="miter"/>
</g>
<g fill="none" stroke="#fff" stroke-width="1.3">
<circle cx="1730" cy="30" r="1.8"/><circle cx="1730" cy="57.8" r="1.8"/>
<circle cx="1830.8" cy="30" r="1.9"/><circle cx="1829.5" cy="43.5" r="2.6" stroke-width="1.6"/><circle cx="1830.8" cy="57.6" r="1.9"/>
<path d="M1839 39.5 L1848 42.5 M1848 45.5 L1839.5 48.5" stroke-width="1.6"/>
</g>
<circle cx="1813.5" cy="28.4" r=".9" fill="#fff"/><circle cx="1813.5" cy="57.6" r=".9" fill="#fff"/>
<text x="1700" y="48.5" font-family="Liberation Mono,monospace" font-size="9.500" fill="#fff" stroke="#fff" stroke-width=".3" textLength="31" lengthAdjust="spacingAndGlyphs">Jo/C</text>
<text x="1723.4" y="85" font-family="Liberation Sans,sans-serif" font-size="20.2" fill="#fff" textLength="116.5" lengthAdjust="spacingAndGlyphs">MRHOSSEIN</text>
<path d="M1723.6 92.2H1750.4M1811 92.2H1839.7" stroke="#9db4f5" stroke-width="1.3"/>
<circle cx="1778.9" cy="92.2" r="1.4" fill="#fff"/>
</svg>

<div class="abs fa" style="right:58px;top:177.5px;font-size:13.8px;line-height:24px;color:#5e55c9;white-space:nowrap">داشبورد</div>
<svg class="abs" style="left:1850px;top:180px" width="19" height="19" viewBox="0 0 19 19" fill="none" stroke="#fff" stroke-width="1.7" stroke-linejoin="miter"><path d="M1.2 9.3 L9.5 2 L17.8 9.3"/><path d="M3.8 7.8V17.2H15.2V7.8"/><path d="M7.6 17.2V11.3H11.4V17.2"/></svg>
<div class="abs mi fa" style="top:234px">کاربران و دسترسی ها</div>
<div class="abs mi fa" style="top:282px">ردیاب GPS</div>
<div class="abs mi fa" style="top:330px">مدیریت فایل</div>
<div class="abs mi fa" style="top:378px">تنظیمات</div>
<svg class="abs chev" style="top:242px" viewBox="0 0 8 10"><path d="M5.5 1.5L2 5l3.5 3.5" fill="none" stroke="#aaa8c2" stroke-width="1.3"/></svg>
<svg class="abs chev" style="top:290px" viewBox="0 0 8 10"><path d="M5.5 1.5L2 5l3.5 3.5" fill="none" stroke="#aaa8c2" stroke-width="1.3"/></svg>
<svg class="abs chev" style="top:386px" viewBox="0 0 8 10"><path d="M5.5 1.5L2 5l3.5 3.5" fill="none" stroke="#aaa8c2" stroke-width="1.3"/></svg>
<!-- user icon -->
<svg class="abs" style="left:1850px;top:238px" width="20" height="20" viewBox="0 0 20 20" fill="none" stroke="#aaa8c2" stroke-width="1.2"><path d="M10 1.8c2.6 0 4.2 2 4.2 4.6 0 2.3-1.2 4.3-2.4 5.2 0 1.3 1 1.8 3 2.6 2 .8 3.6 1.6 4 3.6H1.200c.4-2 2-2.800 4-3.600 2-.8 3-1.300 3-2.600C7 10.700 5.800 8.700 5.800 6.400 5.800 3.800 7.400 1.800 10 1.800z"/></svg>
<!-- map icon -->
<svg class="abs" style="left:1850px;top:286px" width="20" height="20" viewBox="0 0 20 20" fill="none" stroke="#aaa8c2" stroke-width="1.2"><path d="M6.500 6.200 L1.500 6.200V16.700H6.500M6.500 6.200V16.700L12 18V11M12 18l5.500-1.300V6.200h-1.700"/><path d="M12 3c1.900 0 3.300 1.400 3.300 3.200 0 2-1.600 3.600-3.300 5.600-1.700-2-3.300-3.600-3.300-5.600C8.700 4.400 10.100 3 12 3z"/><circle cx="12" cy="6.300" r="1.100"/></svg>
<!-- file icon -->
<svg class="abs" style="left:1850px;top:334px" width="20" height="20" viewBox="0 0 20 20" fill="none" stroke="#aaa8c2" stroke-width="1.2"><path d="M7.500 5.500V2.300h7l3.700 3.700v9.500h-6.200"/><path d="M14.300 2.500v3.700h3.700"/><path d="M1.800 5.800h6.400l3.600 3.600v8.800H1.800z"/><path d="M8 6v3.600h3.600"/></svg>
<!-- gear icon -->
<svg class="abs" style="left:1850px;top:382px" width="20" height="20" viewBox="0 0 20 20" fill="none" stroke="#aaa8c2" stroke-width="1.2" stroke-linejoin="round"><circle cx="10" cy="10" r="2.400"/><path d="M8.700 1.800h2.600l.4 2.300 1.700.7 1.900-1.400 1.800 1.800-1.300 1.900.7 1.700 2.300.4v2.600l-2.300.4-.7 1.700 1.300 1.900-1.800 1.800-1.900-1.300-1.700.7-.4 2.300H8.700l-.4-2.300-1.700-.7-1.900 1.300-1.800-1.800 1.300-1.900-.7-1.700-2.300-.4V8.700l2.300-.4.7-1.700-1.300-1.900 1.800-1.800 1.900 1.400 1.700-.7z"/></svg>


<div id="lshade" class="abs"></div>

<!-- BOTTOM SECTION -->

<div id="strip" class="abs"></div>
<div id="bwrap" class="abs"></div>
<div id="bcard" class="abs"></div>
<div id="bgrad" class="abs"></div>
<div id="bdiv" class="abs"></div>
<div id="bt" class="abs fa">آخرین وضعیت دستگاه : <span style="display:inline-block;width:25px"></span> تست خودرو</div>
<svg class="abs" style="left:1678px;top:937px;overflow:visible" width="27" height="56" viewBox="-2 -1 34 64" preserveAspectRatio="none"><defs><radialGradient id="c2g" cx=".5" cy=".58" r=".55"><stop offset="0" stop-color="#e07472"/><stop offset=".45" stop-color="#d14a4a"/><stop offset="1" stop-color="#c22f33"/></radialGradient>
<linearGradient id="c2w" x1="0" y1="0" x2="1" y2="1"><stop offset="0" stop-color="#1c1c1e"/><stop offset=".6" stop-color="#0c0c0d"/><stop offset=".8" stop-color="#5a5f63"/><stop offset="1" stop-color="#222"/></linearGradient></defs>
<path d="M-.8 20.300l2.800-1v2.800l-2.800.6zM30.800 20.300l-2.800-1v2.800l2.800.6z" fill="#c0272d"/>
<path d="M15 .5C20.500.5 25 1.200 26.800 3.500 28.600 6 29 11 29 17L29 50C29 55 28.500 58.500 26.500 60.200 24.500 61.600 19.500 61.800 15 61.800S5.500 61.600 3.500 60.200C1.500 58.500 1 55 1 50L1 17C1 11 1.400 6 3.200 3.500 5 1.200 9.500.5 15 .5Z" fill="url(#c2g)"/>
<path d="M5.200 2.600C8 1.500 22 1.500 24.800 2.600" fill="none" stroke="#7a1518" stroke-width=".9"/>
<path d="M4.800 19.500C7 15.500 23 15.500 25.200 19.500L23.600 27.200C21 28.200 9 28.200 6.400 27.200Z" fill="url(#c2w)"/>
<path d="M4.600 50C6 47.300 24 47.300 25.400 50 24.800 53.500 22 54.600 15 54.600S5.200 53.500 4.600 50Z" fill="url(#c2w)"/>
<path d="M3 22.500L4.800 28.500C4.300 33 4.300 42 4.800 46L3 49.500C2.300 42 2.300 30 3 22.500ZM27 22.500L25.200 28.500C25.700 33 25.700 42 25.200 46L27 49.500C27.700 42 27.700 30 27 22.500Z" fill="#1a1012"/>
<path d="M2.600 35.500h2.300M25.100 35.500h2.300" stroke="#b02a2e" stroke-width="1.300"/></svg>
<div id="bd" class="abs fa">در این بخش شما آخرین وضعیت دستگاه را مشاهده میکنید .این وضعیت هر ۱۰ ثانیه بروزرسانی می شود.</div>

<div class="abs lb fa" style="right:52px;top:1059px">آخرین بروزرسانی</div>
<div class="abs lb fa" style="right:52px;top:1103px">مسافت طی شده</div>
<div class="abs vl fa" style="right:327px;top:1056.5px">۲۳ فروردین ۱۴۰۴ | ۱۲:۰۱:۱۱</div>
<div class="abs vl fa" style="right:327px;top:1100.5px;font-weight:normal;color:#555">---</div>

<div class="abs lb fa" style="right:670px;top:1059px">وضعیت استارت خودرو</div>
<div class="abs lb fa" style="right:670px;top:1103px">اتصال به برق</div>
<div class="abs vl fa" style="right:945px;top:1056.5px"><svg class="ck" viewBox="0 0 17 12"><path d="M1.5 6.2 L6 10.3 L15.5 1.5" fill="none" stroke="#17a84f" stroke-width="2.6"/></svg>روشن</div>
<div class="abs vl fa" style="right:945px;top:1100.5px"><svg class="ck" viewBox="0 0 17 12"><path d="M1.5 6.2 L6 10.3 L15.5 1.5" fill="none" stroke="#17a84f" stroke-width="2.6"/></svg>دارد</div>

<div class="abs lb fa" style="right:1288px;top:1059px">وضعیت جی پی اس</div>
<div class="abs lb fa" style="right:1288px;top:1103px">وضعیت کلی :</div>
<div class="abs vl fa" style="right:1563px;top:1056.5px"><svg class="ck" viewBox="0 0 17 12"><path d="M1.5 6.2 L6 10.3 L15.5 1.5" fill="none" stroke="#17a84f" stroke-width="2.6"/></svg>روشن</div>
<div class="abs vl fa" style="right:1563px;top:1100.5px;font-size:15px">همه چیز رو به راهه</div>
<svg class="abs" style="left:1842px;top:1057px" width="31" height="31" viewBox="1842 1057 31 31"><defs><clipPath id="cc1"><circle cx="1857.500" cy="1072.200" r="14.800"/></clipPath></defs><g clip-path="url(#cc1)"><rect x="1842" y="1057" width="31" height="31" fill="#18d8f0"/><rect x="1842" y="1080.500" width="31" height="8" fill="#f95a8e"/><rect x="1847.200" y="1064.200" width="20.400" height="16.300" fill="#fff"/><path d="M1847.200 1065.600h20.400" stroke="#9bb8f0" stroke-width="1.400" stroke-dasharray="1.600 1.400"/><path d="M1849 1070.300h11.200M1849 1073.300h11.200M1849 1076.300h11.200M1861.500 1070.300h4.600" stroke="#f5b21a" stroke-width="2.100" stroke-dasharray="2.200 .800"/><rect x="1861.300" y="1072.300" width="5.400" height="5.400" fill="#f060a8"/><circle cx="1864" cy="1075" r="2.100" fill="#2a3fb0"/></g></svg>
<svg class="abs" style="left:1841px;top:1103px" width="34" height="26" viewBox="1841 1103 34 26"><path d="M1848.800 1126.300C1846.500 1121 1843 1118 1843 1113.600a5.900 5.900 0 0 1 11.800 0C1854.800 1118 1851.200 1121 1848.800 1126.300Z" fill="#f00" stroke="#000" stroke-width="1"/><circle cx="1848.800" cy="1113.300" r="2.900" fill="#fff" stroke="#000" stroke-width=".9"/><path d="M1849.500 1126.200C1858 1126 1872 1125 1872.500 1118.500 1872.500 1113 1863 1116 1860 1113.500 1858.500 1111.500 1861 1110.500 1864 1110.800" fill="none" stroke="#222" stroke-width=".9" stroke-dasharray="1.800 1.200"/><path d="M1865.300 1110.300c-1.200-2-2.400-3.200-2.400-4.600a2.400 2.400 0 0 1 4.800 0c0 1.400-1.200 2.600-2.400 4.600z" fill="#f00" stroke="#a00" stroke-width=".4"/></svg>
<svg class="abs" style="left:1223px;top:1057px" width="31" height="31" viewBox="0 0 31 31"><circle cx="15.500" cy="15" r="14.300" fill="#d9d9d9"/><circle cx="15.500" cy="15" r="13.300" fill="#1d1d1d"/><circle cx="15.500" cy="15" r="9.500" fill="#2b2b2b" stroke="#3a3a3a" stroke-width=".8"/><path d="M13.500 8.300h4" stroke="#3fbf6a" stroke-width="1"/><path d="M12 12.800h7M12.500 15.300h6M12.500 17.800h6" stroke="#cfcfcf" stroke-width="1.200" stroke-dasharray="1.400 .500"/></svg>
<svg class="abs" style="left:1223.500px;top:1101px" width="30" height="30" viewBox="0 0 30 30"><rect width="30" height="30" rx="1.500" fill="#4f7f4c"/><rect x=".5" y=".5" width="29" height="29" rx="1.500" fill="none" stroke="#6f9a66" stroke-width="1"/><circle cx="15" cy="15" r="10.500" fill="#3f6a3e" stroke="#fff" stroke-width="1.900"/><path d="M16.800 7.500L10.600 16.200h3.900l-1.300 6.300 6.300-8.800h-4z" fill="#f5c518"/></svg>
<svg class="abs" style="left:612px;top:1062px" width="20" height="22" viewBox="612 1062 20 22"><path d="M623.300 1073.800c-2.300-3.300-4.400-5-4.400-7.400a4.400 4.400 0 0 1 8.800 0c0 2.400-2.100 4.100-4.400 7.400z" fill="#cfd4d6" stroke="#8b9296" stroke-width="1"/><circle cx="623.300" cy="1066.200" r="1.600" fill="#fff"/><path d="M619 1067.500a4.400 4.400 0 0 1 1.500-4.600" stroke="#222" stroke-width="1.300" fill="none"/><path d="M622 1074.300c-3 .2-6 .8-6 2.300 0 1.700 6 .8 6 2.400 0 1-2 1.400-4.600 1.600" fill="none" stroke="#b9bfc4" stroke-width=".9"/><path d="M615.300 1080.200l3-1.600-.2 3z" fill="#b5651d"/></svg>
<svg class="abs" style="left:605px;top:1100px" width="32" height="32" viewBox="605 1100 32 32"><circle cx="620.800" cy="1116" r="14.900" fill="#05b58b"/><g fill="none" stroke="#9ee7d2" stroke-width=".9"><rect x="613.300" y="1109.300" width="12.300" height="16" rx="1"/><path d="M616.800 1109.300c0-1.400 1-2.300 2.600-2.300s2.600.9 2.600 2.300M615 1113h2M618.500 1113h5M615 1116.300h2M618.500 1116.300h3.500M615 1119.600h2M618.500 1119.600h2.500M615 1122.700h2M618.500 1122.700h3.500"/><path d="M625.500 1116.300l2.800 1.500v3.600c0 2-1.300 3.200-2.800 3.900-1.500-.7-2.800-1.900-2.800-3.900v-3.600z" fill="#05b58b"/><path d="M625.500 1117.500v6.500" stroke-width="1.300"/></g></svg>


<div id="gbtn" class="abs fa">نمایش آخرین وضعیت</div>
<div id="inp" class="abs"></div>
<div id="ilb" class="abs fa">تاریخ</div>
<div id="rbtn" class="abs fa">فیلتر تاریخ</div>
<div id="card2" class="abs"></div>
<svg class="abs" style="left:22px;top:1353px" width="1868" height="64" viewBox="22 1353 1868 64" direction="ltr">
<defs><pattern id="q1" width="5" height="7" patternUnits="userSpaceOnUse" patternTransform="rotate(12)"><rect width="5" height="7" fill="#dedddb"/><path d="M0 0H5M0 0V7" stroke="#fdfdfc" stroke-width="1.900"/></pattern>
<pattern id="q2" width="6" height="5" patternUnits="userSpaceOnUse" patternTransform="rotate(-25)"><rect width="6" height="5" fill="#dfdedc"/><path d="M0 0H6M0 0V5" stroke="#fdfdfc" stroke-width="1.800"/></pattern></defs>
<rect x="22" y="1353" width="1868" height="64" fill="#f2efe9"/>
<path d="M22 1353L330 1353L380 1417L22 1417Z" fill="#e6e5e0"/>
<path d="M60 1360L140 1356L150 1417L70 1417Z" fill="url(#q1)"/>
<path d="M150 1353L250 1353L330 1417L160 1417Z" fill="#d4ebc0"/>
<path d="M250 1353L300 1353L370 1417L320 1417Z" fill="#e3e2df"/>
<path d="M22 1353L40 1353L30 1417L22 1417Z" fill="#cfe3c0"/>
<path d="M22 1362C30 1363.7 55.3 1368.2 70 1372C84.7 1375.8 100 1377.5 110 1385C120 1392.5 126.7 1411.7 130 1417M90 1353C92.5 1357.5 103.3 1369.3 105 1380C106.7 1390.7 100.8 1410.8 100 1417M60 1400L110 1395" fill="none" stroke="#d6d68c" stroke-width="3.600"/><path d="M22 1362C30 1363.7 55.3 1368.2 70 1372C84.7 1375.8 100 1377.5 110 1385C120 1392.5 126.7 1411.7 130 1417M90 1353C92.5 1357.5 103.3 1369.3 105 1380C106.7 1390.7 100.8 1410.8 100 1417M60 1400L110 1395" fill="none" stroke="#f6f8ac" stroke-width="2.700"/>
<path d="M158 1353C157.7 1359.2 157.3 1379.3 156 1390C154.7 1400.7 151 1412.5 150 1417" fill="none" stroke="#dfa868" stroke-width="4.200"/><path d="M158 1353C157.7 1359.2 157.3 1379.3 156 1390C154.7 1400.7 151 1412.5 150 1417" fill="none" stroke="#fbcf98" stroke-width="3"/>
<path d="M240 1353C245.8 1359.2 265 1379.3 275 1390C285 1400.7 295.8 1412.5 300 1417" fill="none" stroke="#dfa868" stroke-width="4"/><path d="M240 1353C245.8 1359.2 265 1379.3 275 1390C285 1400.7 295.8 1412.5 300 1417" fill="none" stroke="#fbcf98" stroke-width="2.800"/>
<path d="M250 1353C258.3 1359.5 286.7 1381.3 300 1392C313.3 1402.7 325 1412.8 330 1417" fill="none" stroke="#d9708c" stroke-width="4.600"/><path d="M250 1353C258.3 1359.5 286.7 1381.3 300 1392C313.3 1402.7 325 1412.8 330 1417" fill="none" stroke="#e892a2" stroke-width="3.400"/>
<path d="M295 1353C302.5 1359.2 326.7 1379.3 340 1390C353.3 1400.7 369.2 1412.5 375 1417" fill="none" stroke="#d9708c" stroke-width="4.600"/><path d="M295 1353C302.5 1359.2 326.7 1379.3 340 1390C353.3 1400.7 369.2 1412.5 375 1417" fill="none" stroke="#e892a2" stroke-width="3.400"/>
<path d="M95 1353C102.5 1360.8 127.5 1390.5 140 1400C152.5 1409.5 160 1410.8 170 1410C180 1409.2 188.3 1396.7 200 1395C211.7 1393.3 225 1396.3 240 1400C255 1403.7 281.7 1414.2 290 1417" fill="none" stroke="#777" stroke-width="1.800"/>
<path d="M200 1353C208.3 1359.2 233.3 1379.3 250 1390C266.7 1400.7 291.7 1412.5 300 1417" fill="none" stroke="#777" stroke-width="1.800"/>
<path d="M175 1372Q200 1395 230 1417" fill="none" stroke="#aad3df" stroke-width="2" stroke-dasharray="4 2"/>
<path d="M395 1405l6-14 4 12 5-14 4 20-8 8z" fill="#a9d49a"/>
<path d="M830 1395L860 1385L875 1400L850 1417L835 1417Z" fill="#b4d8a3"/>
<path d="M905 1390Q925 1375 950 1385L985 1395L1010 1385L1040 1395L1040 1417L900 1417Z" fill="#b9dba8"/>
<path d="M905 1395Q930 1385 955 1400L950 1417L910 1417Z" fill="#9cc88c"/>
<path d="M945 1353L1040 1353L1040 1380L1000 1385L960 1372Z" fill="#ebe9e2"/>
<path d="M535 1353C532.5 1358.3 527.5 1376.3 520 1385C512.5 1393.7 498.3 1399.7 490 1405C481.7 1410.3 473.3 1415 470 1417" fill="none" stroke="#b58bb8" stroke-width="1.600"/>
<path d="M700 1417C706.7 1415 725 1407.8 740 1405C755 1402.2 775 1398 790 1400C805 1402 823.3 1414.2 830 1417" fill="none" stroke="#b89dc0" stroke-width="1.300" stroke-dasharray="7 3 2 3"/>
<path d="M430 1417C430.3 1413.3 428.7 1400.3 432 1395C435.3 1389.7 443.7 1385.5 450 1385C456.3 1384.5 463.3 1392.8 470 1392C476.7 1391.2 485 1386.5 490 1380C495 1373.5 498.3 1357.5 500 1353M705 1353C706.7 1356.7 709.2 1369.7 715 1375C720.8 1380.3 735 1378 740 1385C745 1392 744.2 1411.7 745 1417M985 1356C987.5 1358 995.8 1367.3 1000 1368C1004.2 1368.7 1008.3 1361.3 1010 1360" fill="none" stroke="#fff" stroke-width="1.200"/>
<path d="M931 1367l4.500-7 4.500 7z" fill="#c77d3e"/>
<path d="M1036 1353C1037.3 1356.7 1043 1364.3 1044 1375C1045 1385.7 1042.3 1410 1042 1417" fill="none" stroke="#d9708c" stroke-width="4"/><path d="M1036 1353C1037.3 1356.7 1043 1364.3 1044 1375C1045 1385.7 1042.3 1410 1042 1417" fill="none" stroke="#e892a2" stroke-width="2.800"/>
<path d="M1046 1353L1175 1353L1165 1417L1046 1417Z" fill="#d9efcc"/>
<path d="M1080 1360L1150 1356L1160 1380L1100 1392Z" fill="#b9dba8"/>
<path d="M1060 1385L1170 1370L1168 1417L1075 1417Z" fill="url(#q2)"/>
<path d="M1170 1353L1890 1353L1890 1417L1165 1417Z" fill="url(#q1)"/>
<path d="M1616 1353l77.1 0l5.9 64l-77.1 0z" fill="url(#q2)"/>
<path d="M1839.7 1353l77 0l8.4 64l-77 0z" fill="url(#q2)"/>
<path d="M1200.3 1353l63.3 0l8.9 64l-63.3 0z" fill="url(#q2)"/>
<path d="M1634.3 1353l85 0l-7.7 64l-85 0z" fill="url(#q2)"/>
<path d="M1508.3 1353l52.3 0l0.9 64l-52.3 0z" fill="url(#q2)"/>
<path d="M1581.8 1353l40.7 0l-5.7 64l-40.7 0z" fill="url(#q2)"/>
<path d="M1375.6 1353l85.8 0l5.3 64l-85.8 0z" fill="url(#q2)"/>
<path d="M1291.7 1353l79.9 0l-7.2 64l-79.9 0z" fill="url(#q2)"/>
<path d="M1612.2 1353l46.3 0l-10 64l-46.3 0z" fill="url(#q2)"/>
<path d="M1790 1353l50.5 0l-5.7 64l-50.5 0z" fill="url(#q2)"/>
<path d="M1867.7 1353l83.6 0l-4.2 64l-83.6 0z" fill="url(#q2)"/>
<path d="M1853 1353l67 0l3.6 64l-67 0z" fill="url(#q2)"/>
<path d="M1323.3 1353l87 0l3.8 64l-87 0z" fill="url(#q2)"/>
<path d="M1856.6 1353l84.7 0l-4 64l-84.7 0z" fill="url(#q2)"/>
<path d="M1755 1360L1790 1356L1795 1380L1760 1385Z" fill="#c8facc"/><path d="M1860 1353L1890 1353L1890 1385L1868 1380Z" fill="#f4e1dc"/>
<path d="M1300 1353L1320 1353L1316 1417L1304 1417Z" fill="#cfe8c4"/>
<path d="M1830 1395L1890 1388L1890 1417L1825 1417Z" fill="#d6d5d2"/>
<path d="M1356.2 1364.8h2.6v2.2h-3zM1307.1 1390.6h2v4h-3zM1337.1 1373.3h5.3v3.4h-3zM1319 1383.4h4.8v2.2h-3zM1859.6 1356.3h5v4.5h-3zM1074.8 1401.5h3.5v3.7h-3zM1067.4 1357.8h2.7v4.9h-3zM1221.1 1399.6h5.7v4.8h-3zM1342.4 1375.9h4.1v4.3h-3zM1148.6 1399.2h5.2v4.6h-3zM1090 1410.8h2.4v3h-3zM1560.9 1409.2h3.4v4.8h-3zM1507 1373.4h3.3v2.5h-3zM1124.1 1363.8h4.8v5h-3zM1192.5 1357.9h5.9v3.6h-3zM1392.8 1369h4.4v4.5h-3zM1433.6 1379.9h2.2v4.7h-3zM1086.8 1384.1h5.4v2.4h-3zM1660 1411h4.5v4.4h-3zM1147.4 1380.6h2.6v4.5h-3zM1301.7 1381.7h6v4.6h-3zM1860.3 1381.8h4v4.2h-3zM1452.8 1372.2h3.6v2.4h-3zM1369.1 1413.3h5.8v3.9h-3zM1469.4 1375h2.4v2.8h-3zM1701.3 1406.2h3.4v4.4h-3zM1695.4 1396h4.7v4.3h-3zM1358 1396.6h3.1v3.5h-3zM1691.2 1395.8h3.2v4.8h-3zM1592.7 1389.3h2v3.6h-3zM1265.6 1394.6h3.9v4.5h-3zM1590.9 1402.1h3.4v3.9h-3zM1665 1403.9h3.4v4.5h-3zM1773.3 1395.6h5.9v4.9h-3zM1484.9 1386.2h2.7v4.5h-3zM1828.7 1383.2h4.8v4.2h-3zM1658.9 1365.1h5.1v3.7h-3zM1605.8 1379.8h4.5v4.3h-3zM1582.2 1397.5h2.1v2.5h-3zM1421.7 1393.4h2.9v4.1h-3zM1577.3 1357.5h3.9v2.7h-3zM1104.4 1362.9h3.3v2.5h-3zM1218.6 1357.1h3.9v3.1h-3zM1561.7 1389.8h3v4.7h-3zM1060.5 1378.9h3.1v3.2h-3zM1154.4 1404.1h3.5v2.1h-3zM1563.1 1360.6h4.2v3h-3zM1536.3 1411.5h5.3v3.3h-3zM1726.7 1392.9h3.5v2.4h-3zM1548.7 1388.3h5.8v4.9h-3zM1559.1 1375.7h5.6v2h-3zM1148.5 1388.4h4.5v2.4h-3zM1576.2 1407.6h3.5v3.3h-3zM1245.6 1372.2h5.9v3.1h-3zM1848.1 1408.9h4.4v2.8h-3zM1864.4 1384.3h3.7v3h-3zM1867.1 1384h3.1v3.4h-3zM1159.9 1391.7h3.8v2.9h-3zM1701 1403.8h2.1v3.6h-3zM1284.5 1410.2h5.1v2.7h-3z" fill="#bdf3c6"/>
<path d="M1235.5 1356.3C1241.2 1356.5 1257.6 1357.8 1270 1357.5C1282.4 1357.2 1298 1354.9 1309.8 1354.4C1321.7 1354 1330.5 1354.6 1340.9 1354.7C1351.2 1354.8 1361.3 1354.6 1371.8 1355C1382.3 1355.3 1394.4 1356.9 1404 1356.9C1413.7 1356.9 1418.2 1354.7 1429.7 1354.9C1441.3 1355.1 1461.6 1357.2 1473.1 1358C1484.5 1358.9 1488.1 1359.6 1498.4 1360.3C1508.7 1360.9 1523 1361.1 1534.9 1361.9C1546.7 1362.8 1558.3 1364.2 1569.5 1365.2C1580.8 1366.2 1596.9 1367.6 1602.4 1368M1675 1372.2C1680.1 1372.6 1696 1374.1 1705.7 1374.5C1715.5 1374.8 1728.9 1374.3 1733.6 1374.3M1834.9 1378L1873.1 1374.2M1182 1375.6C1186.9 1375.8 1199.9 1377.1 1211.3 1376.8C1222.8 1376.5 1236.8 1374.8 1250.6 1373.9C1264.4 1372.9 1281.2 1372 1293.9 1371.1C1306.7 1370.1 1317.4 1369.3 1327.2 1368.3C1337.1 1367.4 1344.4 1366.3 1353.1 1365.2C1361.8 1364.1 1375.1 1362.3 1379.5 1361.7M1453 1363.2L1487.8 1366.7M1551.6 1368.3C1557.6 1368.5 1575.6 1369.5 1587.7 1369.3C1599.7 1369.1 1611.8 1368.2 1623.7 1367.3C1635.6 1366.5 1653.1 1364.9 1659 1364.4M1806 1362.2L1840.6 1360.8M1206.6 1395.4C1211.2 1395.6 1224.8 1396.4 1234.4 1396.4C1244 1396.3 1259.1 1395.3 1264.1 1395.1M1337.7 1395.3C1343.3 1395.8 1359.6 1397.6 1371.4 1398.1C1383.1 1398.7 1402.1 1398.6 1408.2 1398.7M1694.4 1393.2C1698.7 1393.7 1708.5 1395.7 1720 1396.6C1731.6 1397.4 1756.5 1397.8 1763.8 1398.1M1836.6 1399.9L1876.2 1397.3M1196 1408C1201.4 1407.8 1217.8 1406.5 1228.3 1406.5C1238.8 1406.6 1249.2 1408.4 1259 1408.4C1268.8 1408.3 1275.2 1406.4 1287.3 1406.3C1299.3 1406.1 1323.8 1407.3 1331.1 1407.5M1820.7 1398.7L1853.2 1399.7M1112 1356.3C1112.5 1360.6 1113.9 1374 1115.1 1382.2C1116.2 1390.4 1118.3 1401.6 1118.9 1405.5M1125.4 1394.6L1120.2 1416.1M1146.2 1350C1147.1 1354.7 1150.9 1370.1 1151.6 1378.3C1152.4 1386.5 1151.9 1391.9 1150.8 1399C1149.7 1406.2 1145.9 1417.3 1144.9 1421M1159.6 1382.5L1155.1 1410M1178.1 1354.6C1178.1 1359.5 1179.2 1374.8 1178.5 1383.9C1177.7 1392.9 1174.5 1404.8 1173.7 1409M1201.8 1348.5C1202.6 1352.5 1206.1 1364.9 1206.4 1372.3C1206.7 1379.7 1204.5 1385.3 1203.7 1392.9C1203 1400.4 1202.3 1413.5 1202 1417.6M1217.6 1362.7C1217.8 1367.4 1218.1 1382.9 1219 1390.9C1219.9 1398.9 1222.3 1407.4 1222.9 1410.7M1231.6 1358.8C1232.2 1362.2 1233.9 1371.4 1235.2 1379.2C1236.5 1386.9 1238.8 1401 1239.6 1405.4M1244.7 1355.7C1244.5 1359 1244 1369.5 1243.4 1375.9C1242.8 1382.3 1241.1 1387.2 1241.2 1394.2C1241.2 1401.2 1243.2 1414 1243.6 1417.9M1267.9 1358.4C1268.5 1362.5 1270.5 1374.6 1271.5 1382.8C1272.5 1391.1 1273.3 1403.8 1273.6 1408M1281.9 1353.3C1282.3 1357.9 1284.5 1371.1 1284.4 1380.5C1284.4 1389.8 1282.2 1404.7 1281.7 1409.6M1302.2 1362.4C1302.9 1366.7 1306.2 1380 1306.3 1388.6C1306.4 1397.2 1303.4 1409.7 1302.8 1413.9M1340.2 1358.3C1339.9 1362.8 1339.3 1377.1 1338.6 1384.9C1338 1392.8 1336.7 1402 1336.3 1405.5M1355 1357.5C1354.1 1360.9 1349.9 1370.1 1349.8 1378.2C1349.6 1386.3 1353.5 1401.5 1354.3 1406.2M1373.8 1361.6L1375.1 1382.9M1388.8 1350.9C1389.2 1355.1 1390.8 1369.2 1391.1 1376.6C1391.5 1384 1391.3 1387.3 1390.9 1395.3C1390.5 1403.4 1389.1 1419.9 1388.8 1424.8M1425.7 1359C1426.1 1363.7 1427.6 1377.2 1428.3 1386.7C1428.9 1396.2 1429.5 1411.3 1429.8 1416.2M1439.4 1351.1C1439.8 1355 1441.4 1367.5 1441.6 1374.6C1441.7 1381.7 1441.4 1386.7 1440.4 1393.6C1439.5 1400.5 1436.6 1412.4 1435.8 1416.1M1457.9 1362.4C1458.4 1365.6 1461.2 1374.6 1461 1381.3C1460.7 1388 1457.1 1399.3 1456.4 1402.9M1481 1353.7C1481.4 1357.7 1483.3 1369.6 1483.3 1377.7C1483.3 1385.9 1481.3 1398.5 1480.9 1402.6M1494.5 1354.3C1493.7 1358.6 1490.3 1372.8 1489.4 1380.3C1488.5 1387.8 1489.4 1392.2 1489.1 1399.5C1488.9 1406.7 1488 1419.9 1487.8 1424M1516.4 1348.1C1515.5 1351.8 1511.8 1362.8 1510.6 1370.4C1509.4 1378 1510 1386.9 1509.2 1393.9C1508.4 1400.9 1506.4 1409.4 1505.8 1412.5M1553.7 1375.8L1557.6 1404.3M1570.9 1388.7L1567.5 1418.7M1592.2 1400.6L1586.4 1421M1640.7 1351.6C1640.8 1355.1 1641.2 1366 1641.3 1372.8C1641.3 1379.6 1640.5 1386.1 1641.1 1392.4C1641.6 1398.7 1643.8 1407.5 1644.3 1410.5M1662.5 1348.8C1662.2 1351.9 1661.7 1361.2 1661.1 1367.3C1660.4 1373.4 1658.2 1378.2 1658.7 1385.6C1659.1 1392.9 1662.9 1407.1 1663.8 1411.4M1685.8 1362.2C1685.1 1365.8 1682.5 1377.1 1681.8 1383.9C1681 1390.6 1681.3 1399.6 1681.2 1402.8M1708.9 1352.5C1708.2 1357.1 1705.2 1371.8 1704.6 1380.4C1704 1389.1 1705.3 1400.4 1705.4 1404.4M1720.1 1382.7L1723 1410.1M1740.2 1357.4L1744.7 1378.6M1773.6 1349C1772.7 1352.1 1768.5 1360.6 1768.4 1368.1C1768.3 1375.6 1772 1386.4 1773.1 1393.9C1774.2 1401.3 1774.5 1409.6 1774.8 1412.7M1789.6 1379.6C1788.9 1383.5 1785.3 1395.7 1785.5 1403.2C1785.7 1410.6 1789.9 1420.8 1790.8 1424.3M1817.9 1352C1818.7 1356.1 1822 1368.1 1822.7 1376.5C1823.3 1384.8 1821.9 1398.1 1821.7 1402.4M1832.1 1351.9L1829.2 1380.6M1846.2 1357.5C1845.3 1361.6 1841.4 1374.5 1840.8 1382.5C1840.2 1390.4 1842.2 1401.3 1842.4 1405.1M1883.1 1400.3L1878.3 1423.9M1075 1410C1077.5 1407.5 1088.3 1400 1090 1395C1091.7 1390 1088.3 1381.7 1085 1380C1081.7 1378.3 1072.5 1384.2 1070 1385M1100 1417C1101.7 1413.3 1101.7 1401.2 1110 1395C1118.3 1388.8 1140 1385 1150 1380C1160 1375 1166.7 1367.5 1170 1365" fill="none" stroke="#d6d68c" stroke-width="3.600" stroke-linecap="round"/><path d="M1235.5 1356.3C1241.2 1356.5 1257.6 1357.8 1270 1357.5C1282.4 1357.2 1298 1354.9 1309.8 1354.4C1321.7 1354 1330.5 1354.6 1340.9 1354.7C1351.2 1354.8 1361.3 1354.6 1371.8 1355C1382.3 1355.3 1394.4 1356.9 1404 1356.9C1413.7 1356.9 1418.2 1354.7 1429.7 1354.9C1441.3 1355.1 1461.6 1357.2 1473.1 1358C1484.5 1358.9 1488.1 1359.6 1498.4 1360.3C1508.7 1360.9 1523 1361.1 1534.9 1361.9C1546.7 1362.8 1558.3 1364.2 1569.5 1365.2C1580.8 1366.2 1596.9 1367.6 1602.4 1368M1675 1372.2C1680.1 1372.6 1696 1374.1 1705.7 1374.5C1715.5 1374.8 1728.9 1374.3 1733.6 1374.3M1834.9 1378L1873.1 1374.2M1182 1375.6C1186.9 1375.8 1199.9 1377.1 1211.3 1376.8C1222.8 1376.5 1236.8 1374.8 1250.6 1373.9C1264.4 1372.9 1281.2 1372 1293.9 1371.1C1306.7 1370.1 1317.4 1369.3 1327.2 1368.3C1337.1 1367.4 1344.4 1366.3 1353.1 1365.2C1361.8 1364.1 1375.1 1362.3 1379.5 1361.7M1453 1363.2L1487.8 1366.7M1551.6 1368.3C1557.6 1368.5 1575.6 1369.5 1587.7 1369.3C1599.7 1369.1 1611.8 1368.2 1623.7 1367.3C1635.6 1366.5 1653.1 1364.9 1659 1364.4M1806 1362.2L1840.6 1360.8M1206.6 1395.4C1211.2 1395.6 1224.8 1396.4 1234.4 1396.4C1244 1396.3 1259.1 1395.3 1264.1 1395.1M1337.7 1395.3C1343.3 1395.8 1359.6 1397.6 1371.4 1398.1C1383.1 1398.7 1402.1 1398.6 1408.2 1398.7M1694.4 1393.2C1698.7 1393.7 1708.5 1395.7 1720 1396.6C1731.6 1397.4 1756.5 1397.8 1763.8 1398.1M1836.6 1399.9L1876.2 1397.3M1196 1408C1201.4 1407.8 1217.8 1406.5 1228.3 1406.5C1238.8 1406.6 1249.2 1408.4 1259 1408.4C1268.8 1408.3 1275.2 1406.4 1287.3 1406.3C1299.3 1406.1 1323.8 1407.3 1331.1 1407.5M1820.7 1398.7L1853.2 1399.7M1112 1356.3C1112.5 1360.6 1113.9 1374 1115.1 1382.2C1116.2 1390.4 1118.3 1401.6 1118.9 1405.5M1125.4 1394.6L1120.2 1416.1M1146.2 1350C1147.1 1354.7 1150.9 1370.1 1151.6 1378.3C1152.4 1386.5 1151.9 1391.9 1150.8 1399C1149.7 1406.2 1145.9 1417.3 1144.9 1421M1159.6 1382.5L1155.1 1410M1178.1 1354.6C1178.1 1359.5 1179.2 1374.8 1178.5 1383.9C1177.7 1392.9 1174.5 1404.8 1173.7 1409M1201.8 1348.5C1202.6 1352.5 1206.1 1364.9 1206.4 1372.3C1206.7 1379.7 1204.5 1385.3 1203.7 1392.9C1203 1400.4 1202.3 1413.5 1202 1417.6M1217.6 1362.7C1217.8 1367.4 1218.1 1382.9 1219 1390.9C1219.9 1398.9 1222.3 1407.4 1222.9 1410.7M1231.6 1358.8C1232.2 1362.2 1233.9 1371.4 1235.2 1379.2C1236.5 1386.9 1238.8 1401 1239.6 1405.4M1244.7 1355.7C1244.5 1359 1244 1369.5 1243.4 1375.9C1242.8 1382.3 1241.1 1387.2 1241.2 1394.2C1241.2 1401.2 1243.2 1414 1243.6 1417.9M1267.9 1358.4C1268.5 1362.5 1270.5 1374.6 1271.5 1382.8C1272.5 1391.1 1273.3 1403.8 1273.6 1408M1281.9 1353.3C1282.3 1357.9 1284.5 1371.1 1284.4 1380.5C1284.4 1389.8 1282.2 1404.7 1281.7 1409.6M1302.2 1362.4C1302.9 1366.7 1306.2 1380 1306.3 1388.6C1306.4 1397.2 1303.4 1409.7 1302.8 1413.9M1340.2 1358.3C1339.9 1362.8 1339.3 1377.1 1338.6 1384.9C1338 1392.8 1336.7 1402 1336.3 1405.5M1355 1357.5C1354.1 1360.9 1349.9 1370.1 1349.8 1378.2C1349.6 1386.3 1353.5 1401.5 1354.3 1406.2M1373.8 1361.6L1375.1 1382.9M1388.8 1350.9C1389.2 1355.1 1390.8 1369.2 1391.1 1376.6C1391.5 1384 1391.3 1387.3 1390.9 1395.3C1390.5 1403.4 1389.1 1419.9 1388.8 1424.8M1425.7 1359C1426.1 1363.7 1427.6 1377.2 1428.3 1386.7C1428.9 1396.2 1429.5 1411.3 1429.8 1416.2M1439.4 1351.1C1439.8 1355 1441.4 1367.5 1441.6 1374.6C1441.7 1381.7 1441.4 1386.7 1440.4 1393.6C1439.5 1400.5 1436.6 1412.4 1435.8 1416.1M1457.9 1362.4C1458.4 1365.6 1461.2 1374.6 1461 1381.3C1460.7 1388 1457.1 1399.3 1456.4 1402.9M1481 1353.7C1481.4 1357.7 1483.3 1369.6 1483.3 1377.7C1483.3 1385.9 1481.3 1398.5 1480.9 1402.6M1494.5 1354.3C1493.7 1358.6 1490.3 1372.8 1489.4 1380.3C1488.5 1387.8 1489.4 1392.2 1489.1 1399.5C1488.9 1406.7 1488 1419.9 1487.8 1424M1516.4 1348.1C1515.5 1351.8 1511.8 1362.8 1510.6 1370.4C1509.4 1378 1510 1386.9 1509.2 1393.9C1508.4 1400.9 1506.4 1409.4 1505.8 1412.5M1553.7 1375.8L1557.6 1404.3M1570.9 1388.7L1567.5 1418.7M1592.2 1400.6L1586.4 1421M1640.7 1351.6C1640.8 1355.1 1641.2 1366 1641.3 1372.8C1641.3 1379.6 1640.5 1386.1 1641.1 1392.4C1641.6 1398.7 1643.8 1407.5 1644.3 1410.5M1662.5 1348.8C1662.2 1351.9 1661.7 1361.2 1661.1 1367.3C1660.4 1373.4 1658.2 1378.2 1658.7 1385.6C1659.1 1392.9 1662.9 1407.1 1663.8 1411.4M1685.8 1362.2C1685.1 1365.8 1682.5 1377.1 1681.8 1383.9C1681 1390.6 1681.3 1399.6 1681.2 1402.8M1708.9 1352.5C1708.2 1357.1 1705.2 1371.8 1704.6 1380.4C1704 1389.1 1705.3 1400.4 1705.4 1404.4M1720.1 1382.7L1723 1410.1M1740.2 1357.4L1744.7 1378.6M1773.6 1349C1772.7 1352.1 1768.5 1360.6 1768.4 1368.1C1768.3 1375.6 1772 1386.4 1773.1 1393.9C1774.2 1401.3 1774.5 1409.6 1774.8 1412.7M1789.6 1379.6C1788.9 1383.5 1785.3 1395.7 1785.5 1403.2C1785.7 1410.6 1789.9 1420.8 1790.8 1424.3M1817.9 1352C1818.7 1356.1 1822 1368.1 1822.7 1376.5C1823.3 1384.8 1821.9 1398.1 1821.7 1402.4M1832.1 1351.9L1829.2 1380.6M1846.2 1357.5C1845.3 1361.6 1841.4 1374.5 1840.8 1382.5C1840.2 1390.4 1842.2 1401.3 1842.4 1405.1M1883.1 1400.3L1878.3 1423.9M1075 1410C1077.5 1407.5 1088.3 1400 1090 1395C1091.7 1390 1088.3 1381.7 1085 1380C1081.7 1378.3 1072.5 1384.2 1070 1385M1100 1417C1101.7 1413.3 1101.7 1401.2 1110 1395C1118.3 1388.8 1140 1385 1150 1380C1160 1375 1166.7 1367.5 1170 1365" fill="none" stroke="#f6f8ac" stroke-width="2.700" stroke-linecap="round"/>
<path d="M1165 1417C1165.8 1411.7 1164.2 1393.7 1170 1385C1175.8 1376.3 1186.7 1369.2 1200 1365C1213.3 1360.8 1234.2 1360.5 1250 1360C1265.8 1359.5 1287.5 1361.7 1295 1362M1480 1353C1483.3 1357.5 1495 1369.3 1500 1380C1505 1390.7 1508.3 1410.8 1510 1417M1745 1353C1743.3 1358.3 1740 1374.3 1735 1385C1730 1395.7 1718.3 1411.7 1715 1417M1560 1417C1560.8 1413.3 1558.3 1401.2 1565 1395C1571.7 1388.8 1594.2 1382.5 1600 1380" fill="none" stroke="#dfa868" stroke-width="4" stroke-linecap="round"/><path d="M1165 1417C1165.8 1411.7 1164.2 1393.7 1170 1385C1175.8 1376.3 1186.7 1369.2 1200 1365C1213.3 1360.8 1234.2 1360.5 1250 1360C1265.8 1359.5 1287.5 1361.7 1295 1362M1480 1353C1483.3 1357.5 1495 1369.3 1500 1380C1505 1390.7 1508.3 1410.8 1510 1417M1745 1353C1743.3 1358.3 1740 1374.3 1735 1385C1730 1395.7 1718.3 1411.7 1715 1417M1560 1417C1560.8 1413.3 1558.3 1401.2 1565 1395C1571.7 1388.8 1594.2 1382.5 1600 1380" fill="none" stroke="#fbcf98" stroke-width="3" stroke-linecap="round"/>
<path d="M1165 1417C1170.8 1414.2 1184.2 1404.2 1200 1400C1215.8 1395.8 1243.3 1394 1260 1392C1276.7 1390 1283.3 1389.3 1300 1388C1316.7 1386.7 1340 1386.7 1360 1384C1380 1381.3 1401.7 1376.3 1420 1372C1438.3 1367.7 1458.3 1361.2 1470 1358C1481.7 1354.8 1486.7 1353.8 1490 1353M1295 1353C1295.5 1358.3 1296.3 1374.3 1298 1385C1299.7 1395.7 1303.8 1411.7 1305 1417M1320 1353C1321 1359.2 1324.3 1379.3 1326 1390C1327.7 1400.7 1329.3 1412.5 1330 1417M1232 1417C1231.7 1413.3 1229.3 1402 1230 1395C1230.7 1388 1235 1378.3 1236 1375M1470 1353C1471.7 1356.2 1479.2 1365 1480 1372C1480.8 1379 1475.3 1387.5 1475 1395C1474.7 1402.5 1477.5 1413.3 1478 1417M1496 1353C1496.7 1358.3 1499.8 1374.3 1500 1385C1500.2 1395.7 1497.5 1411.7 1497 1417M1510 1400C1512.5 1396.7 1519.2 1382.5 1525 1380C1530.8 1377.5 1540 1378.8 1545 1385C1550 1391.2 1553.3 1411.7 1555 1417M1510 1385C1515 1381.7 1525 1369.2 1540 1365C1555 1360.8 1586.7 1362 1600 1360C1613.3 1358 1616.7 1354.2 1620 1353M1690 1353C1688.3 1357.5 1683 1369.3 1680 1380C1677 1390.7 1673.3 1410.8 1672 1417M1785 1353C1782.5 1358.3 1774.2 1374.3 1770 1385C1765.8 1395.7 1761.7 1411.7 1760 1417M1620 1353C1623.3 1354.2 1633.3 1360 1640 1360C1646.7 1360 1656.7 1354.2 1660 1353" fill="none" stroke="#dd8a76" stroke-width="4.400" stroke-linecap="round"/><path d="M1165 1417C1170.8 1414.2 1184.2 1404.2 1200 1400C1215.8 1395.8 1243.3 1394 1260 1392C1276.7 1390 1283.3 1389.3 1300 1388C1316.7 1386.7 1340 1386.7 1360 1384C1380 1381.3 1401.7 1376.3 1420 1372C1438.3 1367.7 1458.3 1361.2 1470 1358C1481.7 1354.8 1486.7 1353.8 1490 1353M1295 1353C1295.5 1358.3 1296.3 1374.3 1298 1385C1299.7 1395.7 1303.8 1411.7 1305 1417M1320 1353C1321 1359.2 1324.3 1379.3 1326 1390C1327.7 1400.7 1329.3 1412.5 1330 1417M1232 1417C1231.7 1413.3 1229.3 1402 1230 1395C1230.7 1388 1235 1378.3 1236 1375M1470 1353C1471.7 1356.2 1479.2 1365 1480 1372C1480.8 1379 1475.3 1387.5 1475 1395C1474.7 1402.5 1477.5 1413.3 1478 1417M1496 1353C1496.7 1358.3 1499.8 1374.3 1500 1385C1500.2 1395.7 1497.5 1411.7 1497 1417M1510 1400C1512.5 1396.7 1519.2 1382.5 1525 1380C1530.8 1377.5 1540 1378.8 1545 1385C1550 1391.2 1553.3 1411.7 1555 1417M1510 1385C1515 1381.7 1525 1369.2 1540 1365C1555 1360.8 1586.7 1362 1600 1360C1613.3 1358 1616.7 1354.2 1620 1353M1690 1353C1688.3 1357.5 1683 1369.3 1680 1380C1677 1390.7 1673.3 1410.8 1672 1417M1785 1353C1782.5 1358.3 1774.2 1374.3 1770 1385C1765.8 1395.7 1761.7 1411.7 1760 1417M1620 1353C1623.3 1354.2 1633.3 1360 1640 1360C1646.7 1360 1656.7 1354.2 1660 1353" fill="none" stroke="#f6a78f" stroke-width="3.300" stroke-linecap="round"/>
<path d="M1298 1353Q1302 1385 1310 1417" fill="none" stroke="#aad3df" stroke-width="1.400"/>
<rect x="1230" y="1358.5" width="20" height="15" rx="2" fill="#f6d4cc" stroke="#c98d85" stroke-width=".8"/><text x="1240" y="1369.6" font-family="DejaVu Sans,Liberation Sans,sans-serif" font-size="10" fill="#7a2a20" text-anchor="middle">19</text>
<rect x="1515" y="1410.5" width="20" height="15" rx="2" fill="#f6d4cc" stroke="#c98d85" stroke-width=".8"/><text x="1525" y="1421.6" font-family="DejaVu Sans,Liberation Sans,sans-serif" font-size="10" fill="#7a2a20" text-anchor="middle">25</text>
<text x="1613" y="1398" font-family="DejaVu Sans,Vazirmatn,sans-serif" font-size="11.5" fill="#333" text-anchor="middle" direction="rtl" stroke="#fff" stroke-width="2" stroke-opacity=".7" paint-order="stroke">منطقه ۳</text>
<text x="279" y="1370" font-family="DejaVu Sans,Vazirmatn,sans-serif" font-size="11" fill="#333" text-anchor="middle" direction="rtl" stroke="#fff" stroke-width="2" stroke-opacity=".7" paint-order="stroke">شهرک خاتم النبیا</text>
<text font-family="DejaVu Sans,Vazirmatn,sans-serif" font-size="10" fill="#9a78a8" direction="rtl" transform="translate(497,1392) rotate(-42)" text-anchor="middle">شهرستان کرج</text>
</svg>
<div class="abs" style="left:35px;top:1366px;width:39px;height:60px;border:2px solid rgba(0,0,0,.22);border-radius:5px;background:#fff"></div>
<div class="abs" style="left:37px;top:1401px;width:35px;height:1px;background:#ccc"></div>
<svg class="abs" style="left:37px;top:1368px" width="34" height="34" viewBox="0 0 34 34"><path d="M10 17.500H24M17 10.500V24.500" stroke="#000" stroke-width="2.600" fill="none"/></svg>
<div class="abs" style="left:0;top:205px;width:38px;height:41px;background:#05030f;border-radius:0 3px 3px 0;box-shadow:0 0 12px rgba(100,100,160,.35);z-index:7"></div>
<svg class="abs" style="left:9px;top:214px;z-index:8" width="19" height="19" viewBox="0 0 24 24"><path fill="#fff" d="M19.400 13c0-.300.100-.600.100-1s0-.700-.100-1l2.100-1.600c.200-.100.200-.400.100-.600l-2-3.500c-.100-.200-.400-.300-.600-.200l-2.500 1c-.500-.400-1.100-.700-1.700-1l-.400-2.600c0-.200-.200-.400-.500-.400h-4c-.200 0-.500.200-.500.400l-.400 2.600c-.600.300-1.200.600-1.700 1l-2.500-1c-.200-.100-.500 0-.600.200l-2 3.500c-.100.200-.100.500.100.600L4.600 11c0 .300-.100.600-.100 1s0 .700.100 1l-2.100 1.600c-.200.100-.200.400-.100.600l2 3.500c.100.200.400.300.600.200l2.500-1c.500.400 1.100.700 1.700 1l.400 2.600c0 .200.200.400.500.400h4c.200 0 .500-.200.500-.400l.400-2.600c.600-.300 1.200-.600 1.700-1l2.500 1c.200.100.500 0 .600-.200l2-3.500c.100-.200.100-.500-.100-.600L19.400 13zM12 15.500c-1.900 0-3.500-1.600-3.500-3.500s1.600-3.500 3.500-3.500 3.500 1.600 3.500 3.500-1.600 3.500-3.500 3.500z"/></svg>
<div class="abs" style="left:0;top:1076px;width:22px;height:47px;background:#05030f;border-radius:0 3px 3px 0;z-index:7"></div>
<svg class="abs" style="left:-9px;top:1089px;z-index:8" width="21" height="21" viewBox="0 0 24 24"><path fill="#fff" d="M19.400 13c0-.300.100-.600.100-1s0-.700-.100-1l2.100-1.600c.200-.100.200-.400.100-.600l-2-3.500c-.100-.200-.400-.300-.600-.200l-2.500 1c-.500-.400-1.100-.700-1.700-1l-.400-2.600c0-.200-.200-.400-.500-.400h-4c-.200 0-.500.200-.500.400l-.400 2.600c-.600.300-1.200.600-1.700 1l-2.500-1c-.200-.100-.500 0-.600.200l-2 3.500c-.100.200-.100.500.100.600L4.600 11c0 .300-.100.600-.100 1s0 .700.100 1l-2.100 1.600c-.200.100-.200.400-.100.600l2 3.500c.100.200.400.300.600.200l2.500-1c.500.400 1.100.700 1.700 1l.400 2.600c0 .200.200.400.500.400h4c.200 0 .500-.200.500-.400l.400-2.600c.600-.300 1.200-.600 1.700-1l2.500 1c.200.100.500 0 .600-.200l2-3.500c.100-.200.100-.500-.100-.600L19.400 13zM12 15.500c-1.900 0-3.500-1.600-3.500-3.500s1.600-3.500 3.500-3.500 3.500 1.600 3.500 3.500-1.600 3.500-3.500 3.500z"/></svg>

<svg class="abs" style="left:0;top:100px;z-index:6;pointer-events:none" width="600" height="900" viewBox="0 100 600 900" direction="ltr">
<defs>
<linearGradient id="pk" x1="0" y1="0" x2="1" y2="1"><stop offset="0" stop-color="#2a292b"/><stop offset=".5" stop-color="#353336"/><stop offset="1" stop-color="#29282a"/></linearGradient>
<linearGradient id="ps" x1="0" y1="0" x2="1" y2=".4"><stop offset="0" stop-color="#d9d9d9"/><stop offset=".5" stop-color="#c4c4c4"/><stop offset="1" stop-color="#e4e4e4"/></linearGradient>
<linearGradient id="ps2" x1="0" y1="0" x2="1" y2="1"><stop offset="0" stop-color="#f0f0f0"/><stop offset="1" stop-color="#9a9a9a"/></linearGradient>
<linearGradient id="pd" x1="0" y1="0" x2="1" y2="0"><stop offset="0" stop-color="#343537"/><stop offset=".5" stop-color="#434446"/><stop offset="1" stop-color="#37383a"/></linearGradient>
<linearGradient id="pg" x1="0" y1="0" x2="1" y2="1"><stop offset="0" stop-color="#c6ccd3"/><stop offset="1" stop-color="#d4d8dd"/></linearGradient>
<filter id="bl"><feGaussianBlur stdDeviation=".5"/></filter>
</defs>
<g filter="url(#bl)">
<path d="M76 203L76 227Q76 231 80 233L304 332Q309 334 312 330L378 245L378 231L315 310Z" fill="url(#ps)"/>
<path d="M315 310L378 231L378 245L312 330Q309 334 306 332Z" fill="url(#ps2)"/>
<path d="M76 203L86 207.500L86 235.500L80 233Q76 231 76 227Z" fill="#b8b8b8"/>
<path d="M289 314L292 315.500L292 327L289 325.700Z" fill="#999"/>
<path d="M136 128Q141 123 148 126L372 224Q379 228 375 234L320 305Q315 311 308 308L81 206Q74 202 79 196Z" fill="url(#pk)"/>
<path d="M81 206L308 308Q315 311 320 305L375 234" fill="none" stroke="#f2f2f2" stroke-width="1.4"/>
<path d="M96 198L141 140L360 232L312 295Z" fill="#323033" opacity=".6"/>
<path d="M152 252L227 283L227 291L152 260Z" fill="#161616"/>
<path d="M157 248L176 256" stroke="#eee" stroke-width="1.2"/>
<path d="M341.6 273.7L386.4 305.5L397.6 286.5L348.4 262.3Z" fill="#1c1c1e"/>
<path d="M349.4 280.2L357.8 266" stroke="#38383a" stroke-width="3.600"/>
<path d="M355.3 284.4L364.3 269.2" stroke="#38383a" stroke-width="3.600"/>
<path d="M361.2 288.5L370.7 272.5" stroke="#38383a" stroke-width="3.600"/>
<path d="M367.1 292.7L377.2 275.7" stroke="#38383a" stroke-width="3.600"/>
<path d="M373 296.8L383.7 278.9" stroke="#38383a" stroke-width="3.600"/>
<path d="M378.9 301L390.1 282.1" stroke="#38383a" stroke-width="3.600"/>
<path d="M389.1 290.9L423.5 305.9L458.8 316.5L494.1 323.5L517 334.1L511.8 351.8L508.2 358.8L495.9 376.5L458.8 355.3L423.5 327.1L386.5 305.9Z" fill="#0b0b0c"/>
<path d="M390.9 291.8C396.3 293.8 410.7 300.3 423.5 304.1C436.3 307.9 452.6 309.3 467.6 314.7C482.6 320.1 505.9 333.1 513.5 336.8" fill="none" stroke="#ee7a22" stroke-width="3.2"/>
<path d="M398.8 298.8C405.9 301.8 428.2 312.6 441.2 316.5C454.1 320.3 461.8 320.6 476.5 321.8C491.2 322.9 518.2 321.5 529.4 323.5C540.6 325.6 541.2 332.3 543.5 334.1" fill="none" stroke="#b9b9bb" stroke-width="2.6"/>
<path d="M458.8 321.8C464.7 322.1 482.3 322.3 494.1 323.5C505.9 324.7 521.5 326.6 529.4 328.8C537.3 331 539.7 335.4 541.8 336.8" fill="none" stroke="#6a4a40" stroke-width="2.6"/>
<path d="M437.6 321.8C442.6 324.7 456.8 333.5 467.6 339.4C478.5 345.3 492.9 352.6 502.9 357C512.9 361.5 523.5 364.4 527.6 365.9" fill="none" stroke="#ee2a1c" stroke-width="3.2"/>
<path d="M388.2 301.5C394.1 304.8 411.8 314.6 423.5 321.8C435.3 329 446.2 337.5 458.8 344.7C471.5 351.9 492.6 361.6 499.4 365" fill="none" stroke="#f7f7f7" stroke-width="2.6"/>
<path d="M387.3 303.2C393.1 306.6 410.1 316.2 421.8 323.5C433.4 330.9 444.3 340 457 347.3C469.8 354.7 491.6 364.3 498.5 367.6" fill="none" stroke="#3338c8" stroke-width="3"/>
<path d="M386.8 304.8C392.3 308.3 408.6 318.1 420 325.6C431.4 333.2 442.4 342.6 455.3 350C468.2 357.4 490.3 366.9 497.3 370.3" fill="none" stroke="#eef2ee" stroke-width="2"/>
<path d="M386.5 306.2C391.8 309.8 407.1 319.8 418.2 327.4C429.4 335.1 440.5 344.6 453.5 352.1C466.5 359.6 489.1 369.2 496.2 372.6" fill="none" stroke="#7fc8a8" stroke-width="1.6"/>
<path d="M511.8 335.9L540 331.5L547 327.1L559.4 330.6L570 339.4L567.3 350L547 359.7L517.9 352.6Z" fill="#2b2a2c"/>
<path d="M540 331.5L547 337.6L547 359.7L567.3 350L570 339.4L559.4 341.2Z" fill="#454346"/>
<path d="M495.9 363.2L508.2 358.8L527.6 369.4L536.5 367.6L557.6 378.2L546.2 394.1L528.5 400.3L520.6 402L518.8 391.5L494.1 382.6Z" fill="#2b2a2c"/>
<path d="M527.6 369.4L536.5 367.6L557.6 378.2L546.2 394.1L529.4 387Z" fill="#454346"/>
<path d="M543.5 383.5L554.1 380L548.8 391.5L541.8 393.2Z" fill="#0c0c0d"/>
</g>
<text transform="translate(246,179) rotate(203.600)" font-family="Liberation Sans,sans-serif" font-size="5.200" fill="#c9c9c9" textLength="108" lengthAdjust="spacingAndGlyphs">THIS SIDE TOWARDS SKY</text>
<g filter="url(#bl)">
<path d="M122.6 426.5C134.2 426.9 148.1 433.1 154.5 442.6C160.8 452.2 161.9 466.4 160.7 484.1C159.5 501.8 147.8 529.6 147.3 548.8C146.9 567.9 159.4 583.9 157.9 599.1C156.4 614.2 146.6 630.2 138.3 639.7C130 649.2 119.1 655.3 108 656.2C96.9 657.1 78.9 654 72 645.1C65.1 636.1 65.2 618.9 66.7 602.4C68.2 585.9 79.9 565.3 81 545.9C82 526.6 72.5 503.7 73.1 486.2C73.8 468.6 76.7 450.7 85 440.7C93.2 430.8 111 426.2 122.6 426.5Z" fill="none" stroke="#f0c01a" stroke-width="3.700"/>
<path d="M118.2 425.8C128.3 425.8 144.7 436 151.1 446.4C157.5 456.7 157.7 470.7 156.6 487.8C155.5 504.9 145 530.4 144.2 549C143.5 567.5 153.1 583.5 152.3 599.3C151.4 615.1 146.8 634.4 139.3 643.6C131.8 652.8 117.9 655.2 107 654.5C96.2 653.7 81.6 648.4 74.4 639C67.3 629.6 62.7 613.3 64 598C65.3 582.8 79.7 566 82.2 547.4C84.7 528.8 77.7 503.2 79 486.3C80.4 469.5 83.9 456.5 90.5 446.4C97 436.3 108.1 425.8 118.2 425.8Z" fill="none" stroke="#222" stroke-width="3.700"/>
<path d="M117.5 430.5C127.2 431.3 142.1 439.7 147.9 448.9C153.7 458 153.4 468.6 152.4 485.4C151.4 502.2 142.6 531 141.8 549.7C141 568.3 149 581.9 147.5 597.3C145.9 612.6 139.3 633.2 132.3 641.8C125.3 650.5 115.1 650 105.5 649.2C95.8 648.3 81.4 644.6 74.4 636.7C67.3 628.7 62.6 616.2 63.3 601.5C64.1 586.8 76.6 567.6 78.9 548.4C81.3 529.1 75.6 503.6 77.4 486.1C79.1 468.7 82.9 453.1 89.6 443.8C96.3 434.5 107.8 429.6 117.5 430.5Z" fill="none" stroke="#d8352e" stroke-width="3.700"/>
<path d="M120.9 429.5C130.3 429.2 142.6 436.1 148.6 446.3C154.7 456.5 158.3 473.5 157.2 490.8C156 508.2 143.3 532.4 141.9 550.3C140.5 568.2 149.2 583.5 148.6 598.2C147.9 612.9 145.2 629.3 137.9 638.4C130.7 647.4 114.8 653 105.1 652.6C95.4 652.3 84.9 645.2 79.7 636.1C74.5 626.9 73.1 612.9 74.1 597.8C75 582.7 84.3 563.5 85.4 545.4C86.6 527.4 79.9 505.7 81 489.5C82.1 473.3 85.3 458.3 91.9 448.3C98.6 438.3 111.4 429.9 120.9 429.5Z" fill="none" stroke="#f5f5f5" stroke-width="3.700"/>
<path d="M120.9 434.8C129.5 435.1 141.3 441 146.6 449.8C152 458.7 154.4 471.3 152.9 488.1C151.4 504.9 138.4 532.4 137.6 550.5C136.9 568.5 149.5 582 148.3 596.5C147.2 611 137.3 629.1 130.7 637.4C124.2 645.7 116.8 646 109 646.1C101.2 646.3 89.9 646.3 84 638.2C78.1 630.1 73.7 613 73.8 597.5C73.9 582 82.2 563.4 84.4 545.2C86.6 527.1 85.1 504.6 86.9 488.4C88.6 472.2 89.2 456.9 94.8 447.9C100.5 439 112.2 434.4 120.9 434.8Z" fill="none" stroke="#ef8b2b" stroke-width="3.700"/>
<path d="M124.6 432.8C132.1 432.8 141.6 443 145.6 452.4C149.6 461.9 149.3 473.1 148.6 489.4C147.8 505.7 141.2 532.4 141 550.1C140.9 567.8 148.3 582 147.5 595.8C146.8 609.5 143.4 624.4 136.5 632.6C129.6 640.8 114.7 644.9 106.3 644.8C97.8 644.6 90.8 639.8 85.8 631.8C80.8 623.7 75.4 610.6 76.4 596.3C77.4 582 89.7 562.9 91.6 545.8C93.5 528.6 86.3 509 87.8 493.3C89.3 477.7 94.5 462.1 100.6 452C106.8 441.9 117.1 432.7 124.6 432.8Z" fill="none" stroke="#f0c01a" stroke-width="3.700"/>
<path d="M123.6 433.8C130.8 433 137.9 440 142.4 449.9C146.8 459.8 150.6 477.3 150.4 493.2C150.2 509.1 142.3 528 141.3 545.1C140.3 562.3 145.9 581.7 144.5 596.1C143.1 610.5 138.5 624.1 133 631.8C127.5 639.4 119.2 641.4 111.6 641.9C103.9 642.3 92 641.6 87.1 634.3C82.2 626.9 81.2 611.7 82.2 597.6C83.2 583.5 91.3 567.5 93.1 549.8C94.8 532 91.6 506.9 92.7 491.1C93.8 475.4 94.4 464.7 99.6 455.2C104.8 445.7 116.5 434.7 123.6 433.8Z" fill="none" stroke="#222" stroke-width="3.700"/>
<path d="M123.3 439.7C130.8 440.1 142.3 446.2 146.3 454.9C150.4 463.7 149 476.7 147.6 492.3C146.3 507.9 139.4 531.3 138.1 548.7C136.8 566 140.6 582 139.9 596.2C139.2 610.3 138.7 625.9 133.9 633.6C129.1 641.2 118.1 642.3 111 642C103.9 641.7 95.8 639.2 91.1 631.8C86.4 624.3 82.7 611.1 82.9 597.4C83.1 583.6 91 566.8 92.2 549.5C93.5 532.2 88.9 509.7 90.4 493.6C92 477.5 95.9 461.9 101.4 452.9C106.8 443.9 115.8 439.4 123.3 439.7Z" fill="none" stroke="#d8352e" stroke-width="3.700"/>
<path d="M122.7 440.7C129.8 440.8 140.9 446 143.9 454.7C146.9 463.4 142 477.6 140.7 492.8C139.4 508.1 136.7 528.9 136.1 546.2C135.4 563.6 138.1 583 137 596.9C135.9 610.7 133.8 622.2 129.5 629.4C125.2 636.5 117.4 640.1 111.1 639.8C104.8 639.6 96 635.2 91.6 627.9C87.1 620.7 83.2 609.2 84.2 596.3C85.3 583.3 96.3 567.2 97.8 550.3C99.4 533.3 93.1 510.5 93.7 494.5C94.2 478.5 96.2 463 101 454C105.8 445 115.5 440.6 122.7 440.7Z" fill="none" stroke="#f5f5f5" stroke-width="3.700"/>
<path d="M123.3 444.1C129.6 444.3 136.7 452.4 139.3 460.6C141.9 468.8 140.2 478.7 138.9 493C137.6 507.4 132.5 530 131.7 546.7C130.9 563.3 134.8 579.5 133.9 593C133.1 606.6 131.1 620.1 126.5 628.1C121.9 636.2 111.8 641.2 106.4 641.2C100.9 641.1 97.7 636.3 93.9 627.9C90.1 619.5 82.8 604.5 83.6 590.7C84.4 577 96.3 561.1 98.5 545.2C100.6 529.4 96.1 509.7 96.5 495.4C96.9 481.2 96.6 468.2 101.1 459.6C105.6 451.1 116.9 443.9 123.3 444.1Z" fill="none" stroke="#f0c01a" stroke-width="3.700"/>
<path d="M116.2 443.7C121.3 443.9 127.6 453.2 130.5 461.6C133.4 469.9 134.6 479.3 133.6 493.8C132.6 508.4 125.1 532.2 124.5 548.8C123.9 565.4 130.5 580.2 130.1 593.5C129.7 606.7 125.9 621 122.1 628.5C118.4 636 113.2 638.8 107.5 638.5C101.9 638.1 92 634.6 88.1 626.5C84.1 618.4 82.7 602.6 83.8 589.7C84.9 576.9 93.2 565.1 94.7 549.3C96.2 533.4 91.8 509.4 92.7 494.6C93.6 479.9 96.2 469.3 100.1 460.8C104 452.3 111.2 443.6 116.2 443.7Z" fill="none" stroke="#d8352e" stroke-width="3.700"/>
<path d="M121.8 447.5C126.4 447.6 131.1 455.2 133.9 463.1C136.6 470.9 138.8 480.1 138.4 494.5C137.9 508.9 132.6 533.2 131.1 549.3C129.5 565.5 130.3 578.5 129 591.5C127.7 604.5 127 620.1 123.4 627.5C119.8 635 111.7 636.1 107.2 636C102.8 635.9 99.1 634.3 96.8 626.9C94.5 619.5 93 605 93.6 591.6C94.3 578.1 99.5 561.7 100.7 546.2C101.9 530.8 99.9 512.8 100.8 498.9C101.8 485 103 471.2 106.5 462.6C110 454 117.3 447.5 121.8 447.5Z" fill="none" stroke="#222" stroke-width="3.700"/>
<path d="M121.5 450.9C126.5 450.9 131.8 455.5 133.8 463.2C135.8 470.9 134.6 482.4 133.5 496.9C132.4 511.4 128.5 534.9 127.3 550.1C126.1 565.4 127.7 576.1 126.3 588.4C124.9 600.7 122.1 616.3 119.1 623.8C116 631.4 112.5 633.5 107.9 633.7C103.3 634 94.8 632.2 91.6 625.4C88.4 618.5 87.8 605.8 88.8 592.7C89.8 579.6 95.5 563.2 97.7 547C99.8 530.9 100.8 509.8 101.8 495.8C102.7 481.9 100.1 470.6 103.4 463.1C106.7 455.6 116.4 450.9 121.5 450.9Z" fill="none" stroke="#f5f5f5" stroke-width="3.700"/>
<path d="M124.2 451.1C128.2 451.4 133 457.1 134.8 464.7C136.7 472.2 137 482.6 135.3 496.5C133.6 510.4 126.1 532.3 124.6 548.2C123.1 564 126.9 579.1 126.5 591.4C126 603.7 124.3 615.3 121.8 622.1C119.3 628.9 115.4 632.6 111.5 632.4C107.6 632.3 100.4 627.9 98.3 621.3C96.2 614.6 98.2 604.3 98.9 592.4C99.6 580.6 101 565.7 102.5 550.1C104 534.6 106.5 513.7 107.9 499.1C109.2 484.6 108.1 470.9 110.8 462.9C113.5 454.9 120.2 450.8 124.2 451.1Z" fill="none" stroke="#ef8b2b" stroke-width="3.700"/>
<path d="M120.9 452.6C123.6 453.4 124.7 461.4 126.1 469.2C127.5 477 129.4 486.2 129.2 499.4C129.1 512.6 126 533.2 125.2 548.4C124.4 563.5 125.9 578.2 124.3 590.3C122.7 602.3 118.4 613.5 115.7 620.7C112.9 627.8 109.9 633.3 107.7 633C105.6 632.8 104.2 626.7 102.6 619C101.1 611.3 98 598.4 98.3 586.9C98.6 575.4 102.8 564.4 104.5 549.9C106.2 535.4 107.6 514.1 108.5 499.9C109.3 485.6 107.7 472.4 109.7 464.5C111.8 456.7 118.2 451.9 120.9 452.6Z" fill="none" stroke="#f0c01a" stroke-width="3.700"/>
<path d="M124 451.8C127.1 451.2 129.4 457.3 129.7 465.2C129.9 473.2 126.7 485.7 125.6 499.4C124.6 513 124 532 123.4 546.9C122.7 561.9 123.1 576.8 121.7 589C120.2 601.2 117.3 613.6 114.8 620.3C112.3 626.9 109.1 629.1 106.8 628.6C104.5 628.1 101.8 623.8 100.9 617.1C100 610.3 100.5 599.5 101.4 587.9C102.3 576.3 105.3 562.3 106.5 547.5C107.8 532.7 108.2 512.1 109 499C109.7 485.9 108.5 476.8 111 468.9C113.5 461 120.9 452.4 124 451.8Z" fill="none" stroke="#d8352e" stroke-width="3.700"/>
<path d="M121.3 458.1C123.7 458.6 126.2 464.4 126.6 471.9C126.9 479.5 124.2 490.4 123.5 503.4C122.8 516.5 123 536.6 122.3 550.4C121.6 564.2 120 575.4 119.4 586.3C118.8 597.1 119.7 608.5 118.5 615.6C117.3 622.8 114.9 629.1 112.1 629.1C109.4 629.1 103.2 622.9 102 615.7C100.9 608.6 104.4 596.9 105.2 585.9C105.9 575 105.7 563.7 106.5 550C107.4 536.3 109.3 517.2 110.3 503.7C111.3 490.3 110.5 476.8 112.4 469.2C114.2 461.6 118.9 457.7 121.3 458.1Z" fill="none" stroke="#222" stroke-width="3.700"/>
<path d="M107 470Q112 462 124 466L134 470L128 520L122 540L108 536L104 510Z" fill="#1c1c1c"/>
<path d="M88 548Q118 538 150 548" fill="none" stroke="#f8f8f8" stroke-width="5"/>
<path d="M138 548L146 584" fill="none" stroke="#f8f8f8" stroke-width="6"/>
<path d="M75 640Q66 650 62 662" stroke="#222" stroke-width="3" fill="none"/><path d="M140 640L136 678" stroke="#d8352e" stroke-width="2.500" fill="none"/><path d="M146 640L142 676" stroke="#ef8b2b" stroke-width="2.500" fill="none"/>
<path d="M50 664L70 640L84 652L78 664L66 676L60 670Z" fill="#1b1b1b"/>
<path d="M202.8 456.8C208.5 457.3 218.8 464.9 223.1 471.3C227.4 477.8 228.4 484.5 228.6 495.5C228.9 506.4 223.5 519.2 224.6 537C225.6 554.9 234.8 583.8 234.8 602.7C234.7 621.6 229.8 639.9 224.5 650.4C219.2 661 209.9 665.9 203.2 666.1C196.4 666.4 188.6 663.1 183.9 652.2C179.3 641.3 175.1 620.2 175 600.6C175 581 182.2 551.8 183.7 534.8C185.2 517.9 183.2 510.1 184.1 499C185 487.8 185.7 475.1 188.8 468.1C192 461.1 197.1 456.3 202.8 456.8Z" fill="none" stroke="#ee7f22" stroke-width="3.300"/>
<path d="M203.3 459.9C208.2 459.6 214 466 217.3 472.4C220.5 478.7 222.3 487.7 222.7 498.2C223.1 508.8 218.4 518.7 219.8 535.5C221.2 552.3 230.7 579.8 230.9 598.8C231.1 617.8 225.6 638.4 220.8 649.4C216 660.4 208 664.6 202 664.8C196 664.9 189.6 660.7 184.8 650.2C179.9 639.7 173.3 621.1 173.1 601.8C172.9 582.5 181.7 551.3 183.4 534.3C185.1 517.4 182.7 510.3 183.5 500.3C184.2 490.4 184.5 481.3 187.8 474.5C191.1 467.8 198.3 460.3 203.3 459.9Z" fill="none" stroke="#f08c30" stroke-width="3.300"/>
<path d="M204.4 467.2C209.6 467.2 217.3 469.2 220.7 474.9C224.2 480.6 224.7 491.2 225 501.6C225.2 512 221.7 520.7 222.5 537.3C223.3 553.8 229.4 582.4 229.7 600.9C229.9 619.3 227.9 637.7 223.9 648.1C219.8 658.6 211.8 663.6 205.5 663.6C199.2 663.6 190.8 659.1 186.1 648.3C181.3 637.4 176.8 617.7 177 598.6C177.2 579.6 185.9 550.3 187.3 534C188.6 517.8 184.5 511.1 184.9 501.2C185.3 491.3 186.5 480.5 189.8 474.8C193 469.1 199.3 467.2 204.4 467.2Z" fill="none" stroke="#f08c30" stroke-width="3.300"/>
<path d="M202.1 468.5C206.5 468.2 212.7 471.6 215.8 477.3C218.9 482.9 220.3 492.9 220.6 502.4C220.9 512 216.7 518.5 217.7 534.5C218.6 550.4 226.2 580.1 226.2 598.2C226.3 616.4 222.1 633.2 218.1 643.4C214.1 653.6 207.4 659.2 202.1 659.6C196.9 660 190.4 656.6 186.8 646C183.2 635.4 180.4 614.4 180.3 596C180.3 577.5 185.8 550.7 186.6 535.1C187.4 519.5 184.8 512 185.2 502.6C185.6 493.3 186.2 484.7 189 479.1C191.8 473.4 197.6 468.8 202.1 468.5Z" fill="none" stroke="#ee7f22" stroke-width="3.300"/>
<path d="M205.8 470.9C210.2 471.3 215.5 477.2 217.6 483.1C219.7 489 218.6 497.2 218.6 506C218.5 514.8 216.4 520.8 217.4 535.9C218.4 551 224.1 579 224.5 596.5C224.9 614 222.9 630.8 219.9 640.8C216.9 650.8 211.4 656.4 206.3 656.8C201.3 657.1 193.7 653.1 189.8 643C185.8 632.8 182.5 613.5 182.7 595.7C182.9 577.9 190.1 551.3 190.9 536.2C191.8 521.2 187.8 514.5 187.9 505.1C187.9 495.8 188.1 485.8 191.1 480.1C194.1 474.4 201.4 470.4 205.8 470.9Z" fill="none" stroke="#ee7f22" stroke-width="3.300"/>
<path d="M204.9 475.8C209.1 475.6 214.3 478.4 216.5 483.4C218.7 488.3 217.7 496.8 217.9 505.7C218 514.6 216.7 521.8 217.5 536.9C218.3 552 222.9 579 222.7 596.4C222.6 613.7 219.8 631.2 216.6 641C213.4 650.9 207.9 655.8 203.3 655.4C198.8 655 192 648.3 189.2 638.6C186.4 628.8 186.3 613.6 186.5 596.8C186.6 580 189.6 552.8 190.1 537.8C190.5 522.9 188.9 515.8 189.1 506.9C189.2 498.1 188.5 490 191.1 484.8C193.8 479.6 200.6 476.1 204.9 475.8Z" fill="none" stroke="#ee7f22" stroke-width="3.300"/>
<path d="M201 479.9C204.1 479.8 209 483.4 211.5 488C214 492.7 215.9 499.7 216.2 507.7C216.5 515.8 212.8 521.8 213.3 536.3C213.8 550.9 219.2 577.7 219.4 594.9C219.6 612.2 217.2 630.1 214.8 639.8C212.3 649.4 208.8 653.2 204.6 652.6C200.5 652 192.8 645.8 189.9 636.2C187.1 626.6 187.2 611.8 187.5 595C187.8 578.2 191.6 549.8 191.9 535.4C192.1 521.1 189 516.5 189.2 508.6C189.3 500.8 190.9 493.4 192.9 488.6C194.9 483.8 197.9 480 201 479.9Z" fill="none" stroke="#f08c30" stroke-width="3.300"/>
<path d="M202.1 485.3C205.3 485.1 210.2 487.7 212.1 491.9C213.9 496.1 212.8 503.4 213.1 510.5C213.4 517.5 213.1 520.7 213.7 534C214.3 547.4 217.2 573.9 216.9 590.6C216.5 607.3 214 624.4 211.6 634.3C209.1 644.1 205.1 650 202.2 649.9C199.4 649.9 196.9 643.3 194.5 634C192 624.7 187.6 610.8 187.3 594.4C187.1 577.9 192.3 549.5 193 535.4C193.6 521.3 191.3 516.8 191.3 509.7C191.2 502.6 190.9 496.9 192.7 492.8C194.5 488.7 198.8 485.4 202.1 485.3Z" fill="none" stroke="#ee7f22" stroke-width="3.300"/>
<path d="M205.1 488.4C207.9 488.2 211 490.4 212.6 494.2C214.1 498 214.7 504.4 214.4 511.1C214.2 517.8 210.5 521.2 211.1 534.6C211.6 548 217.6 574.9 217.7 591.5C217.8 608 213.8 625.1 211.7 634C209.6 642.9 207.8 645 205.1 644.9C202.4 644.8 198 642.4 195.6 633.3C193.3 624.2 191.1 606.6 191.1 590.4C191 574.1 194.7 548.7 195.3 535.7C195.8 522.8 194.3 519.5 194.4 512.8C194.5 506.1 194.2 499.8 195.9 495.7C197.7 491.7 202.3 488.7 205.1 488.4Z" fill="none" stroke="#ee7f22" stroke-width="3.300"/>
<path d="M201.2 491.4C202.7 491 205.4 492.9 207.1 496.7C208.8 500.5 211 507.8 211.3 514.1C211.6 520.4 208.6 521.8 208.7 534.6C208.9 547.3 212 574.9 212.1 590.6C212.2 606.4 210.5 620.2 209 629C207.5 637.9 205.2 643.2 203.1 643.7C201.1 644.3 198.3 641.4 196.7 632.3C195.1 623.3 193.7 605.7 193.6 589.5C193.5 573.3 196.3 548 196.2 535.2C196.2 522.5 193.3 519 193.5 513C193.7 506.9 196.3 502.7 197.6 499.1C198.8 495.5 199.6 491.8 201.2 491.4Z" fill="none" stroke="#ee7f22" stroke-width="3.300"/>
<path d="M203.7 492.5C205.5 492.6 207.2 497 208.3 500.9C209.4 504.9 210.2 510.4 210.1 516.1C210 521.9 207.9 523.5 207.7 535.6C207.5 547.7 209.3 573.6 209.1 588.7C209 603.9 207.9 617.6 206.8 626.5C205.6 635.4 203.6 642.1 202.2 642.1C200.7 642.2 199.5 636.2 197.9 627C196.2 617.9 192.8 602.5 192.4 587C192 571.5 194.8 546.1 195.6 534.1C196.4 522.1 196.9 520.6 197.2 514.9C197.5 509.2 196.3 503.6 197.4 499.8C198.5 496.1 201.8 492.3 203.7 492.5Z" fill="none" stroke="#f08c30" stroke-width="3.300"/>
<path d="M186 490C186.3 497.7 189.7 521 188 536C186.3 551 179.7 566.8 176 580C172.3 593.2 167.7 609.2 166 615" fill="none" stroke="#c9d8c4" stroke-width="2.200"/>
<path d="M190 490C190.3 497.7 193.8 521 192 536C190.2 551 182.8 566.8 179 580C175.2 593.2 170.7 609.2 169 615" fill="none" stroke="#e8eee4" stroke-width="2.200"/>
<path d="M194 490C194.3 497.7 198 521 196 536C194 551 186 566.8 182 580C178 593.2 173.7 609.2 172 615" fill="none" stroke="#a8c4a4" stroke-width="2.200"/>
<path d="M198 490C198.3 497.7 202.2 521 200 536C197.8 551 189.2 566.8 185 580C180.8 593.2 176.7 609.2 175 615" fill="none" stroke="#dde6d8" stroke-width="2.200"/>
<path d="M186 534Q206 526 224 534" fill="none" stroke="#333" stroke-width="2.600"/>
<path d="M176 452L181 432L214 428L215 484L192 492L176 496Z" fill="#e9ebf0"/>
<path d="M176 452L181 440L190 492L176 496Z" fill="#c8c6c4"/>
<text transform="translate(177,451) rotate(-62)" font-family="Liberation Sans,sans-serif" font-weight="bold" font-size="13" fill="#2f8fd6">3M</text>
<path d="M158 632L182 630L184 650L162 654Z" fill="#2a2a2a"/><path d="M156 622l6 8M166 620l4 10" stroke="#b9cdb6" stroke-width="2"/>
<path d="M292 447.9C305 446.9 326.7 449.7 334.5 456.8C342.3 463.8 342 476.1 338.6 490.2C335.2 504.2 315.9 524.1 314.2 541.2C312.4 558.3 328.3 576.8 328.2 592.8C328.2 608.7 322.2 627.6 314 637C305.9 646.4 291.1 648.6 279.3 649.2C267.5 649.8 250.4 649.6 243.1 640.5C235.8 631.5 232.3 611.4 235.4 594.9C238.6 578.5 260 558.2 261.8 541.8C263.7 525.3 247.5 509.5 246.6 496.3C245.7 483.1 248.9 470.8 256.4 462.7C264 454.6 278.9 448.9 292 447.9Z" fill="none" stroke="#262626" stroke-width="4.600"/>
<path d="M294.6 447.1C305.9 447.6 321.5 454.4 328.8 461.6C336.2 468.8 341.2 477.8 338.6 490.3C336 502.7 315.3 518.2 313.4 536.1C311.6 554 326.9 581.3 327.5 597.5C328.1 613.7 325.3 624.6 317 633.2C308.7 641.8 288.6 649.2 277.6 649.3C266.7 649.4 257.8 643 251.3 633.8C244.8 624.7 236.7 609.5 238.8 594.4C241 579.2 262.2 559.5 264.1 543.1C266.1 526.7 250.9 509.9 250.3 495.9C249.8 481.9 253.7 467.3 261 459.1C268.4 451 283.3 446.7 294.6 447.1Z" fill="none" stroke="#151515" stroke-width="4.600"/>
<path d="M307.4 446.4C317.7 446.6 330.8 458.4 336.4 466.1C342 473.8 343.9 480.3 340.9 492.7C337.9 505.1 319.2 524 318.4 540.7C317.6 557.4 336.1 577.6 336.2 593C336.2 608.4 326.4 624.4 318.8 633.2C311.3 642 300.2 645 290.6 645.7C281 646.4 268.1 645.3 261.3 637.2C254.4 629 247.5 612.5 249.7 596.8C251.9 581 272.8 559.9 274.4 542.8C276.1 525.8 259.8 507.3 259.8 494.3C259.7 481.4 266.5 473 274.4 465C282.3 457 297.1 446.2 307.4 446.4Z" fill="none" stroke="#151515" stroke-width="4.600"/>
<path d="M297.8 448.8C308.7 449 326.9 460 332.9 467.9C338.8 475.9 336.8 484.7 333.6 496.4C330.3 508.1 313.7 522 313.4 538.2C313.1 554.4 332.2 578.6 331.7 593.6C331.1 608.6 318.5 619.9 310.3 628.2C302.1 636.6 291.1 642.7 282.2 643.7C273.4 644.6 263 642.9 257.2 633.8C251.4 624.8 245.6 605.5 247.4 589.6C249.2 573.7 266.6 553.7 267.9 538.6C269.1 523.5 254.8 511.1 254.8 499.1C254.7 487.1 260.3 475 267.5 466.6C274.7 458.2 286.9 448.5 297.8 448.8Z" fill="none" stroke="#262626" stroke-width="4.600"/>
<path d="M297.4 451.7C307.9 451 321.6 455.3 327.3 463.3C333.1 471.4 334.3 487.8 331.7 500C329.2 512.2 313.9 521.1 312.1 536.7C310.3 552.2 322.2 577.6 320.9 593.2C319.7 608.8 311.6 621.5 304.7 630.4C297.8 639.3 287.7 646.1 279.4 646.6C271 647.1 260.5 642.2 254.6 633.4C248.8 624.6 242.2 608.8 244.4 593.8C246.7 578.8 266.8 559 268.2 543.3C269.7 527.7 253.8 512.5 253.2 499.8C252.5 487.2 256.9 475.7 264.3 467.6C271.7 459.6 286.9 452.4 297.4 451.7Z" fill="none" stroke="#262626" stroke-width="4.600"/>
<path d="M302.7 460.3C311.1 459.7 319.6 461.3 324.1 468.3C328.6 475.3 331.7 490.9 329.7 502.3C327.7 513.6 313.8 522.3 312.2 536.5C310.7 550.8 320.5 572.1 320.2 587.7C319.8 603.4 316.2 621.2 310.3 630.4C304.4 639.7 293.7 643.8 284.6 643.5C275.5 643.1 260.8 637.1 255.8 628.6C250.7 620.1 251.3 607.3 254.2 592.3C257.1 577.2 272.5 553.7 273.2 538.3C273.9 523 258.4 511.6 258.5 500.5C258.5 489.4 266.4 478.6 273.8 471.9C281.1 465.2 294.3 460.9 302.7 460.3Z" fill="none" stroke="#262626" stroke-width="4.600"/>
<path d="M296.9 457C305.5 457.2 314.7 464.4 318.9 471.2C323.1 478.1 324.5 486.4 322.2 498.1C319.8 509.7 305.9 526.5 304.8 541.3C303.8 556.2 315.6 573.2 315.8 587.3C316 601.4 311.5 617.3 306.1 626.1C300.6 634.9 290.9 639.9 283 639.9C275.2 639.9 264 635 259 626.1C254.1 617.2 251.8 601.3 253.4 586.4C255 571.5 267.1 551 268.6 536.8C270 522.5 262.1 512.1 261.9 501C261.6 489.9 261.2 477.4 267 470.1C272.8 462.8 288.2 456.8 296.9 457Z" fill="none" stroke="#1d1d1d" stroke-width="4.600"/>
<path d="M297.2 458.6C305.1 458.4 315.3 463.3 320 469.7C324.7 476.1 326.6 485.4 325.4 497C324.1 508.6 313.5 523.9 312.5 539.4C311.6 554.9 320.4 575.2 319.8 590C319.2 604.8 315.1 620.8 309.1 628.5C303 636.2 291.2 637.4 283.5 636.3C275.9 635.2 267.7 629.7 263.2 622.1C258.8 614.4 253.7 603.7 256.7 590.4C259.6 577.1 278.7 557.2 280.7 542.3C282.8 527.5 270.2 513.1 268.8 501.3C267.3 489.5 267.4 478.5 272.1 471.3C276.9 464.2 289.2 458.9 297.2 458.6Z" fill="none" stroke="#1d1d1d" stroke-width="4.600"/>
<path d="M296.1 463.4C302.4 463.7 311 467.3 314.7 473.2C318.4 479 319.9 487.5 318.5 498.3C317.1 509.1 306.9 523.4 306.3 538C305.6 552.7 315.6 571.8 314.5 586.3C313.5 600.9 305.5 616.9 300 625.3C294.4 633.6 287.9 636 281.1 636.5C274.3 636.9 262.7 635.7 259.3 627.8C255.8 620 257.3 604.1 260.5 589.6C263.7 575 278.1 555 278.4 540.5C278.8 526.1 262.8 514.2 262.5 502.7C262.3 491.3 271.1 478.1 276.7 471.6C282.3 465 289.8 463.1 296.1 463.4Z" fill="none" stroke="#1d1d1d" stroke-width="4.600"/>
<path d="M301.4 463.7C308.4 463.1 318.4 469.2 321.6 475.2C324.8 481.2 322.4 489.2 320.6 499.5C318.7 509.8 310.7 522.4 310.3 537.1C309.9 551.7 319.2 573 318.2 587.4C317.2 601.8 310.3 615 304.3 623.3C298.3 631.6 287.9 637 282.3 637.4C276.7 637.7 273.9 634.3 270.8 625.4C267.6 616.5 261.5 598.5 263.5 584C265.4 569.5 280.3 552.2 282.3 538.3C284.3 524.4 275.8 510.4 275.4 500.5C274.9 490.6 275.2 485.1 279.6 478.9C283.9 472.8 294.4 464.3 301.4 463.7Z" fill="none" stroke="#151515" stroke-width="4.600"/>
<path d="M302.2 466.8C307.3 467.8 312.1 473.6 315.3 480.4C318.5 487.2 323.6 497.3 321.4 507.6C319.2 517.9 303.1 528.4 302.1 542C301.1 555.7 315.2 576 315.4 589.4C315.6 602.8 308.1 615.7 303.4 622.4C298.7 629.1 293 630.4 287.2 629.6C281.4 628.8 272.4 625.3 268.8 617.5C265.2 609.8 263.7 596.3 265.6 583.1C267.6 570 279.5 552.3 280.5 538.7C281.5 525.1 271 512.2 271.8 501.5C272.6 490.8 279.9 480.3 285 474.5C290.1 468.7 297.2 465.8 302.2 466.8Z" fill="none" stroke="#151515" stroke-width="4.600"/>
<path d="M303.4 468.5C308.1 468.3 313.8 470.2 315.9 476.7C318 483.3 317 497.2 315.8 507.8C314.6 518.5 309.3 527.9 308.6 540.5C307.9 553.1 312 570.4 311.5 583.5C311 596.7 309.3 611.3 305.7 619.4C302 627.5 294.7 632.6 289.6 632.1C284.6 631.6 279.3 623.9 275.3 616.7C271.3 609.4 264.5 601.6 265.7 588.8C266.9 576.1 280.5 554.8 282.6 540.2C284.6 525.5 277.2 511.2 278.1 500.8C279 490.5 283.7 483.7 287.9 478.3C292.1 472.9 298.7 468.8 303.4 468.5Z" fill="none" stroke="#262626" stroke-width="4.600"/>
<path d="M304.8 472.2C309.8 471.5 315.6 475.1 317.9 480.1C320.1 485.2 320.4 492.4 318 502.3C315.6 512.2 304.2 526 303.2 539.6C302.2 553.1 312.6 570.2 312 583.6C311.3 596.9 303.2 612.5 299.4 619.7C295.6 626.9 293.3 627.1 289.2 626.7C285.1 626.3 277.8 625 275 617.3C272.1 609.7 269.4 593.2 271.9 581C274.5 568.7 288.4 555.8 290.4 543.7C292.4 531.7 284.4 518.6 283.9 508.6C283.4 498.7 284.1 490.2 287.6 484.1C291 478.1 299.7 472.9 304.8 472.2Z" fill="none" stroke="#151515" stroke-width="4.600"/>
<path d="M299.4 470.5C303.3 470.2 305.7 477.1 307.2 483.7C308.6 490.2 309 500.5 308.2 509.8C307.4 519.2 303.1 527 302.5 539.6C301.9 552.2 306 573 304.7 585.4C303.5 597.7 298.2 607.1 295 614C291.8 620.9 288.7 626.7 285.5 626.7C282.3 626.6 277.5 621.3 275.7 613.7C274 606.2 273.5 593.7 275 581.4C276.4 569 283.3 552.3 284.2 539.6C285.2 527 280.8 514.3 280.8 505.4C280.8 496.4 281 491.5 284.1 485.7C287.2 479.9 295.6 470.9 299.4 470.5Z" fill="none" stroke="#1d1d1d" stroke-width="4.600"/>
<path d="M299.7 478.5C303.5 477.3 311.4 476.4 313.1 481.8C314.8 487.1 311 501.6 309.9 510.7C308.9 519.8 307.2 523.9 306.8 536.1C306.5 548.4 309 571 307.9 584.2C306.8 597.4 303.8 607.9 300.2 615.3C296.6 622.8 289.2 628.7 286.4 628.9C283.7 629 285.2 623.5 283.5 616.3C281.9 609 275 598.2 276.7 585.2C278.4 572.2 292.1 550.6 293.7 538.2C295.3 525.8 286.9 519.1 286.3 510.9C285.7 502.6 287.8 494.3 290 489C292.3 483.6 295.9 479.7 299.7 478.5Z" fill="none" stroke="#1d1d1d" stroke-width="4.600"/>
<path d="M293.7 480.7C296.4 480.4 299.1 483.6 300.4 488.6C301.7 493.6 302.2 502.4 301.6 510.6C301 518.9 297.3 526.1 296.5 538.4C295.8 550.6 297.6 572.2 297 584.2C296.4 596.2 295.4 603.2 293.1 610.4C290.8 617.6 285.5 627.3 283.2 627.3C281 627.4 281.1 619 279.5 611C277.9 602.9 272.2 590.7 273.5 578.8C274.7 567 285.8 550.8 286.9 539.7C288.1 528.6 280.7 520.4 280.3 512.2C279.8 504 281.9 495.6 284.2 490.4C286.4 485.1 291 480.9 293.7 480.7Z" fill="none" stroke="#151515" stroke-width="4.600"/>
<path d="M297.1 477.9C299.3 477 305.7 479.9 306.4 485.6C307.2 491.3 303.3 503.2 301.4 512C299.6 520.8 295.7 527.2 295.4 538.2C295.1 549.3 299.4 565.4 299.5 578.4C299.7 591.3 299 608.7 296.1 615.9C293.2 623 284.5 622.3 282.1 621.5C279.8 620.7 282 617.8 282.2 611C282.5 604.3 282.8 592.6 283.5 580.9C284.3 569.1 285.5 552.5 286.5 540.4C287.6 528.4 288.7 517 289.8 508.8C290.8 500.6 291.7 496.3 292.9 491.2C294.1 486 294.8 478.8 297.1 477.9Z" fill="none" stroke="#262626" stroke-width="4.600"/>
<path d="M332 458C337 459.3 354.5 459.7 362 466C369.5 472.3 377.3 484.7 377 496C376.7 507.3 367.8 524 360 534C352.2 544 338 549.2 330 556C322 562.8 315 571.8 312 575" fill="none" stroke="#1a1a1a" stroke-width="2.400"/>
<path d="M270 536Q296 528 318 534" fill="none" stroke="#222" stroke-width="2.400"/><circle cx="266" cy="546" r="3" fill="#222"/>
<path d="M302 622Q322 618 344 634Q372 658 387 688Q376 704 352 700Q322 690 310 664Q300 640 302 622Z" fill="#19191a"/>
<path d="M318 628Q350 646 378 690" fill="none" stroke="#3a3a3c" stroke-width="2"/>
<path d="M338 630L372 652L366 662L334 640Z" fill="#222"/>
<path d="M366 652L395 664L416 672L412 684L388 678L362 664Z" fill="#161616"/>
<path d="M393 648L529 643L527 663L481 657L438 670L393 659Z" fill="url(#ps)"/>
<path d="M384 452Q384 446 391 446L504 446Q510 446 511 452L530 640Q530 647 523 647L400 651Q393 651 392 644Z" fill="url(#pd)"/>
<path d="M384.500 452L392.500 644" stroke="#d8d8d8" stroke-width="1.200"/>
<path d="M449 657L476 657L477 700L470 708L455 706L450 696Z" fill="#1a1a1b"/>
<path d="M448 664L478 663" stroke="#353537" stroke-width="3.400"/>
<path d="M448 672L478 671" stroke="#353537" stroke-width="3.400"/>
<path d="M448 680L478 679" stroke="#353537" stroke-width="3.400"/>
<path d="M448 688L478 687" stroke="#353537" stroke-width="3.400"/>
<path d="M448 696L478 695" stroke="#353537" stroke-width="3.400"/>
<path d="M351 708L399 714" stroke="#1f7d60" stroke-width="6" stroke-linecap="round"/>
<path d="M410 697L452 712" stroke="#1f7d60" stroke-width="6" stroke-linecap="round"/><path d="M412 692L455 707" stroke="#e8c22a" stroke-width="2.400"/>
<path d="M399 714L412 718" stroke="#ccc" stroke-width="2"/>
<path d="M413 721C420.8 725.8 444.7 737.7 460 750C475.3 762.3 492.3 779.3 505 795C517.7 810.7 531.8 829.8 536 844C540.2 858.2 537.2 871.8 530 880C522.8 888.2 499.2 890.8 493 893" fill="none" stroke="#1d8062" stroke-width="5.400"/>
<path d="M478 725C486.3 737.5 516 778.2 528 800C540 821.8 549.3 840 550 856C550.7 872 544 886.7 532 896C520 905.3 493.3 909 478 912C462.7 915 446.3 913.7 440 914" fill="none" stroke="#f4f4f4" stroke-width="2.600"/>
<path d="M477 727C485.2 739.7 514.5 781.8 526 803C537.5 824.2 546 838.7 546 854C546 869.3 537.8 884.8 526 895C514.2 905.2 491.8 909.9 475 915C458.2 920.1 433.8 923.8 425.5 925.5" fill="none" stroke="#f1c326" stroke-width="5.400"/>
<path d="M470.5 721C478 729.5 501.2 753.2 515.5 772C529.8 790.8 550.4 815.5 556.5 833.5C562.6 851.5 558.8 869.4 552 880C545.2 890.6 536.2 893.2 515.5 897C494.8 900.8 442.2 902 427.6 903" fill="none" stroke="#1d8062" stroke-width="5.600"/>
<path d="M428 897L470 896" stroke="#1d8062" stroke-width="5"/>
<path d="M458 704C457 709 459.3 726.7 452 734C444.7 741.3 427.3 746 414 748C400.7 750 384.7 749.3 372 746C359.3 742.7 343.7 731 338 728" fill="none" stroke="#e9742a" stroke-width="3"/>
<path d="M459.7 704C458.6 709.2 460.8 727.4 453.2 735.3C445.6 743.2 427.5 748.8 414 751.3C400.5 753.8 384.7 753 372 750.3C359.3 747.6 343.7 737.8 338 735.3" fill="none" stroke="#5b3d33" stroke-width="3"/>
<path d="M461.4 704C460.2 709.4 462.3 728.2 454.4 736.6C446.5 745.1 427.7 751.6 414 754.6C400.3 757.6 384.7 756.6 372 754.6C359.3 752.6 343.7 744.5 338 742.5" fill="none" stroke="#f0c31f" stroke-width="3"/>
<path d="M463.1 704C461.9 709.7 463.8 729 455.6 738C447.4 746.9 427.9 754.4 414 757.9C400.1 761.4 384.7 760.2 372 758.9C359.3 757.5 343.7 751.3 338 749.8" fill="none" stroke="#e04a2a" stroke-width="3"/>
<path d="M464.8 704C463.5 709.9 465.3 729.7 456.8 739.3C448.3 748.8 428.1 757.2 414 761.2C399.9 765.2 384.7 763.9 372 763.2C359.3 762.5 343.7 758.1 338 757" fill="none" stroke="#f2f2f2" stroke-width="3"/>
<path d="M466.5 704C465.1 710.1 466.8 730.5 458 740.6C449.2 750.7 428.3 760 414 764.5C399.7 769 384.7 767.5 372 767.5C359.3 767.4 343.7 764.8 338 764.3" fill="none" stroke="#8a5ac8" stroke-width="3"/>
<path d="M468.2 704C466.7 710.3 468.2 731.3 459.2 741.9C450.2 752.6 428.5 762.8 414 767.8C399.5 772.8 384.7 771.1 372 771.7C359.3 772.4 343.7 771.6 338 771.6" fill="none" stroke="#3a54c0" stroke-width="3"/>
<path d="M469.9 704C468.3 710.5 469.7 732.1 460.4 743.2C451.1 754.4 428.7 765.6 414 771.1C399.3 776.6 384.7 774.7 372 776C359.3 777.3 343.7 778.4 338 778.8" fill="none" stroke="#1f8a62" stroke-width="3"/>
<path d="M289 705L304 710L338 722L336 748L322 744L300 738L290 728Z" fill="#2c2c2d"/>
<path d="M300 738L330 742L332 766L302 764Z" fill="#1a1a1a"/><path d="M303 764L335 768L335 782L304 778Z" fill="#252526"/>
<path d="M288 716l20 4M289 726l16 3" stroke="#555" stroke-width="1.500"/>
<path d="M434 775L461 775L461 779.500L434 779.500ZM436 796L462 798.500L462 803L436 800.500Z" fill="#d4d4d2"/>
<path d="M326 828L381 823L381 854L327 851Z" fill="#151515"/>
<path d="M369 821L438 811L434 852L381 854Z" fill="#232324"/>
<path d="M366 762L430 760L432 815L369 821Z" fill="#303032"/>
<path d="M430 760L434 764L438 811L432 815Z" fill="#1b1b1c"/>
<ellipse cx="337" cy="843" rx="6" ry="3" fill="#444"/>
<path d="M342 857L424 858L427 892L424 942L417 952L342 950Z" fill="#101011"/>
<path d="M342 889L426 892M342 920L424 922" stroke="#2c2c2e" stroke-width="1.500"/>
</g>
<text transform="translate(98.500,722.500) rotate(-1.800)" font-family="Liberation Sans,sans-serif" font-size="13" fill="#8c8782" textLength="153" lengthAdjust="spacing">GPS Vehicle Tracker</text>
<text transform="translate(135.500,751.500) rotate(-1.500)" font-family="Liberation Sans,sans-serif" font-size="12" fill="#c4c1c2" textLength="80" lengthAdjust="spacing">User Manual</text>
<text transform="translate(143,761.500) rotate(-1.500)" font-family="Liberation Sans,sans-serif" font-size="7" fill="#d4d3dd" textLength="66" lengthAdjust="spacing">(Version 5.2N)</text>
<g filter="url(#bl)">
<path d="M135 780Q133.500 775 139 774.500L186 767.500Q191 766.500 193 771L229.500 852Q231.500 857.500 226 859L176 871.500Q171 872.500 169 868Z" fill="url(#pg)"/>
<path d="M193 869L204 866L211 888L202 891Z" fill="#aeb0b4"/>
<path d="M206 889C204.3 891.8 201.7 902.5 196 906C190.3 909.5 180.3 911 172 910C163.7 909 150.3 901.7 146 900" fill="none" stroke="#ee7d6e" stroke-width="1.800" opacity=".9"/>
<path d="M206 889C204.5 892.1 202.7 903.7 197 907.5C191.3 911.3 180.5 912.6 172 912C163.5 911.4 150.3 905.3 146 904" fill="none" stroke="#f2a59a" stroke-width="1.800" opacity=".9"/>
<path d="M206 889C204.7 892.3 203.7 904.8 198 909C192.3 913.2 180.7 914.2 172 914C163.3 913.8 150.3 909 146 908" fill="none" stroke="#a88ad6" stroke-width="1.800" opacity=".9"/>
<path d="M206 889C204.8 892.6 204.7 906 199 910.5C193.3 915 180.8 915.8 172 916C163.2 916.2 150.3 912.7 146 912" fill="none" stroke="#7fc7b8" stroke-width="1.800" opacity=".9"/>
<path d="M206 889C205 892.8 205.7 907.2 200 912C194.3 916.8 181 917.3 172 918C163 918.7 150.3 916.3 146 916" fill="none" stroke="#e4e4ea" stroke-width="1.800" opacity=".9"/>
<path d="M128 891L146 888L148 900L131 903ZM124 911L140 909L141 918L126 920Z" fill="#77777a"/>
<path d="M150 915Q175 930 205 905L210 890" fill="none" stroke="#e2e2e4" stroke-width="5" opacity=".8"/>
</g>
<text transform="translate(78.500,946) rotate(-2.500)" font-family="Liberation Sans,sans-serif" font-size="5" fill="#c9c9cb" textLength="198" lengthAdjust="spacing">This user manual has been specially designed to guide</text>
<text transform="translate(78.500,956.5) rotate(-2.500)" font-family="Liberation Sans,sans-serif" font-size="5" fill="#c9c9cb" textLength="198" lengthAdjust="spacing">you through the functions and features of your GPS</text>
<text transform="translate(78.500,967) rotate(-2.500)" font-family="Liberation Sans,sans-serif" font-size="5" fill="#c9c9cb" textLength="48" lengthAdjust="spacing">vehicle tracker.</text>
<path d="M70 974L282 964L282 965.500L70 975Z" fill="#8f8f91"/>
</svg>


</body>
</html>
